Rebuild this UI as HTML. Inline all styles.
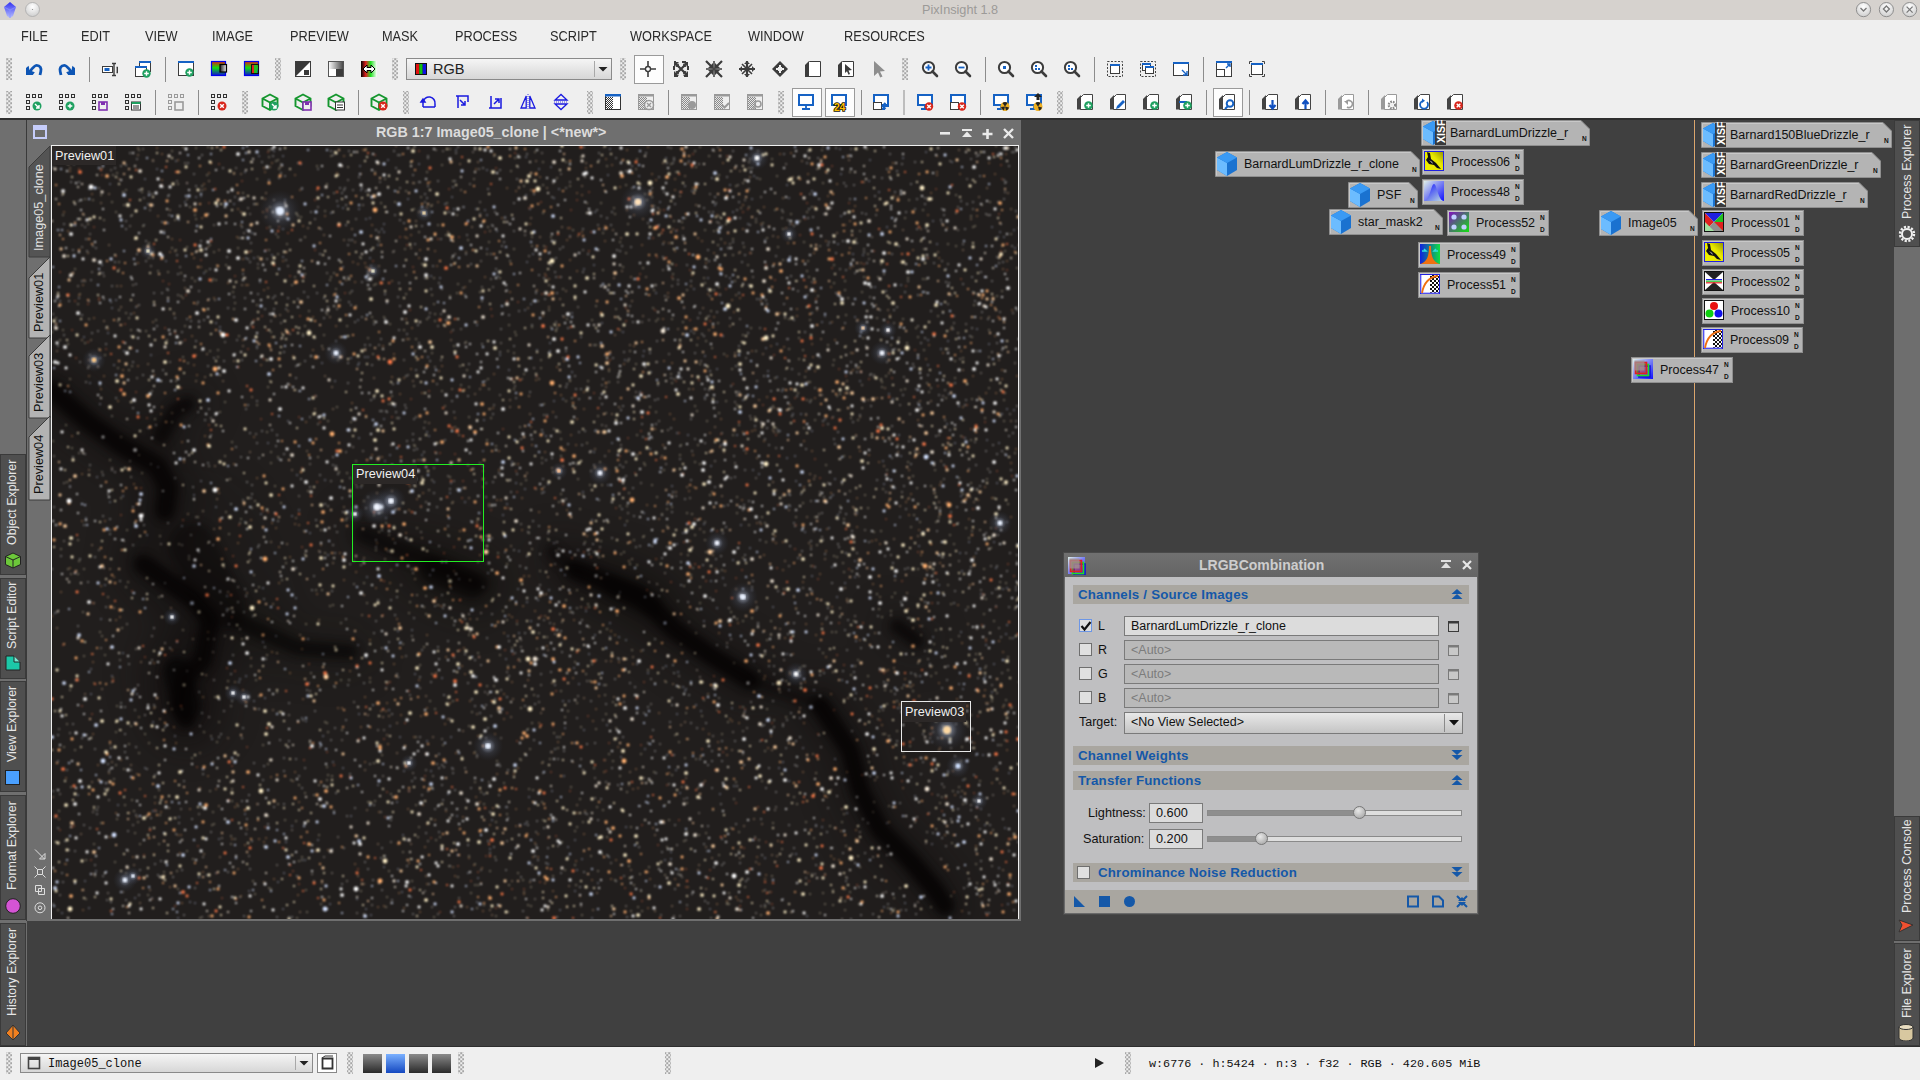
<!DOCTYPE html><html><head><meta charset="utf-8"><title>PixInsight</title><style>
*{box-sizing:border-box}
body{margin:0;width:1920px;height:1080px;overflow:hidden;background:#404040;position:relative;font-family:"Liberation Sans",sans-serif}
.a{position:absolute}
.t{position:absolute;white-space:pre;line-height:1}
.menu{position:absolute;top:29px;font-size:14px;color:#2a2a2a;transform:scaleX(.91);transform-origin:0 0;white-space:pre;line-height:1}
.pi{position:absolute;height:25px;background:#b4b4b4;border-top:1px solid #c6c6c6;border-left:1px solid #c6c6c6;border-right:1px solid #8f8f8f;border-bottom:1px solid #8f8f8f}
.pt{position:absolute;top:5px;font-size:12.5px;color:#111;white-space:pre;line-height:1}
.nd{position:absolute;font:bold 6px "Liberation Sans",sans-serif;color:#111;line-height:1}
.vt{position:absolute;white-space:pre;line-height:1;transform:rotate(-90deg);transform-origin:0 0}
.sh{position:absolute;left:1073px;width:396px;height:19px;background:#a9a6a0}
.sht{position:absolute;left:5px;top:3px;font:bold 13.3px "Liberation Sans",sans-serif;color:#1558a8;white-space:pre;letter-spacing:.2px;line-height:1}
.ed{position:absolute;border:1px solid #7a7a7a;background:#dcdcdc}
.cb{position:absolute;width:13px;height:13px;border:1px solid #6f6f6f;background:#e0e0e0}
</style></head><body><div class="a" style="left:0;top:0;width:1920px;height:20px;background:#d6d2ce"></div><svg class="a" style="left:0;top:0" width="1920" height="20"><defs><linearGradient id="gem" x1="0" y1="0" x2="0" y2="1"><stop offset="0" stop-color="#3030f0"/><stop offset="1" stop-color="#b8c0ff"/></linearGradient><radialGradient id="wb" cx=".5" cy=".3" r=".7"><stop offset="0" stop-color="#ffffff"/><stop offset="1" stop-color="#cfcfcf"/></radialGradient></defs><path d="M4 7 L10 2 L16 7 L13 16 L10 18 L7 16Z" fill="url(#gem)"/><path d="M4 7L10 10L16 7M10 10V18" stroke="#8890ff" stroke-width=".8" fill="none"/><circle cx="32.5" cy="9.5" r="7" fill="url(#wb)" stroke="#a9a9a9" stroke-width=".8"/><circle cx="32.5" cy="9.5" r=".6" fill="#888"/><circle cx="1863.5" cy="9.6" r="7.1" fill="url(#wb)" stroke="#8e8e8e" stroke-width="1"/><circle cx="1886.4" cy="9.6" r="7.1" fill="url(#wb)" stroke="#8e8e8e" stroke-width="1"/><circle cx="1909.6" cy="9.6" r="7.1" fill="url(#wb)" stroke="#8e8e8e" stroke-width="1"/><path d="M1860.5 8l3 3 3-3" stroke="#777" stroke-width="1.3" fill="none"/><path d="M1886.4 6l3 3-3 3-3-3z" stroke="#777" stroke-width="1.3" fill="none"/><path d="M1906.6 6.6l6 6M1912.6 6.6l-6 6" stroke="#777" stroke-width="1.3"/></svg><div class="t" style="left:922px;top:4px;font-size:12.7px;color:#9c9a98">PixInsight 1.8</div><div class="a" style="left:0;top:20px;width:1920px;height:98px;background:#efefef"></div><div class="a" style="left:0;top:118px;width:1920px;height:2px;background:#2e2e2e"></div><div class="menu" style="left:21px">FILE</div><div class="menu" style="left:81px">EDIT</div><div class="menu" style="left:145px">VIEW</div><div class="menu" style="left:212px">IMAGE</div><div class="menu" style="left:290px">PREVIEW</div><div class="menu" style="left:382px">MASK</div><div class="menu" style="left:455px">PROCESS</div><div class="menu" style="left:550px">SCRIPT</div><div class="menu" style="left:630px">WORKSPACE</div><div class="menu" style="left:748px">WINDOW</div><div class="menu" style="left:844px">RESOURCES</div><svg class="a" style="left:0;top:0" width="1920" height="120"><defs>
<pattern id="chk" x="0.5" y="0.5" width="4" height="4" patternUnits="userSpaceOnUse"><rect width="4" height="4" fill="#efefef"/><rect width="1.3" height="1.3" fill="#444"/><rect x="2" y="2" width="1.3" height="1.3" fill="#444"/></pattern>
<pattern id="chk2" width="2" height="2" patternUnits="userSpaceOnUse"><rect width="2" height="2" fill="#fff"/><rect width="1" height="1" fill="#333"/><rect x="1" y="1" width="1" height="1" fill="#333"/></pattern>
<pattern id="chk3" width="2" height="2" patternUnits="userSpaceOnUse"><rect width="2" height="2" fill="#e6e6e6"/><rect width="1" height="1" fill="#8a8a8a"/><rect x="1" y="1" width="1" height="1" fill="#8a8a8a"/></pattern>
<linearGradient id="rgbg" x1="0" y1="0" x2="0" y2="1"><stop offset="0" stop-color="#e02010"/><stop offset=".45" stop-color="#10e010"/><stop offset="1" stop-color="#1010d0"/></linearGradient>
<linearGradient id="grayg" x1="0" y1="0" x2="1" y2="0"><stop offset="0" stop-color="#222"/><stop offset="1" stop-color="#eee"/></linearGradient>
<linearGradient id="grayg2" x1="0" y1="0" x2="1" y2="0"><stop offset="0" stop-color="#fff"/><stop offset="1" stop-color="#444"/></linearGradient>
<linearGradient id="hueg" x1="0" y1="0" x2="1" y2="0"><stop offset="0" stop-color="#000"/><stop offset=".3" stop-color="#e02020"/><stop offset=".6" stop-color="#20e020"/><stop offset="1" stop-color="#fff"/></linearGradient>
<linearGradient id="btng" x1="0" y1="0" x2="0" y2="1"><stop offset="0" stop-color="#f6f6f6"/><stop offset="1" stop-color="#d6d6d6"/></linearGradient>
</defs><rect x="6" y="58" width="6" height="22" fill="url(#chk)"/><g transform="translate(34,69)"><path d="M-4 2.5 C-1.5 -1 0.5 -3.6 2.6 -3.6 C6.2 -3.6 7.6 -0.5 6.8 2.5 L6 6" fill="none" stroke="#0d55b5" stroke-width="2.8"/><path d="M-8 -1 L-5.4 -3.2 L-4.5 1.2 L0.8 3.2 L-1.2 6 L-8 6Z" fill="#0d55b5"/></g><g transform="translate(67,69) scale(-1,1)"><path d="M-4 2.5 C-1.5 -1 0.5 -3.6 2.6 -3.6 C6.2 -3.6 7.6 -0.5 6.8 2.5 L6 6" fill="none" stroke="#0d55b5" stroke-width="2.8"/><path d="M-8 -1 L-5.4 -3.2 L-4.5 1.2 L0.8 3.2 L-1.2 6 L-8 6Z" fill="#0d55b5"/></g><rect x="89.0" y="57" width="1" height="25" fill="#8c8c8c"/><g transform="translate(102,61)"><rect x="0.5" y="5.5" width="10" height="6" fill="#fff" stroke="#3c3c3c"/><rect x="2.5" y="7" width="5" height="3" fill="#1662c4"/><path d="M10 2.5h4M12 2.5v12M10 14.5h4M14.5 6.5h.8v5h-.8" stroke="#3c3c3c" stroke-width="1.4" fill="none"/></g><g transform="translate(135,61)"><rect x="4.5" y="0.5" width="11" height="10" fill="#fff" stroke="#3c3c3c"/><rect x="4" y="0" width="12" height="2" fill="#1662c4"/><rect x="0.5" y="5.5" width="11" height="10" fill="#fff" stroke="#3c3c3c"/><rect x="0" y="5" width="12" height="2" fill="#1662c4"/><circle cx="11.5" cy="12.5" r="4.2" fill="#1fa060"/><path d="M9.2 12.5h4.6M11.5 10.2v4.6" stroke="#fff" stroke-width="1.4"/></g><rect x="165.0" y="57" width="1" height="25" fill="#8c8c8c"/><g transform="translate(178,61)"><rect x="0.5" y="0.5" width="15" height="14" fill="#fff" stroke="#3c3c3c"/><rect x="0" y="0" width="16" height="2" fill="#1662c4"/><circle cx="11.5" cy="11.5" r="4.2" fill="#1fa060"/><path d="M9.2 11.5h4.6M11.5 9.2v4.6" stroke="#fff" stroke-width="1.4"/></g><g transform="translate(211,61)"><rect x="0.5" y="0.5" width="14" height="14" fill="url(#rgbg)" stroke="#0000f0" stroke-width="1.2"/><rect x="9" y="3.5" width="6.5" height="7.5" fill="url(#grayg)" stroke="#000" stroke-width="1.2"/></g><g transform="translate(244,61)"><rect x="0.5" y="0.5" width="14" height="14" fill="url(#rgbg)" stroke="#0000f0" stroke-width="1.2"/><rect x="8" y="4" width="3" height="8" fill="#e02020"/><rect x="10" y="4" width="3" height="8" fill="#20c020"/><rect x="7.5" y="3.5" width="7" height="9" fill="none" stroke="#111"/></g><rect x="275" y="58" width="6" height="22" fill="url(#chk)"/><g transform="translate(295,61)"><rect x="0.5" y="0.5" width="15" height="15" fill="#fff" stroke="#3c3c3c"/><path d="M1 15 L15 1 L1 1Z" fill="#3a3a3a"/><rect x="9" y="9" width="5" height="5" fill="#3a3a3a"/></g><g transform="translate(328,61)"><rect x="0.5" y="0.5" width="15" height="15" fill="url(#grayg2)" stroke="#555"/><rect x="1" y="8" width="7" height="7" fill="#fff"/><rect x="8" y="8" width="7" height="7" fill="#3c3c3c"/></g><g transform="translate(361,61)"><rect x="0" y="0" width="16" height="16" fill="url(#hueg)"/><path d="M2 8 L6 4 V6.5 H10 V4 L14 8 L10 12 V9.5 H6 V12Z" fill="#fff" stroke="#000" stroke-width="1"/></g><rect x="392" y="58" width="6" height="22" fill="url(#chk)"/><rect x="406.5" y="58.5" width="205" height="21" fill="url(#btng)" stroke="#8a8a8a"/><rect x="594" y="61" width="1" height="16" fill="#a8a8a8"/><path d="M598.5 67.0h9l-4.5 4.5z" fill="#222"/><rect x="415" y="63" width="12" height="12" fill="#111"/><rect x="416" y="64" width="3.3" height="10" fill="#e01010"/><rect x="419.3" y="64" width="3.4" height="10" fill="#10c010"/><rect x="422.7" y="64" width="3.3" height="10" fill="#1010e0"/><rect x="620" y="58" width="6" height="22" fill="url(#chk)"/><rect x="634.5" y="55.5" width="29" height="28" fill="#fdfdfd" stroke="#9a9a9a"/><g transform="translate(648,69)" stroke="#3c3c3c" fill="none"><path d="M-8 0h5M3 0h5M0 -8v5M0 3v5" stroke-width="1.6"/><circle r="2.5" stroke-width="1.4"/></g><g transform="translate(681,69)" fill="#3c3c3c"><rect x="-7" y="-7" width="14" height="14" fill="none" stroke="#3c3c3c" stroke-width="2" stroke-dasharray="4 6" stroke-dashoffset="2"/><path transform="rotate(45)" d="M0 -3 L-2.5 -5.5 L2.5 -5.5Z M-1 -5 h2 v-4 h-2z"/><path transform="rotate(135)" d="M0 -3 L-2.5 -5.5 L2.5 -5.5Z M-1 -5 h2 v-4 h-2z"/><path transform="rotate(225)" d="M0 -3 L-2.5 -5.5 L2.5 -5.5Z M-1 -5 h2 v-4 h-2z"/><path transform="rotate(315)" d="M0 -3 L-2.5 -5.5 L2.5 -5.5Z M-1 -5 h2 v-4 h-2z"/><path d="M-7 -7h5l-5 5zM7 -7h-5l5 5zM-7 7h5l-5-5zM7 7h-5l5-5z"/><path d="M-5 -5L5 5M5 -5L-5 5" stroke="#3c3c3c" stroke-width="2.2"/></g><g transform="translate(714,69)" fill="#3c3c3c"><path d="M-8 -8L-1 -1M8 -8L1 -1M-8 8L-1 1M8 8L1 1" stroke="#3c3c3c" stroke-width="2.2"/><path d="M-1 -1h-5l5-5zM1 -1h5l-5-5zM-1 1h-5l5 5zM1 1h5l-5 5z"/><path d="M-8 0h16M0 -8v16" stroke="#3c3c3c" stroke-width="1.5"/></g><g transform="translate(747,69)" fill="#3c3c3c"><path d="M-8 0h16M0 -8v16" stroke="#3c3c3c" stroke-width="2.2"/><path d="M-8 0l3-3v6zM8 0l-3-3v6zM0 -8l-3 3h6zM0 8l-3-3h6z"/><path d="M-5 -5L5 5M5 -5L-5 5" stroke="#3c3c3c" stroke-width="1.6"/></g><g transform="translate(780,69)" fill="#3c3c3c"><path d="M0 -8L8 0L0 8L-8 0Z"/><path d="M-2 -2h4v4h-4z M-4 -1h2v2h-2z M2 -1h2v2h-2z M-1 -4h2v2h-2z M-1 2h2v2h-2z" fill="#efefef"/></g><g transform="translate(805,61)"><path d="M0.5 15.5V4.5L4.5 0.5H15.5V15.5Z" fill="#fff" stroke="#3c3c3c"/><path d="M0 16V4L4 0V16Z" fill="#3c3c3c"/></g><g transform="translate(838,61)"><path d="M0.5 15.5V4.5L4.5 0.5H15.5V15.5Z" fill="#fff" stroke="#3c3c3c"/><path d="M0 16V4L4 0V16Z" fill="#3c3c3c"/><path d="M7 3 L14 9 L10.5 9.5 L12 13 L10.5 13.7 L9 10.2 L7 12Z" fill="#3c3c3c"/></g><g transform="translate(871,61)"><path d="M3 0 L14 10 L9 10.5 L11.5 15.5 L9.2 16.5 L7 11.5 L3 15Z" fill="#8e8e8e"/></g><rect x="902" y="58" width="6" height="22" fill="url(#chk)"/><g transform="translate(930,69)"><circle cx="-1.5" cy="-1.5" r="5.6" fill="#fff" stroke="#3c3c3c" stroke-width="2"/><path d="M2.5 2.5L7 7" stroke="#3c3c3c" stroke-width="2.6" stroke-linecap="round"/><path d="M-4.5 -1.5h6M-1.5 -4.5v6" stroke="#1662c4" stroke-width="1.8"/></g><g transform="translate(963,69)"><circle cx="-1.5" cy="-1.5" r="5.6" fill="#fff" stroke="#3c3c3c" stroke-width="2"/><path d="M2.5 2.5L7 7" stroke="#3c3c3c" stroke-width="2.6" stroke-linecap="round"/><path d="M-4.5 -1.5h6" stroke="#1662c4" stroke-width="1.8"/></g><rect x="985.0" y="57" width="1" height="25" fill="#8c8c8c"/><g transform="translate(1006,69)"><circle cx="-1.5" cy="-1.5" r="5.6" fill="#fff" stroke="#3c3c3c" stroke-width="2"/><path d="M2.5 2.5L7 7" stroke="#3c3c3c" stroke-width="2.6" stroke-linecap="round"/><rect x="-3" y="-3" width="3" height="3" fill="#1662c4"/></g><g transform="translate(1039,69)"><circle cx="-1.5" cy="-1.5" r="5.6" fill="#fff" stroke="#3c3c3c" stroke-width="2"/><path d="M2.5 2.5L7 7" stroke="#3c3c3c" stroke-width="2.6" stroke-linecap="round"/><rect x="-4" y="-4" width="2" height="2" fill="#1662c4"/><rect x="-1" y="-1" width="2" height="2" fill="#1662c4"/><rect x="-4" y="-1" width="2" height="2" fill="#1662c4"/></g><g transform="translate(1072,69)"><circle cx="-1.5" cy="-1.5" r="5.6" fill="#fff" stroke="#3c3c3c" stroke-width="2"/><path d="M2.5 2.5L7 7" stroke="#3c3c3c" stroke-width="2.6" stroke-linecap="round"/><rect x="-4" y="-4" width="2" height="2" fill="#1662c4"/><rect x="-1" y="-1" width="2" height="2" fill="#1662c4"/><rect x="-4" y="-1" width="2" height="2" fill="#1662c4"/></g><rect x="1094.0" y="57" width="1" height="25" fill="#8c8c8c"/><g transform="translate(1107,61)"><rect x="0.5" y="0.5" width="15" height="15" fill="none" stroke="#444" stroke-dasharray="2 1.5"/><rect x="3.5" y="3.5" width="9" height="9" fill="#fff" stroke="#3c3c3c"/><rect x="3" y="3" width="10" height="2" fill="#1662c4"/></g><g transform="translate(1140,61)"><rect x="0.5" y="0.5" width="15" height="15" fill="none" stroke="#444" stroke-dasharray="2 1.5"/><rect x="2.5" y="2.5" width="8" height="7" fill="#fff" stroke="#3c3c3c"/><rect x="2" y="2" width="9" height="2" fill="#1662c4"/><rect x="5.5" y="5.5" width="8" height="7" fill="#fff" stroke="#3c3c3c"/><rect x="5" y="5" width="9" height="2" fill="#1662c4"/></g><g transform="translate(1173,61)"><rect x="0.5" y="1.5" width="15" height="13" fill="#fff" stroke="#3c3c3c"/><rect x="0" y="1" width="16" height="2" fill="#1662c4"/><path d="M9 9L14 14M14 10v4h-4" stroke="#1662c4" stroke-width="1.4" fill="none"/></g><rect x="1203.0" y="57" width="1" height="25" fill="#8c8c8c"/><g transform="translate(1216,61)"><rect x="0.5" y="0.5" width="15" height="15" fill="#fff" stroke="#3c3c3c"/><rect x="0" y="0" width="16" height="2" fill="#1662c4"/><rect x="0.5" y="8.5" width="8" height="7" fill="#fff" stroke="#3c3c3c"/><path d="M10 7L14 3M11 3h3v3" stroke="#1662c4" stroke-width="1.4" fill="none"/></g><g transform="translate(1249,61)"><rect x="2.5" y="2.5" width="11" height="11" fill="#fff" stroke="#3c3c3c"/><rect x="2" y="2" width="12" height="2" fill="#1662c4"/><path d="M0.5 3V0.5H3M13 0.5h2.5V3M15.5 13v2.5H13M3 15.5H0.5V13" stroke="#444" fill="none"/></g><rect x="6" y="91" width="6" height="23" fill="url(#chk)"/><g transform="translate(26,94)" fill="none" stroke="#333" stroke-width="1"><rect x="0.5" y="0.5" width="3" height="3"/><rect x="6.5" y="0.5" width="3" height="3"/><rect x="12.5" y="0.5" width="3" height="3"/><rect x="0.5" y="6.5" width="3" height="3"/><rect x="0.5" y="12.5" width="3" height="3"/></g><circle cx="37" cy="106" r="4.5" fill="#1fa060"/><path d="M35 104l4 4M39 105v3h-3" stroke="#fff" stroke-width="1.4" fill="none"/><g transform="translate(59,94)" fill="none" stroke="#333" stroke-width="1"><rect x="0.5" y="0.5" width="3" height="3"/><rect x="6.5" y="0.5" width="3" height="3"/><rect x="12.5" y="0.5" width="3" height="3"/><rect x="0.5" y="6.5" width="3" height="3"/><rect x="0.5" y="12.5" width="3" height="3"/></g><circle cx="70" cy="106" r="4.5" fill="#1fa060"/><path d="M67.7 106h4.6M70 103.7v4.6" stroke="#fff" stroke-width="1.4"/><g transform="translate(92,94)" fill="none" stroke="#333" stroke-width="1"><rect x="0.5" y="0.5" width="3" height="3"/><rect x="6.5" y="0.5" width="3" height="3"/><rect x="12.5" y="0.5" width="3" height="3"/><rect x="0.5" y="6.5" width="3" height="3"/><rect x="0.5" y="12.5" width="3" height="3"/></g><rect x="99" y="102" width="8" height="8" fill="none" stroke="#8030b0" stroke-width="1.6"/><rect x="101" y="102" width="4" height="3" fill="#8030b0"/><g transform="translate(125,94)" fill="none" stroke="#333" stroke-width="1"><rect x="0.5" y="0.5" width="3" height="3"/><rect x="6.5" y="0.5" width="3" height="3"/><rect x="12.5" y="0.5" width="3" height="3"/><rect x="0.5" y="6.5" width="3" height="3"/><rect x="0.5" y="12.5" width="3" height="3"/></g><rect x="131.5" y="102" width="9" height="8" fill="#fff" stroke="#333"/><rect x="131.5" y="102" width="9" height="2" fill="#1fa060"/><path d="M133 106h6M133 108h6" stroke="#333"/><rect x="155.0" y="90" width="1" height="25" fill="#8c8c8c"/><g transform="translate(168,94)" fill="none" stroke="#9a9a9a" stroke-width="1"><rect x="0.5" y="0.5" width="3" height="3"/><rect x="6.5" y="0.5" width="3" height="3"/><rect x="12.5" y="0.5" width="3" height="3"/><rect x="0.5" y="6.5" width="3" height="3"/><rect x="0.5" y="12.5" width="3" height="3"/></g><rect x="175" y="102" width="8" height="8" fill="none" stroke="#9a9a9a" stroke-width="1.6"/><rect x="198.0" y="90" width="1" height="25" fill="#8c8c8c"/><g transform="translate(211,94)" fill="none" stroke="#333" stroke-width="1"><rect x="0.5" y="0.5" width="3" height="3"/><rect x="6.5" y="0.5" width="3" height="3"/><rect x="12.5" y="0.5" width="3" height="3"/><rect x="0.5" y="6.5" width="3" height="3"/><rect x="0.5" y="12.5" width="3" height="3"/></g><circle cx="222" cy="106" r="4.5" fill="#d8261c"/><path d="M220.2 104.2l3.6 3.6M223.8 104.2l-3.6 3.6" stroke="#fff" stroke-width="1.4"/><rect x="242" y="91" width="6" height="23" fill="url(#chk)"/><g transform="translate(270,102)" fill="none" stroke="#15962e" stroke-width="1.9"><path d="M0 -7.5L7.5 -3.5V4L0 8L-7.5 4V-3.5Z M-7.5 -3.5L0 0.5L7.5 -3.5 M0 0.5V8"/></g><circle cx="274" cy="106" r="4.5" fill="#1fa060"/><path d="M272 104l4 4M276 105v3h-3" stroke="#fff" stroke-width="1.4" fill="none"/><g transform="translate(303,102)" fill="none" stroke="#15962e" stroke-width="1.9"><path d="M0 -7.5L7.5 -3.5V4L0 8L-7.5 4V-3.5Z M-7.5 -3.5L0 0.5L7.5 -3.5 M0 0.5V8"/></g><rect x="303" y="102" width="8" height="8" fill="#efefef" stroke="#8030b0" stroke-width="1.6"/><rect x="305" y="102" width="4" height="3" fill="#8030b0"/><g transform="translate(336,102)" fill="none" stroke="#15962e" stroke-width="1.9"><path d="M0 -7.5L7.5 -3.5V4L0 8L-7.5 4V-3.5Z M-7.5 -3.5L0 0.5L7.5 -3.5 M0 0.5V8"/></g><rect x="335.5" y="102" width="9" height="8" fill="#fff" stroke="#333"/><path d="M337 105h6M337 107.5h6" stroke="#333"/><rect x="358.0" y="90" width="1" height="25" fill="#8c8c8c"/><g transform="translate(379,102)" fill="none" stroke="#15962e" stroke-width="1.9"><path d="M0 -7.5L7.5 -3.5V4L0 8L-7.5 4V-3.5Z M-7.5 -3.5L0 0.5L7.5 -3.5 M0 0.5V8"/></g><circle cx="383" cy="106" r="4.5" fill="#d8261c"/><path d="M381.2 104.2l3.6 3.6M384.8 104.2l-3.6 3.6" stroke="#fff" stroke-width="1.4"/><rect x="403" y="91" width="6" height="23" fill="url(#chk)"/><g transform="translate(429,102)" fill="none" stroke="#1a1ae0" stroke-width="1.5"><path d="M-6 5h12 M-6 5V0 A6 6 0 0 1 6 2V5"/><path d="M-8 0l2-3 2 3z" fill="#1a1ae0"/></g><g transform="translate(462,102)" fill="none" stroke="#1a1ae0" stroke-width="1.5"><path d="M-6 -6h12v6M-4 -6v12"/><path d="M-2 -2l5 5M3 -1v4h-4" /></g><g transform="translate(495,102)" fill="none" stroke="#1a1ae0" stroke-width="1.5"><path d="M-6 6h12v-10M-4 6v-12"/><path d="M-1 2l5-5M0 -3h4v4"/></g><g transform="translate(528,102)" fill="none" stroke="#1a1ae0" stroke-width="1.5"><path d="M-1.8 -6V6H-7ZM1.8 -6V6H7Z" stroke-width="1.3"/><path d="M0 -8v16" stroke-width=".8" stroke-dasharray="1 1"/></g><g transform="translate(561,102)" fill="none" stroke="#1a1ae0" stroke-width="1.5"><path d="M-6 -2H6L0 -7.5ZM-6 2H6L0 7.5Z" stroke-width="1.3"/><path d="M-7 0h14" stroke-width=".8" stroke-dasharray="1 1"/></g><rect x="587" y="91" width="6" height="23" fill="url(#chk)"/><g transform="translate(605,94)"><rect x="0.5" y="0.5" width="15" height="15" fill="#fff" stroke="#333"/><rect x="1" y="3" width="7" height="12" fill="url(#chk2)"/><rect x="0" y="0" width="16" height="2.5" fill="#1662c4"/></g><g transform="translate(638,94)"><rect x="0.5" y="0.5" width="15" height="15" fill="#efefef" stroke="#9a9a9a"/><rect x="1" y="3" width="8" height="12" fill="url(#chk3)"/><rect x="0" y="0" width="16" height="2.5" fill="#9a9a9a"/><circle cx="11" cy="11" r="4.5" fill="#efefef" stroke="#9a9a9a" stroke-width="1.5"/><path d="M9 9l4 4M13 9l-4 4" stroke="#9a9a9a" stroke-width="1.4"/></g><rect x="668.0" y="90" width="1" height="25" fill="#8c8c8c"/><g transform="translate(681,94)"><rect x="0.5" y="0.5" width="15" height="15" fill="#efefef" stroke="#9a9a9a"/><rect x="1" y="3" width="8" height="12" fill="url(#chk3)"/><rect x="0" y="0" width="16" height="2.5" fill="#9a9a9a"/><circle cx="11" cy="11" r="4" fill="#9a9a9a"/></g><g transform="translate(714,94)"><rect x="0.5" y="0.5" width="15" height="15" fill="#efefef" stroke="#9a9a9a"/><rect x="1" y="3" width="8" height="12" fill="url(#chk3)"/><rect x="0" y="0" width="16" height="2.5" fill="#9a9a9a"/><path d="M8 11l2.5 2.5L15 9" stroke="#9a9a9a" stroke-width="2" fill="none"/></g><g transform="translate(747,94)"><rect x="0.5" y="0.5" width="15" height="15" fill="#efefef" stroke="#9a9a9a"/><rect x="1" y="3" width="8" height="12" fill="url(#chk3)"/><rect x="0" y="0" width="16" height="2.5" fill="#9a9a9a"/><circle cx="11" cy="10" r="3" fill="none" stroke="#9a9a9a" stroke-width="1.6"/><path d="M9 12l-3 3" stroke="#9a9a9a" stroke-width="1.6"/></g><rect x="778" y="91" width="6" height="23" fill="url(#chk)"/><rect x="792.5" y="88.5" width="29" height="28" fill="#fdfdfd" stroke="#9a9a9a"/><g transform="translate(798,94)"><rect x="1" y="1" width="14" height="10" fill="#fff" stroke="#1662c4" stroke-width="2"/><path d="M8 11v3M4 15h8" stroke="#1662c4" stroke-width="1.8"/></g><rect x="825.5" y="88.5" width="29" height="28" fill="#fdfdfd" stroke="#9a9a9a"/><g transform="translate(831,94)"><rect x="1" y="1" width="14" height="10" fill="#fff" stroke="#1662c4" stroke-width="2"/><path d="M8 11v3M4 15h8" stroke="#1662c4" stroke-width="1.8"/><text x="3" y="16.5" font-family="Liberation Sans" font-weight="bold" font-size="10.5" fill="#ffc000" stroke="#111" stroke-width="1.6" paint-order="stroke" letter-spacing="-.3">24</text></g><rect x="861.0" y="90" width="1" height="25" fill="#8c8c8c"/><g transform="translate(873,94)"><rect x="1" y="1" width="14" height="10" fill="#fff" stroke="#1662c4" stroke-width="2"/><path d="M8 11v3M4 15h8" stroke="#1662c4" stroke-width="1.8"/><rect x="0.5" y="8.5" width="8" height="7" fill="#fff" stroke="#3c3c3c"/><path d="M16 12H9.5M12.5 9L9.5 12L12.5 15" stroke="#1662c4" stroke-width="2" fill="none"/></g><rect x="903.5" y="90" width="1" height="25" fill="#8c8c8c"/><g transform="translate(917,94)"><rect x="1" y="1" width="14" height="10" fill="#fff" stroke="#1662c4" stroke-width="2"/><path d="M8 11v3M4 15h8" stroke="#1662c4" stroke-width="1.8"/><circle cx="12" cy="12.5" r="4.2" fill="#d8261c"/><path d="M10.2 10.7l3.6 3.6M13.8 10.7l-3.6 3.6" stroke="#fff" stroke-width="1.4"/></g><g transform="translate(950,94)"><rect x="1" y="1" width="14" height="10" fill="#fff" stroke="#1662c4" stroke-width="2"/><path d="M8 11v3M4 15h8" stroke="#1662c4" stroke-width="1.8"/><rect x="0.5" y="8.5" width="8" height="7" fill="#fff" stroke="#3c3c3c"/><circle cx="12" cy="12.5" r="4.2" fill="#d8261c"/><path d="M10.2 10.7l3.6 3.6M13.8 10.7l-3.6 3.6" stroke="#fff" stroke-width="1.4"/></g><rect x="980.0" y="90" width="1" height="25" fill="#8c8c8c"/><g transform="translate(993,94)"><rect x="1" y="1" width="14" height="10" fill="#fff" stroke="#1662c4" stroke-width="2"/><path d="M8 11v3M4 15h8" stroke="#1662c4" stroke-width="1.8"/><circle cx="12" cy="12.5" r="4.5" fill="#f0b020"/><path d="M12 12.5l-2.5-3.5A4 4 0 0 1 14.5 9z M12 12.5l4 1A4 4 0 0 1 13 16.5z M12 12.5l-1 4A4 4 0 0 1 8 13z" fill="#222"/></g><g transform="translate(1026,94)"><rect x="1" y="1" width="14" height="10" fill="#fff" stroke="#1662c4" stroke-width="2"/><path d="M8 11v3M4 15h8" stroke="#1662c4" stroke-width="1.8"/><circle cx="12" cy="12.5" r="4.5" fill="#f0b020"/><path d="M12 12.5l-2.5-3.5A4 4 0 0 1 14.5 9z M12 12.5l4 1A4 4 0 0 1 13 16.5z" fill="#222"/><path d="M12 -1l-4 4h2.5v3h3v-3H16z" fill="#222"/></g><rect x="1057" y="91" width="6" height="23" fill="url(#chk)"/><g transform="translate(1077,94)"><path d="M3.5 15.5V3.5L6.5 0.5H15.5V15.5Z" fill="#fff" stroke="#444"/><path d="M0 15.5V5L4 1V15.5Z" fill="#444"/><circle cx="11.5" cy="11.5" r="4.3" fill="#1fa060"/><path d="M9.2 11.5h4.6M11.5 9.2v4.6" stroke="#fff" stroke-width="1.4"/></g><g transform="translate(1110,94)"><path d="M3.5 15.5V3.5L6.5 0.5H15.5V15.5Z" fill="#fff" stroke="#444"/><path d="M0 15.5V5L4 1V15.5Z" fill="#444"/><path d="M6 15l1-3 6-6 2 2-6 6z" fill="#1662c4"/></g><g transform="translate(1143,94)"><path d="M3.5 15.5V3.5L6.5 0.5H15.5V15.5Z" fill="#fff" stroke="#444"/><path d="M0 15.5V5L4 1V15.5Z" fill="#444"/><circle cx="11.5" cy="11.5" r="4.3" fill="#1fa060"/><path d="M9.2 11.5h4.6M11.5 9.2v4.6" stroke="#fff" stroke-width="1.4"/></g><g transform="translate(1176,94)"><path d="M3.5 15.5V3.5L6.5 0.5H15.5V15.5Z" fill="#fff" stroke="#444"/><path d="M0 15.5V5L4 1V15.5Z" fill="#444"/><rect x="3" y="7" width="8" height="2" fill="#1662c4"/><circle cx="11.5" cy="11.5" r="4.3" fill="#1fa060"/><path d="M9.2 11.5h4.6M11.5 9.2v4.6" stroke="#fff" stroke-width="1.4"/></g><rect x="1206.0" y="90" width="1" height="25" fill="#8c8c8c"/><rect x="1213.5" y="88.5" width="29" height="28" fill="#fdfdfd" stroke="#9a9a9a"/><g transform="translate(1219,94)"><path d="M3.5 15.5V3.5L6.5 0.5H15.5V15.5Z" fill="#fff" stroke="#444"/><path d="M0 15.5V5L4 1V15.5Z" fill="#444"/><circle cx="11" cy="9.5" r="3.3" fill="none" stroke="#1662c4" stroke-width="2"/><path d="M9 12l-3 3" stroke="#1662c4" stroke-width="2"/></g><rect x="1249.0" y="90" width="1" height="25" fill="#8c8c8c"/><g transform="translate(1262,94)"><path d="M3.5 15.5V3.5L6.5 0.5H15.5V15.5Z" fill="#fff" stroke="#444"/><path d="M0 15.5V5L4 1V15.5Z" fill="#444"/><path d="M10.5 6v8M7.5 11l3 3.5 3-3.5" stroke="#1050c0" stroke-width="2.2" fill="none"/></g><g transform="translate(1295,94)"><path d="M3.5 15.5V3.5L6.5 0.5H15.5V15.5Z" fill="#fff" stroke="#444"/><path d="M0 15.5V5L4 1V15.5Z" fill="#444"/><path d="M10.5 15v-8M7.5 10l3-3.5 3 3.5" stroke="#1050c0" stroke-width="2.2" fill="none"/></g><rect x="1325.0" y="90" width="1" height="25" fill="#8c8c8c"/><g transform="translate(1338,94)"><path d="M3.5 15.5V3.5L6.5 0.5H15.5V15.5Z" fill="#fff" stroke="#9a9a9a"/><path d="M0 15.5V5L4 1V15.5Z" fill="#9a9a9a"/><path d="M8 8a3.5 3.5 0 1 1 1 5" stroke="#9a9a9a" stroke-width="1.6" fill="none"/><path d="M6 7h4v4z" fill="#9a9a9a"/></g><rect x="1368.0" y="90" width="1" height="25" fill="#8c8c8c"/><g transform="translate(1381,94)"><path d="M3.5 15.5V3.5L6.5 0.5H15.5V15.5Z" fill="#fff" stroke="#9a9a9a"/><path d="M0 15.5V5L4 1V15.5Z" fill="#9a9a9a"/><circle cx="11" cy="11" r="3.2" fill="none" stroke="#8a8a8a" stroke-width="2.4" stroke-dasharray="1.6 1"/><circle cx="11" cy="11" r="1.2" fill="#eee"/></g><g transform="translate(1414,94)"><path d="M3.5 15.5V3.5L6.5 0.5H15.5V15.5Z" fill="#fff" stroke="#444"/><path d="M0 15.5V5L4 1V15.5Z" fill="#444"/><path d="M13 8a4 4 0 1 1 -4.5 -1" stroke="#1662c4" stroke-width="1.8" fill="none"/><path d="M8 4.5l3 2.3-3 2.2z" fill="#1662c4"/></g><g transform="translate(1447,94)"><path d="M3.5 15.5V3.5L6.5 0.5H15.5V15.5Z" fill="#fff" stroke="#444"/><path d="M0 15.5V5L4 1V15.5Z" fill="#444"/><circle cx="11.5" cy="11.5" r="4.3" fill="#d8261c"/><path d="M9.7 9.7l3.6 3.6M13.3 9.7l-3.6 3.6" stroke="#fff" stroke-width="1.4"/></g></svg><div class="t" style="left:433px;top:62px;font-size:14.5px;color:#222">RGB</div><div class="a" style="left:0;top:120px;width:27px;height:926px;background:#6f6f6f"></div><div class="a" style="left:0;top:454px;width:26px;height:121px;background:#4f4f4f;border:1px solid #3a3a3a"></div><div class="vt" style="left:6px;top:545px;font-size:12.4px;color:#e6e6e6">Object Explorer</div><svg class="a" style="left:4px;top:552px" width="18" height="17"><path d="M9 1L16.5 4.5V12.5L9 16L1.5 12.5V4.5Z" fill="#6cc83a" stroke="#222" stroke-width="1"/><path d="M1.5 4.5L9 8L16.5 4.5M9 8V16" stroke="#222" stroke-width="1" fill="none"/></svg><div class="a" style="left:0;top:578px;width:26px;height:101px;background:#4f4f4f;border:1px solid #3a3a3a"></div><div class="vt" style="left:6px;top:649px;font-size:12.4px;color:#e6e6e6">Script Editor</div><svg class="a" style="left:5px;top:655px" width="16" height="16"><path d="M1 1H9L15 7V15H1Z" fill="#1cc8a8" stroke="#222"/><path d="M9 1V7H15" fill="#7ee8d4" stroke="#222"/></svg><div class="a" style="left:0;top:681px;width:26px;height:111px;background:#4f4f4f;border:1px solid #3a3a3a"></div><div class="vt" style="left:6px;top:762px;font-size:12.4px;color:#e6e6e6">View Explorer</div><svg class="a" style="left:5px;top:770px" width="16" height="16"><rect x="0.5" y="0.5" width="14" height="14" fill="#4aa0ff" stroke="#222"/></svg><div class="a" style="left:0;top:795px;width:26px;height:125px;background:#4f4f4f;border:1px solid #3a3a3a"></div><div class="vt" style="left:6px;top:890px;font-size:12.4px;color:#e6e6e6">Format Explorer</div><svg class="a" style="left:4px;top:897px" width="18" height="18"><circle cx="9" cy="9" r="7.3" fill="#d454d4" stroke="#222"/></svg><div class="a" style="left:0;top:923px;width:26px;height:123px;background:#4f4f4f;border:1px solid #3a3a3a"></div><div class="vt" style="left:6px;top:1016px;font-size:12.4px;color:#e6e6e6">History Explorer</div><svg class="a" style="left:4px;top:1024px" width="18" height="18"><path d="M9 1L16 9L9 16L2 9Z" fill="#f08020" stroke="#333"/><path d="M9 1V16" stroke="#333"/></svg><div class="a" style="left:26px;top:120px;width:995px;height:801px;background:#6f6f6f;border-left:1px solid #3a3a3a"></div><svg class="a" style="left:33px;top:125px" width="15" height="15"><rect x="0" y="0" width="14" height="14" fill="#c6cdfb"/><rect x="2" y="5" width="10" height="7" fill="#6e6e6e"/></svg><div class="t" style="left:376px;top:124px;font:bold 14.3px 'Liberation Sans',sans-serif;color:#dcdcdc">RGB 1:7 Image05_clone | &lt;*new*&gt;</div><svg class="a" style="left:935px;top:124px" width="85" height="18" fill="#eaeaea"><rect x="5" y="8" width="10" height="2.6"/><rect x="27" y="5" width="10" height="2"/><path d="M32 7.5L37 13H27Z"/><path d="M51.2 5h2.6v10h-2.6z M47.5 8.7h10v2.6h-10z"/><path d="M69 5l9 9M78 5l-9 9" stroke="#eaeaea" stroke-width="2.4"/></svg><div class="a" style="left:27px;top:146px;width:24px;height:774px;background:#6f6f6f"></div><svg class="a" style="left:0;top:0" width="52" height="259"><polygon points="29,167 50,146 50,257 29,257" fill="#545454" stroke="#3c3c3c" stroke-width="1"/></svg><div class="vt" style="left:33px;top:251px;font-size:12.7px;color:#e0e0e0">Image05_clone</div><svg class="a" style="left:0;top:0" width="52" height="340"><polygon points="29,278 50,257 50,338 29,338" fill="#b3b3b3" stroke="#3c3c3c" stroke-width="1"/></svg><div class="vt" style="left:33px;top:332px;font-size:12.7px;color:#111">Preview01</div><svg class="a" style="left:0;top:0" width="52" height="420"><polygon points="29,356 50,335 50,418 29,418" fill="#b3b3b3" stroke="#3c3c3c" stroke-width="1"/></svg><div class="vt" style="left:33px;top:412px;font-size:12.7px;color:#111">Preview03</div><svg class="a" style="left:0;top:0" width="52" height="502"><polygon points="29,437 50,416 50,500 29,500" fill="#b3b3b3" stroke="#3c3c3c" stroke-width="1"/></svg><div class="vt" style="left:33px;top:494px;font-size:12.7px;color:#111">Preview04</div><svg class="a" style="left:31px;top:845px" width="20" height="72" stroke="#dedede" fill="none" stroke-width="1"><path d="M4 4.5l9.5 9.5M14 8.5v5.5h-5.5z"/><path d="M6.5 24.5h5v5h-5z M6.5 24.5l-3-3M11.5 24.5l3-3M6.5 29.5l-3 3M11.5 29.5l3 3"/><path d="M4.5 40.5h6v6h-6z M7.5 43.5h6v6h-6z"/><circle cx="9" cy="62.8" r="5"/><circle cx="9" cy="62.8" r="1.8"/></svg><div class="a" style="left:51px;top:145px;width:968px;height:774px;background:#f0f0f0"></div><div class="a" style="left:52px;top:146px;width:966px;height:773px;overflow:hidden"><svg width="967" height="773" viewBox="0 0 967 773" style="position:absolute;left:0;top:0;display:block">
<defs><radialGradient id="glow"><stop offset="0" stop-color="#f4f8ff" stop-opacity="1"/><stop offset=".18" stop-color="#c8d4ec" stop-opacity=".6"/><stop offset=".5" stop-color="#7888a8" stop-opacity=".2"/><stop offset="1" stop-color="#405070" stop-opacity="0"/></radialGradient>
<filter id="blur" color-interpolation-filters="sRGB" x="-20%" y="-20%" width="140%" height="140%"><feGaussianBlur stdDeviation="4.5"/></filter><filter id="blur2" color-interpolation-filters="sRGB" x="-20%" y="-20%" width="140%" height="140%"><feGaussianBlur stdDeviation="16"/></filter><filter id="grain" x="0" y="0" width="100%" height="100%"><feTurbulence type="fractalNoise" baseFrequency=".9" numOctaves="1" seed="5"/><feColorMatrix type="matrix" values="0 0 0 0 .75 0 0 0 0 .68 0 0 0 0 .62 0 0 0 3 -1.3"/></filter><filter id="sb" color-interpolation-filters="sRGB" x="-2%" y="-2%" width="104%" height="104%"><feGaussianBlur stdDeviation=".85"/></filter></defs>
<rect width="967" height="773" fill="#211e1d"/>
<g filter="url(#blur2)"><path d="M0 244L35 275L70 300L105 320L116 341L113 365" stroke="#0a0807" stroke-width="59" stroke-opacity="0.29" fill="none" stroke-linecap="round" stroke-linejoin="round"/><path d="M109 290L123 265L136 258" stroke="#0a0807" stroke-width="46" stroke-opacity="0.22" fill="none" stroke-linecap="round" stroke-linejoin="round"/><path d="M91 418L141 453L158 474L151 513L134 531L127 559L134 573" stroke="#0a0807" stroke-width="55" stroke-opacity="0.29" fill="none" stroke-linecap="round" stroke-linejoin="round"/><path d="M125 525L135 560" stroke="#0a0807" stroke-width="84" stroke-opacity="0.26" fill="none" stroke-linecap="round" stroke-linejoin="round"/><path d="M140 400L170 460" stroke="#0a0807" stroke-width="151" stroke-opacity="0.11" fill="none" stroke-linecap="round" stroke-linejoin="round"/><path d="M183 474L246 502L299 506" stroke="#0a0807" stroke-width="46" stroke-opacity="0.19" fill="none" stroke-linecap="round" stroke-linejoin="round"/><path d="M311 388L350 405L390 420L428 437" stroke="#0a0807" stroke-width="55" stroke-opacity="0.18" fill="none" stroke-linecap="round" stroke-linejoin="round"/><path d="M380 425L420 440" stroke="#0a0807" stroke-width="76" stroke-opacity="0.19" fill="none" stroke-linecap="round" stroke-linejoin="round"/><path d="M500 405L523 424" stroke="#0a0807" stroke-width="38" stroke-opacity="0.16" fill="none" stroke-linecap="round" stroke-linejoin="round"/><path d="M523 424L588 449L623 484L658 509L698 534" stroke="#0a0807" stroke-width="55" stroke-opacity="0.30" fill="none" stroke-linecap="round" stroke-linejoin="round"/><path d="M698 534L768 559" stroke="#0a0807" stroke-width="38" stroke-opacity="0.11" fill="none" stroke-linecap="round" stroke-linejoin="round"/><path d="M768 559L798 604L808 644L828 684L858 714L883 744L893 760" stroke="#0a0807" stroke-width="55" stroke-opacity="0.30" fill="none" stroke-linecap="round" stroke-linejoin="round"/><path d="M560 440L600 460" stroke="#0a0807" stroke-width="67" stroke-opacity="0.19" fill="none" stroke-linecap="round" stroke-linejoin="round"/><path d="M845 480L865 495" stroke="#0a0807" stroke-width="42" stroke-opacity="0.22" fill="none" stroke-linecap="round" stroke-linejoin="round"/></g><g filter="url(#blur)"><path d="M0 244L35 275L70 300L105 320L116 341L113 365" stroke="#060404" stroke-width="18" stroke-opacity="0.77" fill="none" stroke-linecap="round" stroke-linejoin="round"/><path d="M109 290L123 265L136 258" stroke="#060404" stroke-width="14" stroke-opacity="0.59" fill="none" stroke-linecap="round" stroke-linejoin="round"/><path d="M91 418L141 453L158 474L151 513L134 531L127 559L134 573" stroke="#060404" stroke-width="17" stroke-opacity="0.77" fill="none" stroke-linecap="round" stroke-linejoin="round"/><path d="M125 525L135 560" stroke="#060404" stroke-width="26" stroke-opacity="0.68" fill="none" stroke-linecap="round" stroke-linejoin="round"/><path d="M140 400L170 460" stroke="#060404" stroke-width="47" stroke-opacity="0.30" fill="none" stroke-linecap="round" stroke-linejoin="round"/><path d="M183 474L246 502L299 506" stroke="#060404" stroke-width="14" stroke-opacity="0.51" fill="none" stroke-linecap="round" stroke-linejoin="round"/><path d="M311 388L350 405L390 420L428 437" stroke="#060404" stroke-width="17" stroke-opacity="0.47" fill="none" stroke-linecap="round" stroke-linejoin="round"/><path d="M380 425L420 440" stroke="#060404" stroke-width="23" stroke-opacity="0.51" fill="none" stroke-linecap="round" stroke-linejoin="round"/><path d="M500 405L523 424" stroke="#060404" stroke-width="12" stroke-opacity="0.42" fill="none" stroke-linecap="round" stroke-linejoin="round"/><path d="M523 424L588 449L623 484L658 509L698 534" stroke="#060404" stroke-width="17" stroke-opacity="0.81" fill="none" stroke-linecap="round" stroke-linejoin="round"/><path d="M698 534L768 559" stroke="#060404" stroke-width="12" stroke-opacity="0.30" fill="none" stroke-linecap="round" stroke-linejoin="round"/><path d="M768 559L798 604L808 644L828 684L858 714L883 744L893 760" stroke="#060404" stroke-width="17" stroke-opacity="0.81" fill="none" stroke-linecap="round" stroke-linejoin="round"/><path d="M560 440L600 460" stroke="#060404" stroke-width="21" stroke-opacity="0.51" fill="none" stroke-linecap="round" stroke-linejoin="round"/><path d="M845 480L865 495" stroke="#060404" stroke-width="13" stroke-opacity="0.59" fill="none" stroke-linecap="round" stroke-linejoin="round"/></g>
<g filter="url(#sb)"><path d="M313 117h.1M22 735h.1M779 633h.1M204 195h.1M64 667h.1M607 567h.1M530 49h.1M854 356h.1M637 345h.1M486 711h.1M149 121h.1M756 727h.1M751 626h.1M327 666h.1M745 163h.1M799 226h.1M437 263h.1M688 152h.1M575 4h.1M524 715h.1M567 516h.1M734 82h.1M870 454h.1M340 231h.1M109 666h.1M243 378h.1M56 183h.1M713 733h.1M264 211h.1M7 673h.1M67 33h.1M467 42h.1M519 289h.1M49 243h.1M284 180h.1M173 609h.1M518 91h.1M16 85h.1M783 194h.1M350 511h.1M620 217h.1M909 205h.1M191 544h.1M0 470h.1M132 314h.1M673 97h.1M418 555h.1M582 200h.1M211 66h.1M479 281h.1M609 87h.1M525 667h.1M623 733h.1M623 105h.1M304 426h.1M755 237h.1M394 511h.1M636 17h.1M700 285h.1M426 590h.1M215 63h.1M775 383h.1M77 667h.1M673 425h.1M821 438h.1M946 171h.1M780 461h.1M954 8h.1M355 92h.1M110 34h.1M422 719h.1M168 187h.1M445 628h.1M403 730h.1M313 616h.1M820 570h.1M928 750h.1M859 348h.1M452 487h.1M941 151h.1M243 626h.1M537 252h.1M525 273h.1M464 663h.1M541 575h.1M656 148h.1M269 399h.1M856 353h.1M589 505h.1M128 625h.1M712 295h.1M867 550h.1M368 104h.1M922 411h.1M88 643h.1M752 295h.1M848 558h.1M243 29h.1M342 518h.1M763 145h.1M212 22h.1M723 390h.1M846 51h.1M924 700h.1M713 530h.1M724 397h.1M703 284h.1M185 658h.1M353 91h.1M925 70h.1M86 220h.1M82 167h.1M386 56h.1M487 577h.1M596 762h.1M413 528h.1M167 78h.1M428 656h.1M320 79h.1M162 152h.1M827 210h.1M396 573h.1M501 266h.1M694 307h.1M214 692h.1M763 252h.1M951 506h.1M52 230h.1M64 474h.1M431 341h.1M641 309h.1M14 632h.1M495 500h.1M684 751h.1M842 50h.1M313 551h.1M782 713h.1M742 451h.1M40 728h.1M888 602h.1M9 446h.1M556 639h.1M733 492h.1M959 371h.1M428 643h.1M861 539h.1M751 436h.1M400 316h.1M739 7h.1M933 341h.1M82 338h.1M182 27h.1M470 384h.1M452 548h.1M238 229h.1M544 563h.1M285 29h.1M358 340h.1M58 502h.1M754 478h.1M566 601h.1M300 257h.1M314 121h.1M264 705h.1M805 352h.1M612 96h.1M726 695h.1M638 395h.1M205 332h.1M900 562h.1M327 91h.1M595 359h.1M151 726h.1M408 385h.1M687 48h.1M428 409h.1M371 659h.1M338 437h.1M205 58h.1M836 207h.1M135 37h.1M805 381h.1M369 570h.1M774 511h.1M600 46h.1M709 378h.1M943 28h.1M303 136h.1M318 494h.1M102 229h.1M913 647h.1M640 129h.1M441 662h.1M477 663h.1M224 382h.1M564 714h.1M732 201h.1M671 17h.1M952 647h.1M62 431h.1M491 449h.1M142 112h.1M686 477h.1M253 386h.1M132 316h.1M568 41h.1M801 207h.1M512 215h.1M145 229h.1M186 63h.1M590 99h.1M368 766h.1M965 230h.1M700 205h.1M738 528h.1M383 674h.1M559 485h.1M30 744h.1M686 754h.1M760 198h.1M763 225h.1M326 761h.1M410 520h.1M118 106h.1M370 247h.1M196 139h.1M394 665h.1M30 375h.1M867 307h.1M199 374h.1M888 417h.1M371 347h.1M288 407h.1M422 607h.1M830 579h.1M247 656h.1M838 169h.1M623 33h.1M231 115h.1M417 712h.1M212 144h.1M366 314h.1M931 694h.1M836 524h.1M764 489h.1M879 47h.1M809 117h.1M857 324h.1M460 471h.1M192 359h.1M213 53h.1M375 61h.1M329 565h.1M516 82h.1M192 554h.1M102 708h.1M596 1h.1M906 459h.1M877 199h.1M731 396h.1M128 707h.1M712 533h.1M680 154h.1M156 486h.1M901 625h.1M903 649h.1M675 755h.1M887 112h.1M653 635h.1M68 471h.1M926 354h.1M749 537h.1M431 765h.1M194 139h.1M559 515h.1M164 643h.1M401 721h.1M885 26h.1M362 591h.1M560 19h.1M761 211h.1M806 174h.1M42 537h.1M460 536h.1M40 48h.1M834 525h.1M716 602h.1M122 581h.1M563 489h.1M120 504h.1M623 44h.1M760 305h.1M290 562h.1M530 86h.1M705 377h.1M157 27h.1M825 252h.1M336 598h.1M437 750h.1M18 422h.1M921 230h.1M607 373h.1M309 581h.1M728 167h.1M447 305h.1M926 674h.1M466 318h.1M183 661h.1M598 733h.1M964 303h.1M817 309h.1M167 347h.1M53 375h.1M893 689h.1M575 64h.1M899 183h.1M348 248h.1M808 305h.1M571 335h.1M745 170h.1M510 194h.1M801 224h.1M31 139h.1M887 537h.1M650 95h.1M156 68h.1M534 22h.1M176 137h.1M365 353h.1M752 341h.1M488 31h.1M937 17h.1M936 557h.1M330 311h.1M719 590h.1M320 309h.1M213 26h.1M334 565h.1M106 70h.1M375 562h.1M450 72h.1M728 8h.1M466 622h.1M335 557h.1M668 148h.1M837 676h.1M726 91h.1M666 596h.1M582 69h.1M557 223h.1M885 10h.1M81 711h.1M891 207h.1M41 588h.1M367 112h.1M110 261h.1M346 698h.1M505 221h.1M803 60h.1M276 704h.1M908 28h.1M857 369h.1M130 296h.1M658 287h.1M861 104h.1M352 232h.1M411 671h.1M393 578h.1M418 473h.1M452 573h.1M668 301h.1M664 423h.1M880 623h.1M331 200h.1M642 341h.1M601 682h.1M248 44h.1M493 306h.1M779 548h.1M512 171h.1M403 272h.1M934 247h.1M745 530h.1M49 440h.1M254 276h.1M464 45h.1M867 384h.1M238 411h.1M950 233h.1M360 182h.1M355 193h.1M879 521h.1M547 550h.1M142 219h.1M632 161h.1M798 311h.1M493 737h.1M471 460h.1M341 393h.1M227 401h.1M222 733h.1M13 718h.1M524 299h.1M754 269h.1M41 516h.1M425 176h.1M874 213h.1M851 642h.1M497 133h.1M398 557h.1M795 626h.1M102 517h.1M572 218h.1M462 628h.1M774 405h.1M744 462h.1M186 397h.1M493 470h.1M357 364h.1M959 317h.1M618 268h.1M476 534h.1M340 135h.1M612 229h.1M120 93h.1M373 701h.1M389 460h.1M691 59h.1M491 170h.1M620 50h.1M752 577h.1M646 192h.1M532 263h.1M532 246h.1M228 70h.1M714 729h.1M640 401h.1M207 693h.1M375 489h.1M775 651h.1M484 234h.1M441 262h.1M209 219h.1M247 379h.1M165 119h.1M202 291h.1M525 125h.1M636 741h.1M910 765h.1M641 243h.1M611 173h.1M30 328h.1M129 689h.1M787 714h.1M126 689h.1M876 69h.1M316 122h.1M568 372h.1M888 339h.1M153 43h.1M740 78h.1M839 767h.1M481 711h.1M189 750h.1M457 469h.1M445 354h.1M429 737h.1M824 394h.1M182 318h.1M935 735h.1M869 409h.1M774 95h.1M662 107h.1M804 693h.1M458 146h.1M960 164h.1M102 562h.1M808 494h.1M433 131h.1M69 140h.1M238 527h.1M711 745h.1M191 194h.1M611 299h.1M431 325h.1M518 114h.1M820 395h.1M707 718h.1M586 642h.1M798 75h.1M455 42h.1M581 643h.1M130 757h.1M621 83h.1M543 321h.1M759 99h.1M943 190h.1M950 224h.1M526 90h.1M622 273h.1M725 537h.1M464 680h.1M430 239h.1M485 144h.1M37 230h.1M669 273h.1M430 722h.1M415 761h.1M918 439h.1M896 570h.1M942 587h.1M324 442h.1M383 105h.1M118 741h.1M717 80h.1M402 425h.1M559 733h.1M678 573h.1M532 688h.1M552 626h.1M853 533h.1M487 366h.1M662 171h.1M795 455h.1M110 8h.1M478 78h.1M325 397h.1M126 14h.1M719 200h.1M798 122h.1M105 2h.1M246 749h.1M646 92h.1M347 747h.1M933 544h.1M705 711h.1M75 722h.1M140 190h.1M288 191h.1M341 651h.1M311 4h.1M848 559h.1M754 225h.1M654 117h.1M356 663h.1M292 434h.1M447 324h.1M917 373h.1M191 113h.1M470 352h.1M828 398h.1M86 117h.1M212 696h.1M515 94h.1M584 623h.1M250 503h.1M761 712h.1M680 575h.1M150 72h.1M535 390h.1M261 204h.1M856 463h.1M612 215h.1M741 508h.1M67 123h.1M581 518h.1M661 243h.1M785 38h.1M600 28h.1M152 38h.1M955 604h.1M230 20h.1M445 112h.1M506 596h.1M216 142h.1M58 691h.1M736 97h.1M947 495h.1M281 211h.1M42 172h.1M793 247h.1M334 543h.1M885 29h.1M675 210h.1M227 437h.1M424 651h.1M69 614h.1M776 50h.1M14 718h.1M378 36h.1M866 274h.1M138 663h.1M185 91h.1M375 678h.1M220 377h.1M951 123h.1M37 214h.1M513 304h.1M793 79h.1M616 147h.1M762 107h.1M911 261h.1M193 699h.1M261 171h.1M205 658h.1M651 583h.1M940 637h.1M515 364h.1M342 208h.1M27 149h.1M220 191h.1M61 532h.1M425 376h.1M349 569h.1M501 745h.1M691 286h.1M926 587h.1M472 748h.1M180 693h.1M522 474h.1M332 760h.1M895 82h.1M100 753h.1M442 8h.1M712 409h.1M753 536h.1M940 352h.1M521 532h.1M303 718h.1M437 358h.1M528 750h.1M12 66h.1M583 61h.1M66 255h.1M103 657h.1M85 628h.1M144 209h.1M905 553h.1M682 166h.1M483 697h.1M806 222h.1M553 95h.1M789 685h.1M657 588h.1M404 607h.1M265 448h.1M840 290h.1M934 557h.1M241 210h.1M922 597h.1M359 89h.1M712 61h.1M385 120h.1M604 34h.1M608 64h.1M779 141h.1M443 588h.1M664 766h.1M617 627h.1M910 497h.1M944 247h.1M345 473h.1M768 428h.1M557 305h.1M442 228h.1M809 225h.1M306 118h.1M554 13h.1M298 525h.1M273 70h.1M292 10h.1M763 61h.1M875 424h.1M352 762h.1M71 224h.1M827 316h.1M617 97h.1M603 283h.1M413 141h.1M780 176h.1M387 225h.1M238 239h.1M525 47h.1M779 347h.1M251 553h.1M955 115h.1M486 688h.1M665 69h.1M31 764h.1M153 290h.1M709 155h.1M354 173h.1M367 534h.1M691 83h.1M41 508h.1M124 597h.1M493 128h.1M731 424h.1M715 251h.1M109 268h.1M286 562h.1M779 710h.1M709 78h.1M285 27h.1M354 387h.1M665 758h.1M449 354h.1M921 382h.1M841 17h.1M438 679h.1M690 354h.1M32 134h.1M480 299h.1M46 619h.1M920 171h.1M220 17h.1M585 432h.1M472 430h.1M770 478h.1M477 430h.1M359 223h.1M804 684h.1M687 577h.1M941 594h.1M738 259h.1M707 254h.1M596 726h.1M798 102h.1M649 610h.1M357 717h.1M721 395h.1M801 120h.1M301 116h.1M509 249h.1M148 642h.1M829 283h.1M20 290h.1M46 8h.1M951 561h.1M641 42h.1M186 723h.1M151 551h.1M156 630h.1M695 242h.1M675 609h.1M804 289h.1M756 28h.1M424 23h.1M219 631h.1M934 493h.1M375 738h.1M804 369h.1M251 80h.1M390 220h.1M18 25h.1M913 577h.1M667 487h.1M657 184h.1M220 506h.1M540 734h.1M553 80h.1M412 502h.1M483 465h.1M85 160h.1" stroke="#ffb070" stroke-width="1.7" stroke-opacity="0.55" stroke-linecap="round"/><path d="M354 45h.1M792 668h.1M754 676h.1M19 428h.1M106 125h.1M648 218h.1M299 276h.1M486 155h.1M87 309h.1M868 376h.1M436 233h.1M807 221h.1M896 98h.1M435 108h.1M487 487h.1M375 173h.1M597 203h.1M613 729h.1M925 737h.1M482 549h.1M580 504h.1M174 366h.1M22 2h.1M617 674h.1M620 629h.1M218 81h.1M248 218h.1M83 687h.1M190 493h.1M952 275h.1M806 274h.1M272 189h.1M226 108h.1M544 514h.1M633 612h.1M544 199h.1M556 710h.1M161 666h.1M351 498h.1M781 219h.1M262 649h.1M866 517h.1M180 643h.1M477 387h.1M910 601h.1M120 102h.1M65 673h.1M822 386h.1M654 406h.1M468 613h.1M799 272h.1M429 646h.1M201 735h.1M948 436h.1M316 143h.1M914 382h.1M562 62h.1M738 526h.1M292 131h.1M401 35h.1M606 173h.1M667 29h.1M854 565h.1M845 555h.1M382 771h.1M504 184h.1M597 287h.1M6 764h.1M773 758h.1M620 173h.1M578 418h.1M625 102h.1M144 73h.1M666 177h.1M575 646h.1M310 339h.1M540 518h.1M872 103h.1M314 3h.1M685 351h.1M835 558h.1M65 560h.1M822 656h.1M14 279h.1M699 107h.1M227 23h.1M223 340h.1M446 565h.1M657 10h.1M219 743h.1M176 535h.1M456 520h.1M324 404h.1M693 741h.1M164 134h.1M457 739h.1M167 576h.1M316 656h.1M899 494h.1M589 608h.1M351 706h.1M683 135h.1M885 434h.1M924 718h.1M591 122h.1M364 193h.1M162 106h.1M656 551h.1M937 242h.1M234 72h.1M88 698h.1M368 519h.1M792 373h.1M614 536h.1M713 377h.1M20 302h.1M582 394h.1M929 527h.1M70 482h.1M721 677h.1M699 273h.1M244 67h.1M230 434h.1M269 384h.1M165 120h.1M318 656h.1M567 449h.1M600 51h.1M866 191h.1M920 191h.1M432 759h.1M544 160h.1M950 145h.1M868 514h.1M708 33h.1M496 764h.1M732 443h.1M418 434h.1M898 564h.1M920 253h.1M186 102h.1M446 407h.1M316 192h.1M129 127h.1M833 588h.1M510 696h.1M74 441h.1M825 631h.1M713 761h.1M141 713h.1M425 762h.1M334 761h.1M648 1h.1M803 520h.1M890 411h.1M499 181h.1M79 580h.1M166 204h.1M215 509h.1M251 188h.1M909 346h.1M770 4h.1M112 163h.1M862 369h.1M146 371h.1M669 93h.1M10 8h.1M515 173h.1M888 362h.1M258 597h.1M549 395h.1M474 422h.1M72 59h.1M780 486h.1M648 318h.1M917 392h.1M148 658h.1M120 276h.1M554 568h.1M839 199h.1M751 520h.1M309 112h.1M32 423h.1M945 547h.1M509 293h.1M793 743h.1M603 537h.1M162 678h.1M437 96h.1M790 338h.1M816 108h.1M798 345h.1M53 209h.1M950 100h.1M333 335h.1M655 171h.1M863 676h.1M620 237h.1M354 129h.1M103 651h.1M537 461h.1M713 605h.1M941 684h.1M787 313h.1M276 275h.1M318 536h.1M555 483h.1M858 600h.1M575 360h.1M953 337h.1M660 202h.1M405 343h.1M554 539h.1M585 419h.1M800 425h.1M501 730h.1M549 220h.1M656 221h.1M115 194h.1M536 235h.1M861 545h.1M417 710h.1M628 729h.1M204 534h.1M469 338h.1M758 174h.1M180 42h.1M202 429h.1M942 352h.1M578 205h.1M577 305h.1M325 358h.1M771 747h.1M681 109h.1M634 567h.1M320 132h.1M652 554h.1M228 66h.1M37 173h.1M127 398h.1M161 133h.1M458 115h.1M87 4h.1M860 475h.1M205 33h.1M270 444h.1M432 658h.1M343 56h.1M907 332h.1M304 160h.1M874 133h.1M180 296h.1M508 468h.1M312 768h.1M768 100h.1M830 236h.1M753 231h.1M920 385h.1M597 721h.1M472 40h.1M417 580h.1M182 163h.1M884 361h.1M903 232h.1M884 376h.1M643 389h.1M729 324h.1M632 440h.1M586 761h.1M7 665h.1M460 502h.1M917 528h.1M282 160h.1M32 510h.1M692 101h.1M645 199h.1M203 748h.1M135 101h.1M563 734h.1M225 546h.1M644 21h.1M491 67h.1M360 666h.1M592 390h.1M891 580h.1M442 556h.1M545 661h.1M793 144h.1M550 339h.1M677 758h.1M322 617h.1M428 146h.1M472 228h.1M758 748h.1M589 745h.1M462 207h.1M79 184h.1M900 697h.1M925 362h.1M442 10h.1M490 312h.1M273 65h.1M42 457h.1M723 64h.1M505 182h.1M418 135h.1M745 658h.1M168 229h.1M808 85h.1M667 141h.1M502 587h.1M15 336h.1M840 451h.1M967 82h.1M715 563h.1M400 357h.1M510 476h.1M72 623h.1M445 615h.1M61 29h.1M509 303h.1M456 766h.1M392 459h.1M804 93h.1M80 69h.1M793 764h.1M952 254h.1M129 150h.1M443 9h.1M728 546h.1M747 213h.1M455 418h.1M646 464h.1M408 220h.1M457 179h.1M91 80h.1M644 613h.1M776 199h.1M796 152h.1M228 21h.1M555 691h.1M753 545h.1M557 608h.1M18 233h.1M834 230h.1M285 261h.1M205 259h.1M451 465h.1M837 355h.1M327 386h.1M364 591h.1M75 384h.1M402 200h.1M543 322h.1M792 426h.1M321 208h.1M276 629h.1M526 333h.1M658 349h.1M74 167h.1M335 751h.1M417 271h.1M756 236h.1M247 639h.1M884 484h.1M773 270h.1M520 252h.1M691 412h.1M518 234h.1M602 626h.1M455 474h.1M295 180h.1M806 514h.1M710 371h.1M80 220h.1M467 513h.1M369 361h.1M165 596h.1M218 235h.1M281 459h.1M679 466h.1M697 379h.1M295 327h.1M537 481h.1M846 299h.1M130 563h.1M487 729h.1M699 182h.1M731 114h.1M843 447h.1M155 29h.1M23 123h.1M329 57h.1M825 172h.1M143 135h.1M535 57h.1M523 516h.1M830 471h.1M899 458h.1M362 1h.1M781 759h.1M36 78h.1M501 326h.1M682 517h.1M416 94h.1M629 299h.1M548 316h.1M575 375h.1M879 761h.1M652 386h.1M476 583h.1M187 92h.1M717 746h.1M107 451h.1M605 351h.1M877 246h.1M218 61h.1M788 462h.1M384 694h.1M156 1h.1M859 381h.1M748 75h.1M895 719h.1M930 749h.1M280 630h.1M792 310h.1M93 588h.1M275 634h.1M547 411h.1M714 396h.1M646 642h.1M816 362h.1M956 511h.1M219 317h.1M183 693h.1M535 241h.1M886 170h.1M64 66h.1M416 480h.1M765 399h.1M595 54h.1M768 767h.1M469 614h.1M244 675h.1M443 711h.1M267 639h.1M94 185h.1M674 255h.1M345 272h.1M790 676h.1M90 327h.1M460 642h.1M380 149h.1M1 295h.1M839 465h.1M42 698h.1M853 243h.1M890 651h.1M255 766h.1M304 338h.1M956 645h.1M866 423h.1M577 347h.1M654 195h.1M480 91h.1M60 56h.1M362 240h.1M26 534h.1M799 529h.1M506 602h.1M610 368h.1M667 70h.1M203 58h.1M737 359h.1M696 119h.1M574 107h.1M782 214h.1M140 612h.1M34 714h.1M812 131h.1M369 51h.1M632 695h.1M364 659h.1M817 616h.1M628 309h.1M390 19h.1M282 127h.1M585 309h.1M103 273h.1M509 348h.1M883 324h.1M802 475h.1M603 139h.1M737 203h.1M308 111h.1M156 397h.1M965 122h.1M911 212h.1M640 21h.1M416 319h.1M726 101h.1M621 133h.1M87 607h.1M373 276h.1M531 349h.1M911 658h.1M11 184h.1M967 3h.1M704 205h.1M667 267h.1M916 461h.1M19 641h.1M322 139h.1M875 237h.1M580 413h.1M851 606h.1M395 57h.1M26 394h.1M899 750h.1M438 725h.1M119 672h.1M763 274h.1M444 479h.1M569 408h.1M568 96h.1M188 377h.1M759 254h.1M643 316h.1M774 319h.1M235 98h.1M323 26h.1M825 541h.1M315 457h.1M182 27h.1M16 198h.1M793 135h.1M128 26h.1M720 13h.1M273 407h.1M456 205h.1M719 488h.1M715 494h.1M108 669h.1M278 134h.1M456 335h.1M336 536h.1M76 705h.1M489 222h.1M826 573h.1M816 530h.1M591 391h.1M956 358h.1M760 61h.1M720 730h.1M629 498h.1M216 618h.1M279 131h.1M597 635h.1M829 233h.1M513 571h.1M680 223h.1M469 562h.1M934 453h.1M229 357h.1M397 720h.1M158 645h.1M96 749h.1M337 725h.1M848 742h.1M525 518h.1M944 0h.1M879 242h.1M762 692h.1M913 633h.1M757 222h.1M358 456h.1M724 282h.1M740 262h.1M662 85h.1M362 63h.1M180 655h.1M759 420h.1M296 21h.1M670 588h.1M423 636h.1M423 606h.1M640 368h.1M442 540h.1M400 94h.1M772 646h.1M131 484h.1M788 360h.1M747 192h.1M896 687h.1M279 10h.1M277 751h.1M959 693h.1M530 769h.1M97 112h.1M365 382h.1M829 234h.1M327 95h.1M365 214h.1M378 555h.1M831 588h.1M764 627h.1M766 150h.1M898 373h.1M584 23h.1M419 747h.1M937 211h.1M249 71h.1M333 33h.1M144 2h.1M27 415h.1M639 429h.1M50 490h.1M414 304h.1M675 757h.1M396 552h.1M525 444h.1M662 144h.1M435 540h.1M64 586h.1M224 15h.1M857 54h.1M778 680h.1M217 4h.1M250 711h.1M619 228h.1M283 541h.1M602 144h.1M124 235h.1M879 340h.1M18 544h.1M333 413h.1M275 658h.1M651 536h.1M426 507h.1M855 197h.1M513 724h.1M166 211h.1M901 645h.1M67 164h.1M773 728h.1M383 563h.1M539 710h.1M107 698h.1M731 83h.1M742 651h.1M630 641h.1M148 772h.1M379 60h.1M785 411h.1M448 132h.1M817 90h.1M681 289h.1M582 739h.1M721 260h.1M508 591h.1M86 676h.1M574 316h.1M538 339h.1M672 208h.1M771 0h.1M489 214h.1M216 241h.1M499 91h.1M729 468h.1M829 118h.1M137 413h.1M423 739h.1M687 686h.1M207 441h.1M464 189h.1M534 528h.1M135 705h.1M69 291h.1M916 580h.1M491 16h.1M42 663h.1M340 250h.1M497 394h.1M655 275h.1M108 390h.1M269 758h.1M554 267h.1M509 310h.1M353 103h.1M309 745h.1M286 214h.1M140 132h.1M386 459h.1M322 175h.1M229 18h.1M463 186h.1M858 472h.1M582 133h.1M253 91h.1M273 576h.1M362 37h.1M226 311h.1M709 769h.1M538 535h.1M76 722h.1M444 770h.1M474 334h.1M275 577h.1M418 486h.1M266 311h.1M437 243h.1M691 561h.1M187 190h.1M478 603h.1M564 582h.1M630 76h.1M650 570h.1M406 731h.1M557 225h.1M483 6h.1M621 128h.1M845 585h.1M568 630h.1M245 772h.1M751 357h.1M741 555h.1M953 105h.1M707 525h.1M635 367h.1M76 436h.1M954 554h.1M484 343h.1M585 289h.1M239 634h.1M958 492h.1M198 414h.1M722 574h.1M713 508h.1M933 522h.1M839 545h.1M604 216h.1M191 47h.1M593 319h.1M417 489h.1M47 203h.1M518 466h.1M615 363h.1M833 396h.1M557 236h.1M148 513h.1M206 111h.1M367 86h.1M691 37h.1M382 132h.1M80 654h.1M536 458h.1M869 489h.1M576 215h.1M337 258h.1M339 648h.1M951 338h.1M572 406h.1M97 597h.1M635 657h.1M861 330h.1M938 56h.1M758 236h.1M871 64h.1M418 283h.1M523 685h.1M375 26h.1M715 92h.1M394 89h.1M711 77h.1M370 331h.1M363 300h.1M211 599h.1M528 653h.1M945 150h.1M676 576h.1M549 57h.1M294 374h.1M670 424h.1M287 326h.1M685 259h.1M66 175h.1M904 49h.1M265 20h.1M942 475h.1M624 26h.1M270 200h.1M120 5h.1M726 286h.1M719 475h.1M26 158h.1M219 306h.1M685 367h.1M514 255h.1M932 423h.1M462 103h.1M357 467h.1M648 457h.1M302 415h.1M906 187h.1M124 104h.1M590 765h.1M471 505h.1M163 551h.1M727 492h.1M330 609h.1M785 250h.1M666 99h.1M178 333h.1M586 132h.1M491 39h.1M647 689h.1M69 352h.1M15 578h.1M33 53h.1M782 137h.1M346 622h.1M705 461h.1M320 171h.1M259 210h.1M126 743h.1M697 22h.1M63 716h.1M448 509h.1M276 586h.1M924 508h.1M477 643h.1M436 81h.1M416 693h.1M574 39h.1M810 146h.1M289 534h.1M52 74h.1M755 66h.1M737 173h.1M967 536h.1M468 515h.1M186 660h.1M794 200h.1M126 38h.1M444 300h.1M49 677h.1M588 660h.1M31 466h.1M370 118h.1M400 112h.1M748 522h.1M752 282h.1M405 147h.1M275 38h.1M928 635h.1M723 232h.1M136 217h.1M953 247h.1M116 126h.1M681 93h.1M215 286h.1M925 344h.1M383 175h.1M75 58h.1M406 138h.1M71 46h.1M338 178h.1M174 119h.1M573 342h.1M544 583h.1M481 155h.1M354 148h.1M922 159h.1M254 478h.1M410 611h.1M529 581h.1M622 233h.1M883 347h.1M183 157h.1M585 13h.1M871 133h.1M451 386h.1M511 143h.1M423 718h.1M0 186h.1M177 388h.1M409 239h.1M833 544h.1M902 398h.1M745 135h.1M551 124h.1M400 94h.1M138 61h.1M870 480h.1M935 333h.1M245 68h.1M771 507h.1M199 105h.1M189 373h.1M181 146h.1M304 315h.1M588 728h.1M67 116h.1M667 709h.1M507 356h.1M798 26h.1M551 87h.1M959 88h.1M463 752h.1M798 746h.1M661 664h.1M462 243h.1M850 542h.1M382 158h.1M878 417h.1M808 721h.1M69 584h.1M677 102h.1M831 343h.1M601 162h.1M422 33h.1M572 333h.1M540 174h.1M806 710h.1M312 437h.1M62 633h.1M217 104h.1M742 450h.1M168 266h.1M398 331h.1M794 700h.1M179 698h.1M576 78h.1M151 365h.1M324 138h.1M234 417h.1M897 299h.1M253 128h.1M710 635h.1M414 196h.1M205 58h.1M405 69h.1M471 734h.1M65 27h.1M524 739h.1M227 566h.1M323 249h.1M463 12h.1M4 172h.1M853 72h.1M746 247h.1M604 266h.1M888 657h.1M264 444h.1M568 230h.1M74 727h.1M568 360h.1M275 621h.1M82 665h.1M519 641h.1M104 174h.1M615 380h.1M490 656h.1M653 137h.1M900 181h.1M919 337h.1M734 223h.1M546 725h.1M154 125h.1M939 382h.1M417 241h.1M9 403h.1M32 69h.1M396 389h.1M83 93h.1M179 690h.1M480 181h.1M173 310h.1M322 369h.1M459 25h.1M849 244h.1M123 74h.1M623 589h.1M158 99h.1M131 1h.1M864 182h.1M142 354h.1M836 762h.1M604 175h.1M58 314h.1M882 498h.1M492 100h.1M243 131h.1M73 659h.1M781 744h.1M523 250h.1M60 536h.1M525 681h.1M122 167h.1M529 11h.1M203 355h.1M253 180h.1M653 394h.1M377 344h.1M518 40h.1M254 744h.1M863 676h.1M372 461h.1M856 132h.1M439 272h.1M744 463h.1M763 371h.1M516 565h.1M8 194h.1M851 173h.1M372 501h.1M97 97h.1M697 61h.1M884 527h.1M739 68h.1M495 491h.1M677 747h.1M593 48h.1M815 3h.1M150 40h.1M212 700h.1M933 272h.1M685 473h.1M596 524h.1M635 144h.1M33 197h.1M107 644h.1M465 478h.1M367 681h.1M684 636h.1M954 437h.1M821 666h.1M253 408h.1M152 586h.1M810 262h.1M246 70h.1M117 662h.1M334 377h.1M217 742h.1M508 286h.1M940 555h.1M480 403h.1M360 735h.1M386 79h.1M415 224h.1M635 686h.1M16 423h.1M700 472h.1M736 594h.1M880 520h.1M199 520h.1M156 493h.1M66 222h.1M963 307h.1M54 644h.1M74 44h.1M564 163h.1M551 664h.1M53 509h.1M143 69h.1M565 469h.1M687 705h.1M252 385h.1M615 701h.1M479 760h.1M907 641h.1M247 715h.1M298 147h.1M34 753h.1M116 557h.1M455 668h.1M226 14h.1M511 212h.1M158 205h.1M956 524h.1M827 565h.1M932 468h.1M909 615h.1M646 299h.1M383 168h.1M518 235h.1M653 84h.1M552 1h.1M730 703h.1M337 389h.1M555 20h.1M469 36h.1M620 361h.1M600 339h.1M703 271h.1M643 260h.1M826 131h.1M314 330h.1M952 559h.1M568 226h.1M535 297h.1M479 741h.1M959 562h.1M811 192h.1M205 159h.1M514 16h.1M11 69h.1M388 691h.1M468 281h.1M896 439h.1M426 739h.1M528 363h.1M598 261h.1M837 590h.1M627 596h.1M782 119h.1M949 599h.1M533 396h.1M645 265h.1M636 593h.1M687 279h.1M755 125h.1M267 689h.1M875 147h.1M837 660h.1M523 719h.1M583 251h.1M352 184h.1M571 121h.1M835 324h.1M725 30h.1M278 460h.1M172 421h.1M420 566h.1M522 181h.1M497 139h.1M898 389h.1M628 202h.1M41 54h.1M90 46h.1M438 263h.1M641 422h.1M284 143h.1M704 76h.1M290 584h.1M674 78h.1M921 81h.1M398 3h.1M707 694h.1M919 569h.1M919 294h.1M662 5h.1M23 604h.1M752 96h.1M675 758h.1M558 585h.1M47 13h.1M206 122h.1M734 535h.1M882 427h.1M374 468h.1M542 622h.1M112 726h.1M619 18h.1M318 657h.1M332 171h.1M691 475h.1M444 676h.1M521 84h.1M380 207h.1M577 720h.1M497 164h.1M813 349h.1M48 486h.1M435 294h.1M502 178h.1M173 490h.1M400 472h.1M751 204h.1M884 683h.1M366 691h.1M630 155h.1M928 384h.1M579 681h.1M37 220h.1M782 410h.1M216 670h.1M829 385h.1M200 362h.1M937 184h.1M504 185h.1M684 40h.1M644 487h.1M26 428h.1M342 380h.1M687 416h.1M722 510h.1M382 322h.1M903 215h.1M103 561h.1M612 324h.1M253 647h.1M492 258h.1M480 100h.1M953 594h.1M904 100h.1M288 154h.1M545 461h.1M177 463h.1M592 317h.1M362 299h.1M480 577h.1M390 245h.1M485 503h.1M599 48h.1M514 454h.1M911 348h.1M77 172h.1M49 49h.1M697 16h.1M744 371h.1M919 70h.1M648 441h.1M3 671h.1M510 354h.1M784 486h.1M481 644h.1M636 409h.1M879 530h.1M793 755h.1M788 275h.1M160 135h.1M491 616h.1M498 613h.1M842 763h.1M967 99h.1M563 68h.1M275 168h.1M756 115h.1M613 659h.1M181 614h.1M561 615h.1M857 540h.1M240 139h.1M842 752h.1M509 545h.1M553 549h.1M733 172h.1M217 11h.1M885 570h.1M256 345h.1M781 526h.1M496 393h.1M939 402h.1M652 132h.1M365 449h.1M794 169h.1M173 256h.1M633 72h.1M391 599h.1M226 91h.1M904 67h.1M546 270h.1M827 463h.1M131 211h.1M584 218h.1M887 371h.1M525 557h.1M550 708h.1M561 556h.1M401 555h.1M659 165h.1M491 674h.1M865 342h.1M643 5h.1M923 80h.1M794 731h.1M771 37h.1M637 243h.1M452 637h.1M682 653h.1M788 470h.1M77 598h.1M257 165h.1M663 478h.1M505 32h.1M528 620h.1M275 528h.1M466 727h.1M864 571h.1M323 655h.1M788 248h.1M64 619h.1M43 730h.1M398 150h.1M579 765h.1M476 759h.1M860 619h.1M12 601h.1M894 252h.1M926 544h.1M691 189h.1M825 448h.1M74 167h.1M872 204h.1M631 176h.1M384 307h.1M946 451h.1M757 131h.1M96 99h.1M312 355h.1M930 59h.1M917 491h.1M774 457h.1M856 316h.1M77 224h.1M101 106h.1M734 571h.1M226 658h.1M909 290h.1M622 75h.1M219 186h.1M791 417h.1M836 534h.1M233 674h.1M160 679h.1M488 425h.1M654 687h.1M133 180h.1M531 676h.1M807 758h.1M125 725h.1M830 241h.1" stroke="#fff0c8" stroke-width="1.7" stroke-opacity="0.55" stroke-linecap="round"/><path d="M68 70h.1M125 191h.1M99 265h.1M533 146h.1M435 208h.1M813 1h.1M406 199h.1M198 750h.1M154 693h.1M753 10h.1M871 387h.1M895 75h.1M927 158h.1M683 72h.1M675 331h.1M626 231h.1M774 356h.1M965 4h.1M511 405h.1M341 298h.1M149 705h.1M864 653h.1M289 743h.1M937 609h.1M490 764h.1M314 106h.1M930 145h.1M729 524h.1M718 635h.1M57 345h.1M882 614h.1M716 663h.1M328 605h.1M419 294h.1M284 155h.1M940 563h.1M803 532h.1M895 427h.1M925 217h.1M487 647h.1M112 565h.1M106 33h.1M752 767h.1M18 209h.1M813 307h.1M222 1h.1M97 259h.1M554 251h.1M151 203h.1M635 395h.1M943 739h.1M916 678h.1M908 337h.1M888 285h.1M922 460h.1M807 419h.1M710 287h.1M154 109h.1M221 168h.1M777 261h.1M620 727h.1M895 470h.1M96 562h.1M568 622h.1M847 67h.1M272 282h.1M108 753h.1M809 758h.1M433 4h.1M384 518h.1M780 57h.1M918 738h.1M859 337h.1M816 192h.1M949 586h.1M89 374h.1M146 404h.1M100 231h.1M311 98h.1M394 249h.1M450 322h.1M309 39h.1M191 498h.1M684 321h.1M382 506h.1M617 297h.1M836 403h.1M731 334h.1M87 358h.1M143 414h.1M778 35h.1M337 633h.1M696 537h.1M77 760h.1M695 572h.1M24 587h.1M76 624h.1M704 632h.1M384 717h.1M932 731h.1M673 333h.1M98 248h.1M99 199h.1M370 600h.1M587 42h.1M164 268h.1M786 632h.1M947 361h.1M10 286h.1M711 84h.1M839 708h.1M484 104h.1M597 416h.1M176 433h.1M305 521h.1M658 357h.1M605 81h.1M649 295h.1M126 72h.1M704 371h.1M589 249h.1M596 117h.1M964 755h.1M621 51h.1M10 570h.1M483 657h.1M341 258h.1M51 291h.1M752 570h.1M367 761h.1M45 747h.1M108 507h.1M540 32h.1M442 196h.1M943 63h.1M211 513h.1M118 41h.1M401 68h.1M569 2h.1M905 518h.1M303 273h.1M919 492h.1M637 435h.1M577 17h.1M213 738h.1M56 518h.1M107 627h.1M614 693h.1M956 739h.1M678 45h.1M317 44h.1M672 747h.1M502 35h.1M383 298h.1M586 176h.1M518 368h.1M881 436h.1M602 762h.1M845 309h.1M817 568h.1M710 317h.1M544 430h.1M297 299h.1M629 223h.1M744 113h.1M216 437h.1M472 445h.1M737 137h.1M731 508h.1M826 501h.1M917 428h.1M714 163h.1M898 596h.1M872 437h.1M952 173h.1M215 21h.1M35 706h.1M757 282h.1M234 241h.1M263 635h.1M302 697h.1M370 711h.1M469 527h.1M695 242h.1M802 71h.1M342 192h.1M947 210h.1M298 169h.1M907 224h.1M545 408h.1M325 16h.1M856 635h.1M326 423h.1M111 163h.1M400 740h.1M197 85h.1M600 449h.1M600 140h.1M632 93h.1M615 48h.1M390 632h.1M610 694h.1M804 663h.1M841 341h.1M621 773h.1M362 608h.1M485 632h.1M598 88h.1M451 432h.1M397 646h.1M818 446h.1M577 140h.1M962 709h.1M48 421h.1M414 304h.1M738 237h.1M63 190h.1M661 256h.1M851 301h.1M30 304h.1M377 729h.1M800 260h.1M696 35h.1M577 26h.1M14 222h.1M471 288h.1M921 205h.1M438 640h.1M860 174h.1M874 528h.1M508 697h.1M566 553h.1M89 763h.1M275 316h.1M809 481h.1M500 308h.1M862 673h.1M739 486h.1M24 692h.1M330 524h.1M451 90h.1M267 271h.1M253 677h.1M424 258h.1M558 661h.1M167 78h.1M913 517h.1M312 592h.1M54 691h.1M933 686h.1M870 246h.1M759 526h.1M672 640h.1M875 596h.1M5 197h.1M251 242h.1M109 86h.1M700 488h.1M828 406h.1M711 151h.1M634 386h.1M933 393h.1M332 29h.1M506 695h.1M386 720h.1M845 213h.1M76 59h.1M934 161h.1M240 340h.1M406 63h.1M486 443h.1M819 171h.1M105 581h.1M840 632h.1M890 177h.1M206 629h.1M134 3h.1M46 651h.1M467 53h.1M9 323h.1M906 257h.1M35 74h.1M426 226h.1M934 592h.1M814 628h.1M234 692h.1M31 113h.1M354 740h.1M842 289h.1M933 536h.1M622 399h.1M839 627h.1M352 602h.1M656 234h.1M196 551h.1M946 188h.1M899 213h.1M535 384h.1M665 426h.1M152 758h.1M398 13h.1M613 408h.1M644 38h.1M176 655h.1M624 244h.1M6 217h.1M844 357h.1M195 182h.1M639 252h.1M820 183h.1M114 661h.1M811 322h.1M707 620h.1M719 585h.1M462 213h.1M433 585h.1M479 318h.1M633 322h.1M559 463h.1M550 222h.1M493 760h.1M695 85h.1M867 240h.1M862 294h.1M357 160h.1M885 156h.1M757 222h.1M688 224h.1M180 44h.1M835 333h.1M878 496h.1M722 348h.1M581 770h.1M766 209h.1M567 586h.1M67 612h.1M622 639h.1M416 655h.1M612 612h.1M745 238h.1M897 309h.1M273 384h.1M575 61h.1M182 209h.1M437 394h.1M642 17h.1M156 96h.1M536 500h.1M945 233h.1M396 675h.1M54 737h.1M114 716h.1M813 741h.1M504 459h.1M366 325h.1M907 119h.1M920 343h.1M297 284h.1M600 65h.1M579 61h.1M104 47h.1M949 8h.1M501 672h.1M719 422h.1M557 285h.1M221 764h.1M148 100h.1M293 408h.1M538 383h.1M739 495h.1M488 108h.1M355 574h.1M923 284h.1M429 80h.1M429 222h.1M744 687h.1M934 284h.1M611 42h.1M113 600h.1M452 137h.1M177 245h.1M231 568h.1M783 419h.1M235 303h.1M415 673h.1M929 698h.1M937 12h.1M266 117h.1M800 390h.1M474 224h.1M814 171h.1M843 139h.1M450 329h.1M601 64h.1M536 179h.1M103 549h.1M636 68h.1M689 450h.1M545 387h.1M925 481h.1M501 141h.1M164 124h.1M518 734h.1M491 502h.1M953 577h.1M617 123h.1M780 392h.1M602 372h.1M439 5h.1M124 317h.1" stroke="#ffffff" stroke-width="2.9" stroke-opacity="1.0" stroke-linecap="round"/><path d="M45 664h.1M360 423h.1M855 740h.1M226 375h.1M100 490h.1M157 263h.1M144 195h.1M821 768h.1M835 538h.1M746 412h.1M344 22h.1M923 282h.1M812 106h.1M87 44h.1M863 528h.1M742 477h.1M281 399h.1M349 331h.1M436 582h.1M539 305h.1M643 293h.1M191 582h.1M854 764h.1M714 154h.1M813 707h.1M210 285h.1M391 654h.1M387 400h.1M567 513h.1M130 724h.1M43 411h.1M423 560h.1M602 60h.1M103 718h.1M913 83h.1M798 488h.1M732 158h.1M274 166h.1M671 387h.1M212 620h.1M11 736h.1M138 181h.1M856 422h.1M934 68h.1M696 187h.1M505 368h.1M37 155h.1M925 518h.1M934 767h.1M313 199h.1M140 673h.1M15 624h.1M936 173h.1M99 672h.1M530 474h.1M964 444h.1M796 474h.1M745 250h.1M928 340h.1M516 298h.1M229 27h.1M484 230h.1M819 272h.1M883 567h.1M157 153h.1M1 645h.1M826 470h.1M714 642h.1M111 224h.1M272 152h.1M314 362h.1M607 723h.1M533 285h.1M938 69h.1M698 79h.1M109 715h.1M432 648h.1M485 675h.1M791 525h.1M342 5h.1M355 188h.1M329 712h.1M628 313h.1M176 726h.1M882 117h.1M116 377h.1M941 299h.1M591 291h.1M791 95h.1M345 621h.1M17 155h.1M744 595h.1M776 662h.1M490 284h.1M10 727h.1M146 266h.1M761 71h.1M157 571h.1M699 556h.1M778 352h.1M785 650h.1M370 80h.1M797 490h.1M944 621h.1M52 422h.1M118 502h.1M244 232h.1M809 769h.1M578 537h.1M370 504h.1M368 591h.1M688 72h.1M454 724h.1M106 729h.1M79 168h.1M123 172h.1M250 42h.1M697 43h.1M693 409h.1M279 594h.1M103 629h.1M362 273h.1M329 193h.1M840 280h.1M51 730h.1M965 260h.1M156 317h.1M794 124h.1M58 623h.1M892 69h.1M84 601h.1M116 144h.1M610 412h.1M529 243h.1M873 456h.1M347 696h.1M542 319h.1M486 714h.1M683 331h.1M890 77h.1M788 366h.1M692 619h.1M413 149h.1M530 299h.1M88 357h.1M324 475h.1M804 290h.1M869 262h.1M896 627h.1M676 359h.1M214 670h.1M811 673h.1M398 720h.1M363 98h.1M132 635h.1M363 0h.1M548 252h.1M940 135h.1M196 259h.1M605 216h.1M705 153h.1M113 581h.1M925 10h.1M13 695h.1M291 421h.1M266 23h.1M132 769h.1M127 677h.1M382 347h.1M596 77h.1M603 493h.1M622 527h.1M952 34h.1M856 619h.1M670 719h.1M361 768h.1M807 741h.1M691 364h.1M202 58h.1M457 530h.1M888 569h.1M74 75h.1M1 758h.1M6 200h.1M3 180h.1M515 238h.1M952 53h.1M216 678h.1M963 463h.1M658 452h.1M906 377h.1M664 413h.1M268 406h.1M539 555h.1M330 702h.1M361 288h.1M830 32h.1M845 25h.1M814 68h.1M528 741h.1M509 131h.1M919 421h.1M130 186h.1M861 218h.1M149 95h.1M629 232h.1M499 606h.1M886 592h.1M194 263h.1M233 30h.1M763 421h.1M413 508h.1M452 96h.1M691 450h.1M476 386h.1M942 623h.1M930 756h.1M383 663h.1M946 389h.1M69 20h.1M621 346h.1M895 534h.1M564 12h.1M88 44h.1M367 197h.1M402 770h.1M121 731h.1M51 370h.1M504 112h.1M661 66h.1M224 300h.1M606 62h.1M91 229h.1M489 528h.1M866 257h.1M634 640h.1M333 148h.1M687 200h.1M791 707h.1M419 118h.1M555 709h.1M653 297h.1M505 396h.1M637 549h.1M387 686h.1M668 127h.1M221 373h.1M43 603h.1M448 620h.1M776 462h.1M697 355h.1M457 495h.1M835 216h.1M303 176h.1M772 68h.1M783 298h.1M546 674h.1M960 6h.1M963 1h.1M570 100h.1M9 410h.1M859 318h.1M850 18h.1M194 688h.1M628 46h.1M214 513h.1M186 456h.1M334 542h.1M532 398h.1M465 328h.1M758 457h.1M263 192h.1M237 595h.1M777 96h.1M402 266h.1M240 771h.1M688 717h.1M232 206h.1M310 42h.1M835 709h.1M886 457h.1M181 509h.1M957 20h.1M663 341h.1M466 9h.1M293 42h.1M598 204h.1M509 727h.1M340 568h.1M250 642h.1M861 593h.1M346 9h.1M431 22h.1M117 49h.1M965 409h.1M903 445h.1M719 131h.1M362 304h.1M945 308h.1M681 96h.1M447 327h.1M803 553h.1M264 374h.1M724 110h.1M707 701h.1M611 111h.1M572 206h.1M52 153h.1M135 173h.1M682 310h.1M191 128h.1M427 511h.1M54 182h.1M102 147h.1M843 46h.1M232 658h.1M679 332h.1M146 156h.1M825 334h.1M345 528h.1M911 138h.1M819 228h.1M456 624h.1M929 126h.1M928 683h.1M786 398h.1M95 623h.1M221 152h.1M841 417h.1M484 145h.1M629 729h.1M442 701h.1M423 335h.1M368 531h.1M802 39h.1M455 661h.1M316 351h.1M803 127h.1M249 94h.1M40 187h.1M414 108h.1M60 324h.1M343 397h.1M253 215h.1M589 744h.1M887 249h.1M748 591h.1M259 66h.1M627 724h.1M193 443h.1M784 147h.1M362 339h.1M21 311h.1M712 579h.1M125 109h.1M763 536h.1M851 249h.1M343 469h.1M753 520h.1M225 289h.1M403 35h.1M894 136h.1M653 755h.1M58 373h.1M322 252h.1M793 177h.1M493 153h.1M215 113h.1M623 679h.1M733 233h.1M740 708h.1M104 279h.1M819 260h.1M681 5h.1M903 237h.1M162 212h.1M818 630h.1M786 286h.1M147 546h.1M394 174h.1M736 488h.1M268 108h.1M59 602h.1M657 66h.1M863 16h.1M505 771h.1M310 136h.1M324 394h.1M516 711h.1M281 9h.1M555 72h.1M97 46h.1M687 246h.1M176 162h.1M771 275h.1M792 68h.1M734 602h.1M859 631h.1M768 529h.1M537 408h.1M767 53h.1M279 5h.1M468 420h.1M201 470h.1M310 171h.1M953 308h.1M253 622h.1M195 673h.1M386 501h.1M190 81h.1M499 526h.1M809 502h.1M74 754h.1M898 284h.1M102 559h.1M38 682h.1M396 495h.1M651 419h.1M88 724h.1M171 22h.1M260 444h.1M172 565h.1M787 401h.1M890 542h.1M68 435h.1M111 41h.1M724 646h.1M660 615h.1M343 364h.1M596 597h.1M488 408h.1M668 603h.1M531 83h.1M911 98h.1M687 56h.1M141 341h.1M944 460h.1M652 698h.1M710 580h.1M890 63h.1M258 271h.1M514 205h.1M757 63h.1M675 31h.1M629 3h.1M856 472h.1M660 605h.1M610 706h.1M81 262h.1M830 86h.1M405 251h.1M483 558h.1M737 679h.1M610 369h.1M30 592h.1M347 137h.1M335 266h.1M536 108h.1M626 134h.1M46 185h.1M772 527h.1M361 29h.1M759 403h.1M658 225h.1M914 407h.1M949 78h.1M150 9h.1M428 567h.1M85 108h.1M35 105h.1M245 730h.1M469 731h.1M915 58h.1M743 380h.1M281 319h.1M745 620h.1M251 574h.1M21 104h.1M368 36h.1M296 539h.1M514 241h.1M737 348h.1M808 269h.1M339 454h.1M296 217h.1M441 80h.1M403 761h.1M434 559h.1M525 572h.1M764 680h.1M717 622h.1M38 319h.1M760 445h.1M934 387h.1M853 146h.1M566 639h.1M803 717h.1M200 339h.1M549 70h.1M916 740h.1M891 411h.1M63 116h.1M596 561h.1M592 567h.1M918 190h.1M499 119h.1M503 603h.1M749 538h.1M709 276h.1M487 129h.1M355 295h.1M434 351h.1M73 606h.1M398 573h.1M284 647h.1M503 126h.1M721 555h.1M874 82h.1M873 146h.1M211 382h.1M300 145h.1M363 632h.1M569 264h.1M0 423h.1M959 324h.1M425 609h.1M629 416h.1M244 422h.1M397 66h.1M794 40h.1M635 119h.1M961 287h.1M798 53h.1M370 649h.1M194 450h.1M600 42h.1M776 99h.1M616 1h.1M183 208h.1M406 1h.1M619 232h.1M391 462h.1M651 316h.1M202 617h.1M346 531h.1M643 207h.1M715 158h.1M657 244h.1M685 640h.1M531 126h.1M692 359h.1M715 282h.1M30 169h.1M679 493h.1M606 253h.1M398 91h.1M26 480h.1M294 59h.1M722 528h.1M773 408h.1M151 628h.1M297 5h.1M481 375h.1M926 282h.1M167 591h.1M615 358h.1M636 456h.1M292 44h.1M722 520h.1M232 308h.1M282 160h.1M559 79h.1M2 361h.1M904 578h.1M917 323h.1M710 709h.1M54 198h.1M12 189h.1M914 657h.1M387 137h.1M692 304h.1M623 58h.1M290 738h.1M843 548h.1M155 729h.1M512 605h.1M928 30h.1M63 326h.1M721 538h.1M619 282h.1M604 627h.1M480 293h.1M946 56h.1M264 250h.1M232 105h.1M527 253h.1M379 143h.1M738 400h.1M355 720h.1M685 64h.1M708 394h.1M184 301h.1M250 714h.1M255 544h.1M535 598h.1M679 240h.1M770 367h.1M416 537h.1M571 260h.1M381 120h.1M486 550h.1M697 139h.1M701 435h.1M838 8h.1M717 299h.1M626 455h.1M327 86h.1M774 473h.1M670 615h.1M857 295h.1M189 311h.1M73 561h.1M436 43h.1M873 52h.1M817 396h.1M920 131h.1M84 669h.1M823 50h.1M944 747h.1M360 635h.1M393 294h.1M665 499h.1M639 577h.1M542 406h.1M430 155h.1M552 539h.1M684 220h.1M319 254h.1M494 314h.1M313 203h.1M265 147h.1M962 6h.1M102 482h.1M152 174h.1M273 358h.1M810 67h.1M108 657h.1M213 163h.1M443 553h.1M696 733h.1M756 72h.1M330 744h.1M917 767h.1M543 597h.1M704 464h.1M113 437h.1M805 97h.1M775 686h.1M799 216h.1M560 392h.1M411 342h.1M712 230h.1M249 333h.1M735 574h.1M894 700h.1M285 55h.1M300 94h.1M205 202h.1M440 468h.1M213 501h.1M919 664h.1M520 466h.1M740 270h.1M852 539h.1M906 663h.1M509 497h.1M560 622h.1M59 756h.1M879 165h.1M179 358h.1M836 510h.1M175 465h.1M475 8h.1M117 69h.1M283 582h.1M379 536h.1M478 246h.1M207 563h.1M766 12h.1M621 17h.1M622 14h.1M750 405h.1M220 284h.1M890 638h.1M738 349h.1M938 326h.1M110 76h.1M547 7h.1M568 105h.1M656 757h.1M869 628h.1M246 17h.1M600 400h.1M115 143h.1M6 589h.1M535 668h.1M281 311h.1M473 487h.1M619 725h.1M34 236h.1M629 439h.1M6 3h.1M92 379h.1M94 115h.1M32 679h.1M296 99h.1M39 134h.1M944 443h.1M678 172h.1M560 66h.1M344 266h.1M574 25h.1M730 64h.1M147 406h.1M914 464h.1M579 101h.1M583 541h.1M256 151h.1M428 68h.1M9 377h.1M875 112h.1M687 147h.1M135 525h.1M938 679h.1M272 172h.1M869 197h.1M620 552h.1M571 591h.1M316 723h.1M506 613h.1M175 434h.1M168 446h.1M207 399h.1M431 320h.1M735 251h.1M232 175h.1M633 353h.1M374 687h.1M486 513h.1M564 735h.1M93 569h.1M492 682h.1M290 47h.1M175 111h.1M244 613h.1M453 72h.1M482 48h.1M199 97h.1M221 10h.1M501 734h.1M285 386h.1M656 619h.1M606 239h.1M706 479h.1M354 230h.1M54 461h.1M525 318h.1M949 209h.1M590 278h.1M645 582h.1M742 377h.1M153 274h.1M346 151h.1M905 361h.1M33 308h.1M487 380h.1M635 652h.1M782 293h.1M870 573h.1M500 147h.1M767 589h.1M35 705h.1M373 132h.1M259 210h.1M384 307h.1M188 751h.1M669 410h.1M18 341h.1M77 518h.1M597 291h.1M462 85h.1M482 594h.1M326 454h.1M792 37h.1M347 184h.1M296 131h.1M951 673h.1M322 178h.1M139 175h.1M660 642h.1M8 155h.1M621 519h.1M836 758h.1M565 104h.1M684 678h.1M957 290h.1M491 627h.1M711 486h.1M583 690h.1M541 398h.1M473 560h.1M401 41h.1M914 595h.1M742 80h.1M557 207h.1M366 179h.1M314 45h.1M805 175h.1M896 520h.1M951 116h.1M754 303h.1M345 451h.1M43 719h.1M957 461h.1M547 354h.1M733 170h.1M123 332h.1M347 272h.1M925 205h.1M731 580h.1M620 559h.1M736 74h.1M283 407h.1M327 311h.1M966 581h.1M79 190h.1M545 219h.1M946 743h.1M443 66h.1M934 305h.1M652 62h.1M749 348h.1M462 404h.1M22 18h.1M801 276h.1M34 93h.1M528 486h.1M902 170h.1M828 164h.1M924 319h.1M23 705h.1M364 224h.1M354 262h.1M779 62h.1M376 10h.1M136 17h.1M795 504h.1M890 584h.1M563 533h.1M456 672h.1M930 166h.1M719 245h.1M385 361h.1M57 625h.1M196 113h.1M74 19h.1M290 352h.1M284 320h.1M200 695h.1M340 754h.1M124 688h.1M211 634h.1M675 501h.1M185 194h.1M333 173h.1M653 243h.1M433 235h.1M192 466h.1M272 530h.1M679 74h.1M436 695h.1M387 513h.1M494 717h.1M571 321h.1M12 78h.1M622 12h.1M656 680h.1M674 381h.1M784 2h.1M816 677h.1M496 702h.1M105 180h.1M550 258h.1M713 293h.1M179 528h.1M660 32h.1M740 766h.1M899 673h.1M757 688h.1M282 665h.1M292 702h.1M580 20h.1M633 40h.1M81 361h.1M307 31h.1M601 584h.1M6 697h.1M804 221h.1M85 13h.1M326 49h.1M607 450h.1M396 430h.1M150 204h.1M509 485h.1M640 748h.1M429 519h.1M799 773h.1M866 149h.1M691 97h.1M225 771h.1M945 111h.1M455 551h.1M294 79h.1M873 192h.1M402 479h.1M92 79h.1M607 31h.1M322 659h.1M268 601h.1M726 445h.1M909 55h.1M312 537h.1M339 674h.1M670 80h.1M767 503h.1M561 212h.1M283 380h.1M19 36h.1M846 562h.1M403 644h.1M258 341h.1M685 249h.1M232 625h.1M960 100h.1M864 243h.1M377 251h.1M853 423h.1M87 159h.1M964 65h.1M404 7h.1M150 567h.1M222 163h.1M348 160h.1M881 687h.1M847 100h.1M110 147h.1M833 410h.1M276 161h.1M523 230h.1M376 12h.1M318 199h.1M490 347h.1M793 484h.1M834 145h.1M953 37h.1M927 9h.1M862 221h.1M920 602h.1M496 387h.1M228 594h.1M800 385h.1M835 23h.1M532 704h.1M475 410h.1M674 130h.1M500 312h.1M22 109h.1M156 68h.1M375 52h.1M664 57h.1M322 487h.1M361 294h.1M620 366h.1M28 413h.1M854 66h.1M603 605h.1M60 140h.1M294 574h.1M648 613h.1M411 61h.1M365 303h.1M740 223h.1M78 7h.1M227 32h.1M832 536h.1M394 663h.1M475 584h.1M568 319h.1M937 669h.1M48 239h.1M626 138h.1M669 658h.1M505 147h.1M81 399h.1M205 255h.1M435 492h.1M297 156h.1M390 143h.1M144 40h.1M781 89h.1M251 190h.1M387 622h.1M298 418h.1M912 742h.1M673 439h.1M142 28h.1M863 63h.1M784 107h.1M717 520h.1M731 349h.1M198 723h.1M288 42h.1M329 329h.1M651 637h.1M38 209h.1M399 442h.1M320 219h.1M262 430h.1M431 441h.1M731 578h.1M159 686h.1M919 13h.1M280 445h.1M890 692h.1M815 117h.1M532 1h.1M51 329h.1M852 340h.1M653 253h.1M299 159h.1M199 352h.1M899 246h.1M410 468h.1M814 200h.1M854 363h.1M865 83h.1M33 81h.1M713 759h.1M703 274h.1M291 366h.1M190 655h.1M450 100h.1M447 618h.1M81 447h.1M514 353h.1M491 333h.1M116 50h.1M180 555h.1M587 701h.1M921 146h.1M210 16h.1M570 363h.1M604 139h.1M222 661h.1M386 35h.1M745 78h.1M700 441h.1M873 58h.1M690 116h.1M505 591h.1M731 243h.1M378 215h.1M81 216h.1M859 527h.1M601 67h.1M451 167h.1M99 567h.1M582 370h.1M545 64h.1M58 388h.1M840 108h.1M330 265h.1M296 237h.1M512 602h.1M268 329h.1M64 252h.1M466 21h.1M390 619h.1M475 676h.1M764 382h.1M780 437h.1M23 76h.1M639 334h.1M0 21h.1M652 190h.1M824 540h.1M44 102h.1M205 297h.1M865 53h.1M794 735h.1M913 259h.1M709 673h.1M764 719h.1M448 24h.1M139 389h.1M344 363h.1M298 628h.1M693 324h.1M371 711h.1M282 540h.1M947 737h.1M84 138h.1M739 130h.1M206 148h.1M464 252h.1M794 407h.1M126 128h.1M929 715h.1M906 646h.1M55 754h.1M197 649h.1M878 554h.1M362 472h.1M101 59h.1M419 642h.1M623 743h.1M434 592h.1M504 674h.1M672 717h.1M54 637h.1M6 682h.1M563 405h.1M269 83h.1M193 152h.1M41 100h.1M316 126h.1M849 456h.1M17 704h.1M504 131h.1M396 380h.1M532 726h.1M955 425h.1M876 229h.1M949 491h.1M896 203h.1M510 506h.1M717 757h.1M360 713h.1M845 595h.1M923 155h.1M392 549h.1M495 269h.1M27 55h.1M683 595h.1M390 639h.1M703 280h.1M759 395h.1M533 626h.1M940 391h.1M337 496h.1M101 112h.1M802 526h.1M246 153h.1M581 176h.1M628 300h.1M504 271h.1M631 90h.1M575 771h.1M492 132h.1M376 40h.1M948 268h.1M357 645h.1M204 6h.1M940 447h.1M663 51h.1M578 160h.1M964 441h.1M244 220h.1M800 585h.1M612 46h.1M237 557h.1M415 89h.1M769 601h.1M390 449h.1M295 670h.1M662 721h.1M465 33h.1M897 137h.1M611 522h.1M328 265h.1M503 95h.1M462 200h.1M444 714h.1M79 70h.1M348 74h.1M598 207h.1M212 453h.1M56 348h.1M398 343h.1M69 557h.1M284 148h.1M521 467h.1M156 220h.1M444 123h.1M950 305h.1M373 48h.1M910 356h.1M484 147h.1M252 146h.1M87 749h.1M581 342h.1M480 179h.1M790 183h.1M945 420h.1M30 135h.1M775 27h.1M588 400h.1M603 254h.1M198 116h.1M27 152h.1M86 539h.1M303 662h.1M182 151h.1M286 328h.1M721 762h.1M753 186h.1M27 36h.1M577 213h.1M892 319h.1M148 580h.1M247 245h.1M840 312h.1M922 629h.1M488 259h.1M554 558h.1M626 728h.1M527 286h.1M459 346h.1M392 621h.1M207 312h.1M305 341h.1M234 163h.1M36 436h.1M63 22h.1M430 198h.1M337 29h.1M656 104h.1M376 645h.1M53 643h.1M755 149h.1M921 56h.1M622 609h.1M341 651h.1M966 696h.1M516 182h.1M223 150h.1M615 401h.1M794 368h.1M657 115h.1M648 167h.1M372 306h.1M693 109h.1M700 22h.1M694 735h.1M177 478h.1M885 385h.1M211 118h.1M511 101h.1M845 161h.1M755 17h.1M795 732h.1M902 457h.1M36 222h.1M321 734h.1M903 610h.1M377 171h.1M965 164h.1M878 518h.1M45 668h.1M441 268h.1M533 667h.1M877 667h.1M392 459h.1M172 215h.1M161 399h.1M615 17h.1M945 197h.1M28 216h.1M672 360h.1M330 384h.1M440 79h.1M849 764h.1M591 504h.1M742 174h.1M859 38h.1M603 740h.1M708 595h.1M889 74h.1M449 183h.1M594 7h.1M162 534h.1M232 612h.1M574 330h.1M650 188h.1M926 532h.1M946 599h.1M397 390h.1M417 218h.1M842 164h.1M507 403h.1M453 406h.1M611 98h.1M416 699h.1M463 507h.1M73 588h.1M438 707h.1M511 170h.1M760 167h.1M950 204h.1M76 685h.1M377 738h.1M771 394h.1M871 588h.1M508 103h.1M343 69h.1M756 5h.1M294 473h.1M147 145h.1M604 278h.1M420 553h.1M965 416h.1M200 348h.1M441 336h.1M547 14h.1M884 290h.1M500 51h.1M383 460h.1M863 758h.1M670 693h.1M247 630h.1M607 79h.1M51 127h.1M169 588h.1M183 51h.1M639 273h.1M488 439h.1M21 578h.1M584 401h.1M416 250h.1M605 195h.1M334 265h.1M947 117h.1M954 36h.1M400 255h.1M937 767h.1M922 654h.1M925 343h.1M341 238h.1M263 565h.1M462 57h.1M324 84h.1M852 451h.1M467 165h.1M143 742h.1M169 457h.1M665 166h.1M618 576h.1M158 123h.1M56 618h.1M438 666h.1M195 336h.1M758 256h.1M878 592h.1M32 379h.1M920 182h.1M128 60h.1M353 259h.1M202 562h.1M206 658h.1M313 716h.1M324 401h.1M873 505h.1M99 318h.1M198 287h.1M748 530h.1M159 289h.1M457 169h.1M16 772h.1M738 75h.1M739 567h.1M483 710h.1M352 77h.1M367 36h.1M962 764h.1M639 135h.1M935 558h.1M321 559h.1M670 595h.1M387 608h.1M401 627h.1M74 83h.1M957 705h.1M843 203h.1M706 477h.1M471 765h.1M503 539h.1M914 254h.1M448 206h.1M192 770h.1M746 145h.1M236 152h.1M732 8h.1M524 243h.1M423 514h.1M742 702h.1M439 570h.1M883 358h.1M805 226h.1M864 768h.1M654 577h.1M848 657h.1M215 363h.1M94 95h.1M529 191h.1M705 32h.1M549 653h.1M190 214h.1M389 93h.1M206 401h.1M646 172h.1M347 26h.1M958 407h.1M476 679h.1M901 183h.1M871 616h.1M743 619h.1" stroke="#ffffff" stroke-width="1.7" stroke-opacity="0.55" stroke-linecap="round"/><path d="M298 631h.1M225 453h.1M59 208h.1M240 84h.1M231 702h.1M446 411h.1M880 473h.1M725 720h.1M810 36h.1M521 772h.1M128 214h.1M195 240h.1M543 619h.1M180 674h.1M651 552h.1M503 352h.1M251 745h.1M519 181h.1M850 108h.1M201 181h.1M349 311h.1M411 290h.1M184 753h.1M739 492h.1M543 462h.1M438 710h.1M369 724h.1M955 595h.1M84 24h.1M316 7h.1M347 300h.1M226 462h.1M73 644h.1M91 500h.1M433 662h.1M285 46h.1M168 375h.1M59 765h.1M862 251h.1M113 509h.1M594 293h.1M546 262h.1M489 579h.1M884 427h.1M159 95h.1M569 732h.1M238 729h.1M647 421h.1M849 151h.1M186 221h.1M721 737h.1M837 44h.1M604 314h.1M525 506h.1M656 732h.1M896 292h.1M116 207h.1M678 479h.1M837 208h.1M415 77h.1M259 350h.1M227 349h.1M124 26h.1M698 723h.1M464 643h.1M331 563h.1M391 262h.1M791 131h.1M317 470h.1M410 476h.1M45 683h.1M637 108h.1M680 452h.1M590 271h.1M742 275h.1M864 614h.1M752 276h.1M410 11h.1M400 641h.1M408 454h.1M25 389h.1M611 84h.1M311 264h.1M479 276h.1M677 44h.1M129 560h.1M43 538h.1M842 561h.1M732 447h.1M125 115h.1M468 234h.1M360 366h.1M683 300h.1M191 641h.1M601 68h.1M322 366h.1M713 736h.1M870 524h.1M572 343h.1M638 421h.1M159 284h.1M439 38h.1M395 351h.1M691 149h.1M837 251h.1M627 28h.1M867 81h.1M601 649h.1M256 377h.1M214 136h.1M114 21h.1M238 719h.1M40 508h.1M93 650h.1M713 183h.1M566 183h.1M712 666h.1M384 567h.1M902 379h.1M179 449h.1M753 210h.1M163 43h.1M314 561h.1M337 137h.1M497 149h.1M395 739h.1M495 271h.1M752 651h.1M258 602h.1M853 527h.1M102 98h.1M629 46h.1M669 691h.1M918 592h.1M954 716h.1M663 766h.1M733 212h.1M697 641h.1M966 488h.1M614 251h.1M667 566h.1M835 118h.1M126 253h.1M236 187h.1M806 481h.1M957 693h.1M957 476h.1M437 698h.1M188 390h.1M710 594h.1M735 436h.1M941 8h.1M924 631h.1M403 173h.1M545 422h.1M696 751h.1M620 609h.1M568 335h.1M876 668h.1M252 697h.1M886 220h.1M215 582h.1M251 131h.1M527 88h.1M907 339h.1M580 636h.1M747 636h.1M585 552h.1M506 88h.1M226 85h.1M614 112h.1M827 83h.1M599 591h.1M894 321h.1M220 268h.1M374 608h.1M63 455h.1M858 596h.1M608 772h.1M837 140h.1M98 684h.1M266 752h.1M853 26h.1M687 276h.1M323 712h.1M730 696h.1M749 48h.1M635 735h.1M78 54h.1M395 703h.1M751 656h.1M955 98h.1M483 342h.1M900 39h.1M644 644h.1M687 397h.1M794 383h.1M241 184h.1M737 142h.1M125 495h.1M61 535h.1M310 734h.1M715 747h.1M247 368h.1M631 328h.1M400 282h.1M727 310h.1M355 409h.1M51 448h.1M405 554h.1M49 24h.1M87 105h.1M663 211h.1M399 335h.1M71 196h.1M815 550h.1M499 723h.1M234 545h.1M145 737h.1M925 543h.1M935 769h.1M222 119h.1M752 134h.1M404 546h.1" stroke="#ff7a48" stroke-width="2.2" stroke-opacity="0.8" stroke-linecap="round"/><path d="M658 331h.1M639 703h.1M805 125h.1M331 643h.1M715 755h.1M725 319h.1M910 558h.1M117 650h.1M618 70h.1M620 703h.1M606 237h.1M473 182h.1M817 576h.1M674 570h.1M900 142h.1M13 324h.1M717 339h.1M577 526h.1M706 65h.1M760 730h.1M175 542h.1M470 438h.1M376 325h.1M904 193h.1M33 496h.1M551 503h.1M341 666h.1M367 350h.1M182 141h.1M258 77h.1M310 512h.1M693 197h.1M411 219h.1M159 229h.1M887 673h.1M107 619h.1M164 279h.1M844 599h.1M492 491h.1M561 763h.1M235 759h.1M224 157h.1M772 587h.1M939 550h.1M68 584h.1M872 585h.1M247 664h.1M55 645h.1M368 744h.1M435 647h.1M746 32h.1M486 659h.1M800 85h.1M29 601h.1M273 150h.1M914 758h.1M441 453h.1M97 234h.1M506 86h.1M55 181h.1M911 446h.1M191 92h.1M598 81h.1M290 53h.1M730 628h.1M631 37h.1M342 329h.1M958 532h.1M893 124h.1M79 256h.1M564 559h.1M215 214h.1M232 662h.1M88 285h.1M432 314h.1M428 642h.1M841 765h.1M558 147h.1M625 644h.1M806 680h.1M752 344h.1M296 76h.1M315 218h.1M893 510h.1M362 641h.1M166 726h.1M757 687h.1M175 631h.1M430 671h.1M225 544h.1M332 710h.1M891 501h.1M242 756h.1M659 420h.1M666 84h.1M721 682h.1M269 743h.1M929 6h.1M540 344h.1M92 711h.1M169 4h.1M358 99h.1M105 602h.1M480 543h.1M799 479h.1M558 493h.1M313 15h.1M747 186h.1M966 618h.1M272 272h.1M64 576h.1M232 106h.1M455 109h.1M836 96h.1M103 194h.1M778 503h.1M828 53h.1M421 323h.1M922 147h.1M290 335h.1M422 328h.1M688 735h.1M865 638h.1M406 173h.1M631 318h.1M895 502h.1M508 24h.1M301 640h.1M964 107h.1M276 51h.1M48 376h.1M944 702h.1M291 524h.1M345 445h.1M866 461h.1M497 619h.1M96 689h.1M254 410h.1M747 525h.1M584 329h.1M696 293h.1M275 641h.1M948 237h.1M315 11h.1M234 599h.1M229 566h.1M438 158h.1M843 325h.1M566 171h.1M893 156h.1M111 584h.1M768 525h.1M656 336h.1M898 409h.1M465 20h.1M643 44h.1M210 52h.1M334 66h.1M95 453h.1M364 211h.1M582 266h.1M560 507h.1M491 752h.1M39 592h.1M884 575h.1M940 148h.1M462 236h.1M150 661h.1M321 102h.1M670 384h.1M333 61h.1M965 454h.1M870 16h.1M460 693h.1M609 716h.1M869 763h.1M241 658h.1M807 575h.1M37 329h.1M643 507h.1M935 337h.1M540 515h.1M606 527h.1M747 31h.1M690 140h.1M500 757h.1M299 264h.1M474 550h.1M710 281h.1M460 69h.1M215 364h.1M233 412h.1M35 3h.1M211 520h.1M162 743h.1M891 299h.1M838 171h.1M206 672h.1M737 538h.1M767 22h.1M294 246h.1M243 244h.1M915 238h.1M957 311h.1M740 657h.1M360 64h.1M803 195h.1M542 276h.1M378 44h.1M28 73h.1M781 746h.1M820 291h.1M505 655h.1M2 401h.1M739 277h.1M924 353h.1M102 709h.1M263 267h.1M869 453h.1M509 72h.1M296 190h.1M327 213h.1M50 395h.1M924 135h.1M501 700h.1M897 306h.1M823 731h.1M728 708h.1M515 761h.1M923 36h.1M322 250h.1M118 163h.1M568 173h.1M259 667h.1M208 639h.1M275 155h.1M269 660h.1M624 384h.1M63 355h.1M380 642h.1M88 54h.1M195 718h.1M304 106h.1M911 216h.1M714 595h.1M16 150h.1M850 351h.1M632 236h.1M451 254h.1M272 727h.1M786 264h.1M679 708h.1M947 112h.1M262 341h.1M343 483h.1M661 253h.1M339 236h.1M233 2h.1M655 220h.1M301 290h.1M390 658h.1M923 261h.1M610 444h.1M625 588h.1M954 201h.1M265 380h.1M462 318h.1M839 224h.1M572 462h.1M816 317h.1M908 304h.1M286 29h.1M160 2h.1M392 179h.1M493 675h.1M924 293h.1M238 23h.1M943 544h.1M788 243h.1M132 227h.1M198 406h.1M337 30h.1M705 220h.1M560 760h.1M359 16h.1M755 161h.1M105 7h.1M102 156h.1M268 584h.1M334 536h.1M99 567h.1M881 423h.1M928 566h.1M390 211h.1M395 3h.1M396 447h.1M56 643h.1M582 223h.1M954 354h.1M113 734h.1M43 751h.1M796 489h.1M672 326h.1M738 92h.1M585 697h.1M715 452h.1M411 245h.1M782 502h.1M559 8h.1M544 406h.1M436 195h.1M858 536h.1M620 118h.1M530 453h.1M694 190h.1M256 675h.1M562 657h.1M869 95h.1M737 263h.1M598 203h.1M310 227h.1M7 716h.1M80 452h.1M654 307h.1M196 50h.1M529 315h.1M242 740h.1M823 60h.1M364 80h.1M846 29h.1M222 191h.1M102 631h.1M858 307h.1M571 604h.1M622 103h.1M721 388h.1M894 650h.1M690 733h.1M46 149h.1M271 109h.1M406 484h.1M452 376h.1M809 216h.1M351 357h.1M521 260h.1M96 722h.1M829 194h.1M338 590h.1M32 752h.1M661 96h.1M257 712h.1M573 524h.1M786 171h.1M318 498h.1M304 410h.1M691 20h.1M905 378h.1M560 147h.1M627 541h.1M808 340h.1M228 207h.1M508 240h.1M462 631h.1M847 204h.1M838 31h.1M526 33h.1M244 181h.1M673 109h.1M169 58h.1M463 499h.1M515 664h.1M286 645h.1M72 708h.1M933 527h.1M72 651h.1M455 334h.1M672 669h.1M824 343h.1M809 553h.1M528 667h.1M59 413h.1M921 97h.1M504 384h.1M206 166h.1M568 304h.1M649 742h.1M706 701h.1M203 469h.1M355 36h.1M917 4h.1M908 51h.1M69 725h.1M184 136h.1M338 198h.1M619 55h.1M895 185h.1M681 178h.1M363 340h.1M901 664h.1M354 114h.1M809 362h.1M127 639h.1M359 713h.1M375 405h.1M70 464h.1M426 373h.1M101 762h.1M770 483h.1M693 253h.1M698 600h.1M907 427h.1M225 677h.1M296 63h.1M187 677h.1M440 455h.1M496 123h.1M808 691h.1M264 548h.1M567 294h.1M860 174h.1M940 552h.1M216 151h.1M467 220h.1M101 51h.1M111 637h.1M536 520h.1M864 308h.1M683 124h.1M4 696h.1M733 349h.1M143 609h.1M750 346h.1M66 125h.1M858 402h.1M383 89h.1M123 672h.1M497 385h.1M513 559h.1M680 557h.1M231 189h.1M238 613h.1M664 71h.1M945 633h.1M754 738h.1M415 478h.1M26 287h.1M452 76h.1M424 390h.1M107 509h.1M246 187h.1M110 471h.1M319 657h.1M763 103h.1M903 283h.1M494 426h.1M431 394h.1M48 72h.1M235 159h.1M823 5h.1M73 322h.1M802 396h.1M894 203h.1M755 287h.1M914 185h.1M911 274h.1M563 569h.1M889 483h.1M550 9h.1M283 6h.1M6 147h.1M437 48h.1M844 612h.1M365 770h.1M873 117h.1M232 575h.1M369 161h.1M90 43h.1M966 438h.1M235 433h.1M67 38h.1M952 397h.1M358 98h.1M835 150h.1M826 710h.1M233 175h.1M635 750h.1M661 383h.1M347 645h.1M891 166h.1M16 110h.1M186 609h.1M804 342h.1M728 352h.1M458 193h.1M196 352h.1M522 760h.1M157 425h.1M485 206h.1M690 196h.1M396 559h.1M899 299h.1M192 132h.1M892 230h.1M735 222h.1M67 173h.1M813 494h.1M762 133h.1M792 554h.1M955 572h.1M588 38h.1M283 501h.1M507 218h.1M164 215h.1M529 735h.1M196 697h.1M653 714h.1M63 109h.1M916 727h.1M531 283h.1M523 153h.1M131 339h.1M882 357h.1M180 64h.1M518 132h.1M661 733h.1M749 542h.1M327 570h.1M577 637h.1M330 381h.1M873 364h.1M620 97h.1M935 677h.1M737 758h.1M769 688h.1M921 34h.1M98 127h.1M297 133h.1M758 339h.1M251 135h.1M386 505h.1M465 495h.1M431 76h.1M783 128h.1M609 418h.1M374 289h.1M942 11h.1M838 97h.1M484 228h.1M748 647h.1M841 574h.1M930 254h.1M340 257h.1M310 52h.1M413 401h.1M150 528h.1M878 224h.1M896 428h.1M789 211h.1M679 25h.1M13 635h.1M102 505h.1M752 431h.1M544 375h.1M857 258h.1M845 253h.1M348 143h.1M54 433h.1M891 675h.1M924 703h.1M229 201h.1M525 504h.1M289 116h.1M405 526h.1M546 16h.1M459 363h.1M884 351h.1M262 140h.1M556 376h.1M700 757h.1M582 273h.1M880 280h.1M962 688h.1M483 286h.1M95 448h.1M964 461h.1M312 417h.1M230 733h.1M483 310h.1M390 716h.1M542 128h.1M296 213h.1M219 236h.1M426 63h.1M884 662h.1M658 242h.1M102 682h.1M467 11h.1M564 322h.1M863 397h.1M151 163h.1M414 662h.1M14 569h.1M865 36h.1M942 218h.1M192 327h.1M497 211h.1M829 720h.1M607 89h.1M336 41h.1M741 490h.1M511 159h.1M242 156h.1M653 38h.1M765 701h.1M921 381h.1M571 352h.1M10 551h.1M373 655h.1M156 163h.1M574 513h.1M866 358h.1M672 246h.1M143 201h.1M687 605h.1M779 739h.1M447 449h.1M542 742h.1M626 26h.1M88 390h.1M104 94h.1M435 400h.1M212 761h.1M132 506h.1M79 154h.1M939 234h.1M218 614h.1M669 72h.1M15 194h.1M870 93h.1M511 614h.1M904 700h.1M355 177h.1M3 565h.1M793 201h.1M744 135h.1M923 514h.1M240 709h.1M42 661h.1M120 12h.1M402 697h.1M340 277h.1M808 124h.1M47 128h.1M904 405h.1M491 746h.1M116 705h.1M946 72h.1M783 682h.1M204 445h.1M475 475h.1M20 31h.1M874 695h.1M926 127h.1M511 441h.1M199 16h.1M694 417h.1M497 691h.1M213 181h.1M146 661h.1M21 654h.1M587 254h.1M477 381h.1M759 100h.1M870 418h.1M783 158h.1M385 297h.1M234 193h.1M194 377h.1M185 479h.1M116 699h.1M280 634h.1M225 128h.1M639 194h.1M108 657h.1M430 283h.1M722 281h.1M196 416h.1M931 481h.1M180 462h.1M112 299h.1M240 171h.1M917 509h.1M861 508h.1M691 710h.1M245 282h.1M949 244h.1M644 67h.1M16 301h.1M197 408h.1M729 609h.1M772 304h.1M944 353h.1M345 33h.1M442 688h.1M333 145h.1M169 769h.1M314 271h.1M903 147h.1M369 236h.1M140 307h.1M247 182h.1M654 113h.1M248 428h.1M363 689h.1M506 490h.1M553 0h.1M477 212h.1M448 106h.1M373 247h.1M796 739h.1M311 759h.1M955 195h.1M822 351h.1M841 239h.1M628 194h.1M586 431h.1M109 654h.1M663 296h.1M498 465h.1M358 346h.1M659 229h.1M76 667h.1M346 493h.1M891 447h.1M375 132h.1M595 301h.1M922 602h.1M928 508h.1M792 727h.1M790 406h.1M688 644h.1M29 173h.1M115 767h.1M473 608h.1M792 556h.1M752 214h.1M318 563h.1M437 144h.1M379 673h.1M654 173h.1M759 189h.1M11 48h.1M837 152h.1M0 604h.1M948 270h.1M878 96h.1M364 132h.1M159 188h.1M228 220h.1M238 104h.1M316 49h.1M503 179h.1M912 428h.1M95 432h.1M565 394h.1M291 730h.1M544 182h.1M299 9h.1M964 490h.1M200 23h.1M578 732h.1M564 274h.1M64 31h.1M60 344h.1M97 190h.1M179 636h.1M22 56h.1M425 274h.1M877 176h.1M562 111h.1M403 117h.1M521 180h.1M557 139h.1M547 528h.1M273 105h.1M217 184h.1M352 152h.1M822 42h.1M895 629h.1M330 517h.1M404 39h.1M686 131h.1M169 280h.1M628 323h.1" stroke="#fff0c8" stroke-width="2.2" stroke-opacity="0.8" stroke-linecap="round"/><path d="M236 444h.1M262 100h.1M477 717h.1M884 507h.1M46 437h.1M900 661h.1M896 130h.1M699 2h.1M660 70h.1M906 699h.1M202 195h.1M566 293h.1M428 758h.1M30 641h.1M842 325h.1M880 317h.1M918 112h.1M389 141h.1M965 330h.1M846 770h.1M754 486h.1M793 634h.1M400 766h.1M750 130h.1M603 394h.1M327 635h.1M667 86h.1M668 480h.1M608 741h.1M243 462h.1M487 727h.1M79 554h.1M265 676h.1M43 42h.1M753 151h.1M365 540h.1M256 550h.1M613 477h.1M877 473h.1M374 163h.1M582 752h.1M754 238h.1M909 272h.1M232 361h.1M334 502h.1M216 682h.1M517 231h.1M531 410h.1M160 618h.1M374 237h.1M32 589h.1M709 384h.1M704 241h.1M941 496h.1M69 74h.1M320 51h.1M669 128h.1M914 296h.1M264 66h.1M482 86h.1M716 165h.1M236 73h.1M414 179h.1M759 84h.1M55 383h.1M391 571h.1M910 344h.1M442 61h.1M647 727h.1M532 94h.1M649 74h.1M383 758h.1M304 361h.1M285 309h.1M296 284h.1M741 486h.1M802 543h.1M361 208h.1M832 125h.1M356 301h.1M812 157h.1M49 636h.1M850 207h.1M791 293h.1M258 294h.1M821 591h.1M886 688h.1M966 399h.1M110 110h.1M832 365h.1M502 516h.1M842 657h.1M764 709h.1M928 648h.1M285 151h.1M821 423h.1M931 257h.1M364 45h.1M483 155h.1M51 8h.1M776 2h.1M250 129h.1M139 588h.1M453 390h.1M482 584h.1M526 211h.1M706 18h.1M148 658h.1M906 675h.1M88 354h.1M893 9h.1M678 140h.1M642 121h.1M48 237h.1M886 447h.1M352 267h.1M898 772h.1M410 25h.1M420 464h.1M442 128h.1M559 186h.1M299 632h.1M22 110h.1M209 160h.1M460 452h.1M859 223h.1M251 413h.1M430 152h.1M898 41h.1M332 18h.1M499 452h.1M393 470h.1M214 384h.1M400 234h.1M274 740h.1M419 402h.1M966 665h.1M599 74h.1M148 133h.1M544 103h.1M501 734h.1M734 361h.1M272 269h.1M253 58h.1M132 281h.1M817 89h.1M660 236h.1M901 320h.1M81 545h.1M137 741h.1M542 86h.1M699 509h.1M223 695h.1M5 736h.1M907 671h.1M183 616h.1M950 195h.1M576 272h.1M707 728h.1M892 629h.1M617 222h.1M302 273h.1M915 615h.1M293 191h.1M634 619h.1M614 70h.1M69 573h.1M567 139h.1M205 6h.1M818 452h.1M137 50h.1M336 672h.1M668 82h.1M314 131h.1M517 359h.1M918 502h.1M547 450h.1M196 92h.1M165 228h.1M144 681h.1M363 333h.1M199 426h.1M718 332h.1M377 78h.1M59 113h.1M341 510h.1M128 313h.1M220 85h.1M585 562h.1M240 449h.1M122 603h.1M126 757h.1M942 275h.1M295 366h.1M860 126h.1M260 705h.1M776 521h.1M806 719h.1M235 468h.1M794 226h.1M733 624h.1M891 340h.1" stroke="#d4e2ff" stroke-width="2.9" stroke-opacity="1.0" stroke-linecap="round"/><path d="M278 758h.1M446 130h.1M18 340h.1M940 81h.1M336 14h.1M336 42h.1M72 205h.1M910 425h.1M656 143h.1M348 591h.1M688 206h.1M851 12h.1M399 337h.1M520 167h.1M555 579h.1M245 329h.1M567 491h.1M738 78h.1M53 439h.1M556 339h.1M231 111h.1M211 442h.1M785 451h.1M837 248h.1M885 98h.1M378 429h.1M961 492h.1M479 734h.1M10 767h.1M928 435h.1M249 18h.1M619 713h.1M318 72h.1M537 508h.1M713 712h.1M853 757h.1M592 205h.1M313 211h.1M908 407h.1M48 258h.1M599 226h.1M568 446h.1M231 763h.1M889 203h.1M100 752h.1M944 422h.1M849 139h.1M50 119h.1M795 667h.1M770 176h.1M453 71h.1M37 43h.1M843 342h.1M332 721h.1M642 143h.1M494 290h.1M778 177h.1M356 394h.1M534 465h.1M755 770h.1M917 396h.1M326 99h.1M319 120h.1M435 24h.1M217 34h.1M375 595h.1M532 584h.1M337 564h.1M114 115h.1M903 297h.1M946 91h.1M359 751h.1M498 197h.1M735 312h.1M770 681h.1M572 332h.1M788 3h.1M693 565h.1M425 179h.1M175 450h.1M624 624h.1M525 724h.1M791 157h.1M224 490h.1M393 58h.1M691 254h.1M280 703h.1M435 103h.1M702 30h.1M562 462h.1M702 515h.1M202 112h.1M15 149h.1M924 407h.1M721 461h.1M319 769h.1M737 52h.1M454 661h.1M777 382h.1M114 77h.1M311 415h.1M907 538h.1M369 314h.1M725 198h.1M400 51h.1M473 343h.1M804 495h.1M571 186h.1M894 123h.1M624 85h.1M831 315h.1M68 179h.1M530 713h.1M544 284h.1M205 200h.1M523 597h.1M933 530h.1M370 309h.1M880 698h.1M615 609h.1M887 557h.1M819 501h.1M307 217h.1M187 54h.1M907 260h.1M801 108h.1M485 204h.1M818 14h.1M669 299h.1M149 50h.1M668 648h.1M306 219h.1M911 543h.1M841 253h.1M147 176h.1M95 389h.1M234 696h.1M751 602h.1M558 491h.1M244 452h.1M678 39h.1M343 260h.1M874 6h.1M497 444h.1M30 5h.1M783 613h.1M388 132h.1M318 112h.1M511 555h.1M653 251h.1M193 668h.1M434 390h.1M871 297h.1M735 39h.1M835 81h.1M779 351h.1M193 376h.1M827 46h.1M520 226h.1M947 7h.1M793 437h.1M433 64h.1M540 772h.1M951 443h.1M700 53h.1M832 338h.1M900 564h.1M795 241h.1M83 752h.1M226 736h.1M213 552h.1M676 86h.1M773 273h.1M130 380h.1M963 102h.1M167 693h.1M457 224h.1M768 211h.1M698 402h.1M35 73h.1M713 94h.1M133 56h.1M924 609h.1M271 590h.1M32 191h.1M346 485h.1M479 475h.1M681 66h.1M596 527h.1M854 572h.1M876 219h.1M438 703h.1M851 116h.1M96 282h.1M34 372h.1M587 30h.1M332 273h.1M591 210h.1M93 33h.1M276 409h.1M164 727h.1M478 63h.1M627 739h.1M299 212h.1M736 193h.1M954 488h.1M307 292h.1M753 386h.1M932 480h.1M849 310h.1M193 26h.1M614 520h.1M625 568h.1M731 753h.1M257 537h.1M258 387h.1M614 12h.1M543 66h.1M863 650h.1M164 177h.1M955 479h.1M487 23h.1M786 98h.1M731 616h.1M741 268h.1M953 682h.1M479 158h.1M540 374h.1M625 398h.1M507 43h.1M780 421h.1M760 285h.1M464 337h.1M474 11h.1M511 315h.1M232 727h.1M895 278h.1M354 694h.1M881 75h.1M168 445h.1M511 253h.1M897 248h.1M556 29h.1M896 195h.1M934 499h.1M491 287h.1M291 62h.1M557 711h.1M149 335h.1M247 364h.1M685 289h.1M500 645h.1M382 336h.1M680 562h.1M60 162h.1M498 205h.1M957 627h.1M798 9h.1M474 49h.1M164 361h.1M701 324h.1M512 630h.1M445 85h.1M738 360h.1M39 548h.1M955 263h.1M26 649h.1M682 640h.1M62 219h.1M681 414h.1M783 333h.1M291 121h.1M315 431h.1M379 130h.1M326 639h.1M716 225h.1M631 541h.1M466 443h.1M496 718h.1M220 109h.1M254 575h.1M817 35h.1M85 548h.1M517 555h.1M467 487h.1M652 378h.1M588 246h.1M404 4h.1M558 3h.1M569 611h.1M456 490h.1M737 544h.1M390 297h.1M948 86h.1M789 28h.1M38 237h.1M760 45h.1M526 404h.1M659 320h.1M676 102h.1M227 313h.1M58 356h.1M71 507h.1M689 379h.1M608 56h.1M474 422h.1M933 679h.1M735 508h.1M636 384h.1M823 141h.1M612 677h.1M744 335h.1M46 220h.1M400 622h.1M764 679h.1M333 710h.1M502 255h.1M947 297h.1M553 209h.1M956 758h.1M737 635h.1M925 183h.1M652 475h.1M773 170h.1M381 643h.1M546 737h.1M719 262h.1M748 572h.1M543 489h.1M665 223h.1M356 53h.1M880 596h.1M436 427h.1M200 87h.1M962 264h.1M273 334h.1M613 714h.1M101 576h.1M868 530h.1M123 590h.1M352 625h.1M350 746h.1M598 303h.1M762 544h.1M187 536h.1M696 78h.1M308 20h.1M811 109h.1M516 701h.1M634 543h.1M737 52h.1M593 603h.1M832 761h.1M398 347h.1M59 156h.1M870 40h.1M891 167h.1M333 315h.1M955 376h.1M655 705h.1M636 289h.1M499 21h.1M619 706h.1M314 73h.1M315 134h.1M596 415h.1M513 429h.1M211 496h.1M909 350h.1M231 83h.1M876 310h.1M649 565h.1M105 23h.1M127 74h.1M115 77h.1M710 80h.1M135 37h.1M54 637h.1M307 568h.1M152 127h.1M574 494h.1M349 496h.1M48 212h.1M887 439h.1M124 15h.1M334 372h.1M440 674h.1M379 625h.1M881 491h.1M803 171h.1M896 625h.1M620 340h.1M168 181h.1M330 83h.1M473 164h.1M574 681h.1M322 280h.1M256 493h.1M663 59h.1M64 154h.1M632 162h.1M532 123h.1M71 350h.1M715 190h.1M194 112h.1M858 537h.1M523 745h.1M803 431h.1M473 678h.1M360 484h.1M805 367h.1M33 735h.1M314 511h.1M417 394h.1M550 177h.1M197 745h.1M426 732h.1M909 651h.1M455 144h.1M209 368h.1M671 190h.1M332 78h.1M522 522h.1M194 530h.1M451 369h.1M96 58h.1M424 63h.1M236 275h.1M202 555h.1M237 771h.1M377 290h.1M665 462h.1M633 545h.1M266 694h.1M390 532h.1M306 174h.1M942 518h.1M405 670h.1M66 659h.1M558 208h.1M250 43h.1M231 10h.1M314 763h.1M592 367h.1M728 285h.1M127 671h.1M531 346h.1M942 317h.1M338 580h.1M700 444h.1M309 44h.1M707 328h.1M286 60h.1M542 306h.1M125 496h.1M106 321h.1M558 477h.1M527 538h.1M911 634h.1M222 5h.1M610 185h.1M416 727h.1M477 651h.1M345 656h.1M481 108h.1M560 297h.1M37 762h.1M626 526h.1M714 202h.1M523 694h.1M425 756h.1M143 757h.1M56 187h.1M945 337h.1M335 157h.1M58 38h.1M419 375h.1M250 572h.1M307 63h.1M804 547h.1M821 161h.1M937 198h.1M631 387h.1M744 708h.1M552 83h.1M962 84h.1M900 16h.1M284 195h.1M935 294h.1M659 385h.1M665 256h.1M208 136h.1M637 15h.1M455 358h.1M658 763h.1M99 209h.1M492 346h.1M909 486h.1M188 533h.1M628 647h.1M351 689h.1M195 84h.1M678 132h.1M270 217h.1M93 622h.1M253 714h.1M160 593h.1M668 149h.1M402 63h.1M332 86h.1M306 499h.1M950 268h.1M653 210h.1M446 126h.1M407 433h.1M518 90h.1M555 428h.1M399 591h.1M346 723h.1M789 70h.1M496 338h.1M412 61h.1M760 430h.1M147 731h.1M781 349h.1M175 463h.1M940 546h.1M640 45h.1M749 268h.1M305 753h.1M325 244h.1M6 615h.1M929 663h.1M730 245h.1M101 665h.1M867 400h.1M39 523h.1M513 582h.1M848 371h.1M207 10h.1M475 456h.1M142 349h.1M876 194h.1M467 405h.1M291 622h.1M432 274h.1M931 609h.1M216 297h.1M955 442h.1M727 622h.1M285 528h.1M508 764h.1M44 725h.1M502 52h.1M573 379h.1M913 292h.1M186 112h.1M283 235h.1M3 467h.1M726 284h.1M45 331h.1M659 435h.1M144 51h.1M363 528h.1M786 373h.1M116 77h.1M307 695h.1M233 54h.1M49 473h.1M431 305h.1M338 309h.1M790 534h.1M960 740h.1M743 310h.1M671 432h.1M725 231h.1M542 119h.1M394 616h.1M929 448h.1M316 211h.1M847 289h.1M942 396h.1M279 67h.1M486 454h.1M182 58h.1M84 161h.1M502 397h.1M376 211h.1M475 116h.1M299 670h.1M367 18h.1M543 285h.1M448 209h.1M625 287h.1M138 756h.1M604 147h.1M353 167h.1M786 369h.1M644 559h.1M240 370h.1M585 518h.1M240 680h.1M808 235h.1M435 69h.1M375 286h.1M573 214h.1M60 530h.1M803 415h.1M460 316h.1M468 11h.1M708 153h.1M656 132h.1M947 722h.1M639 185h.1M396 648h.1M952 91h.1M835 677h.1M454 513h.1M413 356h.1M281 616h.1M309 341h.1M126 772h.1" stroke="#d4e2ff" stroke-width="1.7" stroke-opacity="0.55" stroke-linecap="round"/><path d="M147 378h.1M538 252h.1M268 597h.1M250 115h.1M701 694h.1M616 63h.1M219 745h.1M184 712h.1M694 9h.1M450 160h.1M479 212h.1M17 463h.1M596 657h.1M719 587h.1M908 527h.1M546 763h.1M128 7h.1M689 228h.1M82 447h.1M663 549h.1M424 531h.1M225 568h.1M569 153h.1M603 538h.1M91 453h.1M233 200h.1M769 142h.1M583 699h.1M418 231h.1M33 359h.1M490 259h.1M346 237h.1M282 667h.1M454 101h.1M97 49h.1M120 656h.1M58 611h.1M248 200h.1M431 236h.1M97 741h.1M15 714h.1M468 679h.1M809 186h.1M18 246h.1M394 416h.1M100 107h.1M570 638h.1M484 28h.1M2 760h.1M588 5h.1M851 670h.1M587 141h.1M954 309h.1M254 572h.1M477 279h.1M69 746h.1M913 719h.1M307 59h.1M93 462h.1M721 734h.1M58 154h.1M29 624h.1M681 129h.1M608 326h.1M509 424h.1M2 222h.1M431 201h.1M380 66h.1M39 728h.1M717 143h.1M548 221h.1M479 694h.1M370 61h.1M829 561h.1M605 234h.1M6 84h.1M689 764h.1M256 4h.1M47 702h.1M405 250h.1M903 689h.1M439 546h.1M752 71h.1M743 457h.1M669 103h.1M227 123h.1M670 157h.1M252 680h.1M44 629h.1M136 9h.1M691 443h.1M818 714h.1M288 341h.1M805 422h.1M528 620h.1M430 634h.1M47 123h.1M898 165h.1M429 14h.1M687 209h.1M871 146h.1M549 197h.1M520 171h.1M159 337h.1M162 442h.1M345 302h.1M348 497h.1M219 461h.1M225 63h.1M290 138h.1M185 221h.1M734 478h.1M816 489h.1M631 72h.1M376 329h.1M85 205h.1M484 300h.1M318 659h.1M592 577h.1M802 487h.1M472 153h.1M696 249h.1M488 172h.1M594 735h.1M738 111h.1M37 526h.1M795 536h.1M928 523h.1M705 406h.1M951 514h.1M51 20h.1M587 769h.1M378 396h.1M509 651h.1M60 768h.1M344 120h.1M680 136h.1M864 118h.1M248 245h.1M933 131h.1M345 419h.1M518 462h.1M269 599h.1M30 358h.1M583 422h.1M37 53h.1M843 430h.1M813 395h.1M551 138h.1M750 384h.1M18 690h.1M812 493h.1M934 100h.1M446 221h.1M800 520h.1M597 565h.1M609 322h.1M612 660h.1M768 384h.1M233 523h.1M803 53h.1M736 716h.1M641 610h.1M966 460h.1M308 28h.1M941 213h.1M1 121h.1M578 669h.1M159 8h.1M195 0h.1M743 1h.1M518 406h.1M596 373h.1M201 744h.1M23 79h.1M870 186h.1M320 740h.1M583 133h.1M149 48h.1M134 50h.1M627 230h.1M695 180h.1M110 25h.1M79 631h.1M303 89h.1M343 45h.1M651 609h.1M112 687h.1M460 505h.1M88 670h.1M464 456h.1M559 339h.1M912 95h.1M392 157h.1M479 96h.1M274 603h.1M633 255h.1M204 215h.1M540 723h.1M275 139h.1M430 560h.1M180 612h.1M803 153h.1M617 349h.1M752 533h.1M892 669h.1M587 19h.1M115 719h.1M841 496h.1M593 451h.1M786 149h.1M34 14h.1M867 259h.1M254 385h.1M464 247h.1M528 217h.1M10 84h.1M257 253h.1M545 353h.1M518 708h.1M194 7h.1M199 403h.1M227 270h.1M843 542h.1M645 70h.1M694 431h.1M420 763h.1M604 678h.1M7 141h.1M596 650h.1M429 689h.1M634 683h.1M397 372h.1M736 289h.1M635 516h.1M791 11h.1M561 349h.1M213 105h.1M116 155h.1M839 334h.1M547 538h.1M440 298h.1M13 245h.1M250 273h.1M290 767h.1M134 110h.1M582 41h.1M876 147h.1M657 705h.1M773 168h.1M701 250h.1M266 211h.1M151 623h.1M594 656h.1M128 747h.1M47 22h.1M656 551h.1M194 192h.1M866 212h.1M716 230h.1M72 105h.1M925 608h.1M183 699h.1M840 192h.1M176 320h.1M385 314h.1M616 183h.1M838 310h.1M419 282h.1M9 23h.1M230 19h.1M501 675h.1M232 688h.1M198 361h.1M462 351h.1M870 536h.1M440 479h.1M346 735h.1M70 80h.1M216 644h.1M925 661h.1M17 617h.1M463 294h.1M125 766h.1M912 538h.1M796 355h.1M706 86h.1M393 597h.1M340 757h.1M550 527h.1M145 80h.1M850 562h.1M764 355h.1M426 268h.1M617 621h.1M453 470h.1M384 224h.1M247 300h.1M481 273h.1M64 229h.1M649 463h.1M8 175h.1M888 227h.1M937 38h.1M840 72h.1M386 156h.1M790 311h.1M905 331h.1M605 393h.1M722 363h.1M492 509h.1M132 432h.1M407 112h.1M462 128h.1M123 244h.1M865 373h.1M191 2h.1M941 594h.1M225 684h.1M420 511h.1M909 63h.1M660 384h.1M224 197h.1M159 93h.1M46 139h.1M406 709h.1M728 325h.1M82 113h.1M500 183h.1M866 244h.1M221 374h.1M407 522h.1M488 597h.1M270 49h.1M497 107h.1M120 70h.1M381 424h.1M944 120h.1M544 689h.1M625 102h.1M589 430h.1M850 627h.1M597 92h.1M127 657h.1M416 75h.1M315 169h.1M35 379h.1M112 87h.1M68 521h.1M526 518h.1M799 119h.1M124 197h.1M142 694h.1M495 711h.1M86 267h.1M191 14h.1M321 274h.1M306 639h.1M619 358h.1M843 379h.1M808 190h.1M594 569h.1M167 153h.1M635 378h.1M190 76h.1M628 756h.1M407 607h.1M678 489h.1M587 660h.1M121 763h.1M487 306h.1M932 533h.1M634 138h.1M450 563h.1M624 723h.1M639 536h.1M414 740h.1M168 185h.1M925 119h.1M699 215h.1M384 477h.1M893 307h.1M910 21h.1M275 4h.1M277 395h.1M599 291h.1M427 367h.1M296 451h.1M331 618h.1M928 205h.1M598 598h.1M305 441h.1M764 383h.1M689 490h.1M95 12h.1M161 44h.1M748 339h.1M271 508h.1M492 626h.1M889 158h.1M223 407h.1M5 152h.1M912 192h.1M597 399h.1M93 62h.1M423 288h.1M158 744h.1M173 724h.1M554 502h.1M331 133h.1M419 394h.1M54 726h.1M332 335h.1" stroke="#d4e2ff" stroke-width="2.2" stroke-opacity="0.8" stroke-linecap="round"/><path d="M554 677h.1M407 709h.1M882 343h.1M473 3h.1M676 87h.1M660 153h.1M37 648h.1M718 131h.1M762 648h.1M138 171h.1M407 121h.1M206 674h.1M261 597h.1M360 449h.1M87 629h.1M27 104h.1M351 8h.1M48 537h.1M366 551h.1M716 310h.1M791 79h.1M15 729h.1M7 58h.1M466 139h.1M507 524h.1M765 179h.1M668 4h.1M5 617h.1M603 505h.1M467 261h.1M924 286h.1M23 77h.1M257 309h.1M295 380h.1M230 295h.1M354 83h.1M114 656h.1M925 64h.1M292 564h.1M721 501h.1M890 592h.1M932 30h.1M193 664h.1M793 689h.1M113 247h.1M132 215h.1M634 68h.1M166 343h.1M323 28h.1M343 554h.1M841 601h.1M440 305h.1M729 524h.1M291 581h.1M329 99h.1M588 307h.1M498 456h.1M842 556h.1M391 688h.1M751 115h.1M393 383h.1M363 24h.1M880 582h.1M682 633h.1M827 430h.1M610 497h.1M402 118h.1M551 479h.1M301 189h.1M55 115h.1M539 20h.1M456 522h.1M717 515h.1M638 461h.1M285 129h.1M158 736h.1M855 540h.1M249 691h.1M558 206h.1M143 717h.1M366 213h.1M531 90h.1M372 634h.1M963 648h.1M492 658h.1M879 398h.1M571 14h.1M168 382h.1M578 396h.1M173 55h.1M434 460h.1M765 453h.1M866 473h.1M381 235h.1M760 448h.1M642 183h.1M930 152h.1M932 550h.1M939 687h.1M592 251h.1M318 581h.1M294 169h.1M330 137h.1M766 613h.1M743 746h.1M462 521h.1M246 576h.1M180 303h.1M554 237h.1M742 417h.1M619 86h.1M759 684h.1M348 502h.1M335 443h.1M689 701h.1M939 159h.1M185 39h.1M667 603h.1M97 692h.1M661 181h.1M93 386h.1M315 314h.1M734 244h.1M497 381h.1M408 683h.1M54 336h.1M365 460h.1M485 492h.1M496 472h.1M454 404h.1M431 600h.1M186 47h.1M518 15h.1M784 248h.1M287 297h.1M140 108h.1M325 363h.1M327 186h.1M521 257h.1M879 447h.1M268 718h.1M49 402h.1M639 432h.1M547 83h.1M540 536h.1M931 738h.1M831 292h.1M334 403h.1M67 215h.1M282 149h.1M112 594h.1M511 588h.1M459 118h.1M396 370h.1M347 363h.1M769 494h.1M376 37h.1M569 252h.1M91 742h.1M591 226h.1M62 174h.1M781 48h.1M945 624h.1M674 602h.1M742 97h.1M284 537h.1M837 107h.1M149 198h.1M499 419h.1M114 677h.1M722 118h.1M313 4h.1M611 385h.1M859 392h.1M635 593h.1M504 751h.1M376 598h.1M250 662h.1M280 407h.1M191 124h.1M963 106h.1M211 381h.1M485 100h.1M446 476h.1M105 669h.1M681 683h.1M511 304h.1M123 635h.1M600 60h.1M915 560h.1M168 373h.1M194 556h.1M287 757h.1M916 143h.1M641 607h.1M419 324h.1M545 155h.1M511 45h.1M422 40h.1M440 555h.1M101 638h.1M948 173h.1M36 154h.1M428 383h.1M460 642h.1M580 27h.1M413 46h.1M548 466h.1M852 611h.1M221 224h.1M509 630h.1M754 141h.1M566 314h.1M700 429h.1M447 95h.1M356 714h.1M739 243h.1M493 662h.1M644 342h.1M264 293h.1M597 149h.1M174 189h.1M637 10h.1M732 348h.1M801 65h.1M74 342h.1M388 115h.1M531 525h.1M268 97h.1M468 680h.1M63 437h.1M497 673h.1M755 655h.1M863 311h.1M214 94h.1M401 454h.1M432 757h.1M495 722h.1M719 132h.1M471 554h.1M843 526h.1M412 244h.1M690 616h.1M216 473h.1M914 353h.1M638 339h.1M790 109h.1M448 669h.1M829 440h.1M834 735h.1M814 52h.1M673 690h.1M84 375h.1M113 577h.1M569 719h.1M432 314h.1M21 16h.1M763 136h.1M877 239h.1M690 622h.1M635 562h.1M777 104h.1M210 754h.1M867 28h.1M830 765h.1M208 532h.1M570 738h.1M490 343h.1M532 705h.1M488 581h.1M283 148h.1M288 136h.1M291 411h.1M792 85h.1M370 211h.1M453 362h.1M54 494h.1M507 179h.1M843 661h.1M69 179h.1M148 20h.1M520 597h.1M486 58h.1M408 474h.1M11 93h.1M225 629h.1M58 596h.1M370 58h.1M240 51h.1M443 480h.1M159 17h.1M590 196h.1M31 14h.1M615 628h.1M681 702h.1M825 64h.1M218 201h.1M360 15h.1M73 117h.1M377 709h.1M193 259h.1M872 421h.1M70 404h.1M37 93h.1M702 546h.1M902 689h.1M752 275h.1M84 342h.1M887 120h.1M40 98h.1M362 126h.1M475 688h.1M537 703h.1M720 141h.1M642 561h.1M431 333h.1M961 756h.1M492 65h.1M480 124h.1M71 345h.1M805 594h.1M773 650h.1M166 120h.1M329 434h.1M838 353h.1M547 656h.1M549 167h.1M896 724h.1M523 195h.1M791 182h.1M949 12h.1M870 655h.1M837 26h.1M45 502h.1M604 109h.1M266 540h.1M950 64h.1M269 636h.1M892 271h.1M233 630h.1M53 411h.1M867 119h.1M442 108h.1M632 6h.1M360 201h.1M757 335h.1M170 413h.1M15 149h.1M567 530h.1M199 693h.1M113 566h.1M873 433h.1M870 406h.1M675 50h.1M290 701h.1M349 552h.1M427 161h.1M458 10h.1M60 429h.1M758 168h.1M3 725h.1M939 563h.1M597 109h.1M85 358h.1M659 539h.1M429 684h.1M552 711h.1M725 63h.1M703 305h.1M913 201h.1M517 369h.1M142 157h.1M943 162h.1M499 61h.1M249 326h.1M164 184h.1M869 149h.1M299 130h.1M898 292h.1M297 108h.1M227 696h.1M398 440h.1M748 33h.1M920 389h.1M421 104h.1M71 127h.1M4 39h.1M347 478h.1M12 498h.1M383 284h.1M407 393h.1M629 468h.1M797 107h.1M648 373h.1M51 677h.1M603 360h.1M836 185h.1M903 209h.1M565 497h.1M304 50h.1M589 708h.1M735 152h.1M357 642h.1M263 175h.1M769 258h.1M372 641h.1M816 407h.1M135 647h.1M16 240h.1M54 538h.1M271 423h.1M148 58h.1M319 90h.1M146 121h.1M916 325h.1M426 751h.1M503 247h.1M905 150h.1M527 504h.1M299 512h.1M616 356h.1M774 26h.1M661 663h.1M314 270h.1M630 507h.1M48 204h.1M111 737h.1M75 761h.1M255 686h.1M919 197h.1M742 637h.1M714 161h.1M114 276h.1M728 616h.1M626 739h.1M432 239h.1" stroke="#ffb070" stroke-width="2.2" stroke-opacity="0.8" stroke-linecap="round"/><path d="M561 353h.1M251 324h.1M792 334h.1M445 741h.1M183 752h.1M6 697h.1M914 577h.1M584 313h.1M522 667h.1M59 753h.1M581 239h.1M395 558h.1M15 704h.1M672 304h.1M737 34h.1M134 21h.1M840 52h.1M841 207h.1M776 458h.1M641 127h.1M393 67h.1M510 0h.1M718 264h.1M266 52h.1M720 19h.1M693 24h.1M185 579h.1M497 117h.1M454 766h.1M541 111h.1M704 274h.1M173 643h.1M740 172h.1M360 666h.1M801 403h.1M81 191h.1M465 296h.1M666 294h.1M498 209h.1M416 694h.1M114 197h.1M338 462h.1M400 575h.1M113 688h.1M168 761h.1M878 505h.1M118 673h.1M480 87h.1M703 347h.1M494 135h.1M23 648h.1M508 499h.1M955 302h.1M555 642h.1M634 384h.1M448 126h.1M527 317h.1M171 419h.1M397 89h.1M836 283h.1M30 715h.1M422 73h.1M262 191h.1M85 172h.1M927 744h.1M511 14h.1M266 478h.1M866 112h.1M835 57h.1M687 697h.1M262 268h.1M662 750h.1M675 642h.1M19 540h.1M597 498h.1M646 231h.1M8 565h.1M148 255h.1M371 403h.1M523 151h.1M674 633h.1M674 684h.1M776 24h.1M172 318h.1M686 164h.1M431 145h.1M4 745h.1M733 168h.1M359 394h.1M414 505h.1M146 44h.1M617 81h.1M458 712h.1M849 508h.1M537 676h.1M547 692h.1M714 8h.1M389 232h.1M743 244h.1M597 750h.1M784 525h.1M944 93h.1M523 140h.1M868 223h.1M336 656h.1M247 75h.1M809 77h.1M544 219h.1M518 678h.1M132 539h.1M799 455h.1M365 230h.1M306 210h.1M303 284h.1M349 68h.1M502 97h.1M672 68h.1M563 42h.1M552 246h.1M365 721h.1M326 457h.1M871 110h.1M183 607h.1M16 17h.1M886 619h.1M534 741h.1M888 18h.1M769 395h.1M259 550h.1M8 239h.1M281 440h.1M898 593h.1M741 37h.1M515 422h.1M151 692h.1M585 88h.1M915 751h.1M898 376h.1M178 25h.1M284 30h.1M520 503h.1M261 252h.1M133 104h.1M84 65h.1M461 384h.1M716 367h.1M595 302h.1M342 382h.1M180 492h.1M463 625h.1M782 90h.1M511 662h.1M76 577h.1M180 647h.1M452 388h.1M268 439h.1M18 398h.1M288 174h.1M721 190h.1M5 524h.1M159 176h.1M310 205h.1M397 551h.1M754 699h.1M959 622h.1M166 171h.1M532 627h.1M445 546h.1M294 367h.1M879 3h.1M688 261h.1M846 196h.1M2 175h.1M617 28h.1M47 552h.1M78 758h.1M284 504h.1M733 766h.1M65 575h.1M711 9h.1M312 692h.1M483 35h.1M540 653h.1M371 334h.1M502 535h.1M457 245h.1M376 677h.1M21 314h.1M410 613h.1M428 3h.1M352 693h.1M570 664h.1M390 700h.1M813 736h.1M921 101h.1M676 14h.1M785 372h.1M820 702h.1M424 105h.1M710 510h.1M896 47h.1M758 4h.1M565 269h.1M15 694h.1M149 81h.1M204 191h.1M606 718h.1M764 63h.1M440 760h.1M762 33h.1M323 459h.1M366 509h.1M722 345h.1M698 694h.1M83 290h.1M723 385h.1M596 218h.1M193 209h.1M563 593h.1M496 295h.1M429 590h.1M719 699h.1M364 175h.1M944 689h.1M878 396h.1M832 560h.1M147 728h.1M597 227h.1M879 53h.1M930 743h.1M604 307h.1M797 409h.1M126 70h.1M617 555h.1M515 713h.1M259 174h.1M484 722h.1M284 7h.1M748 735h.1M374 145h.1M772 339h.1M321 57h.1M417 15h.1M831 146h.1M921 310h.1M457 312h.1M771 732h.1M692 197h.1M586 37h.1M937 392h.1M687 205h.1M780 466h.1M724 441h.1M100 580h.1M640 237h.1M455 533h.1M505 285h.1M193 283h.1M157 729h.1M567 305h.1M954 240h.1M788 244h.1M20 411h.1M474 78h.1M824 232h.1M788 755h.1M861 423h.1M23 735h.1M222 112h.1M804 364h.1M627 202h.1M206 359h.1M234 704h.1M622 389h.1M418 512h.1M911 299h.1M63 601h.1M819 481h.1M166 551h.1M38 410h.1M613 15h.1M42 71h.1M734 395h.1M650 139h.1M576 388h.1M99 108h.1M883 109h.1M941 589h.1M800 268h.1M457 291h.1M280 639h.1M705 622h.1M529 187h.1M403 206h.1M25 530h.1M217 657h.1M38 73h.1M233 135h.1M949 333h.1M770 718h.1M514 750h.1M655 414h.1M535 244h.1M683 85h.1M547 369h.1M19 79h.1M913 124h.1M477 408h.1M840 422h.1M347 234h.1M214 337h.1M572 179h.1M872 449h.1M866 459h.1M571 665h.1M522 326h.1M497 336h.1M759 219h.1M248 120h.1M128 720h.1M550 383h.1M576 16h.1M79 31h.1M117 398h.1M952 642h.1M799 549h.1M918 40h.1M846 411h.1M880 625h.1M353 617h.1M919 344h.1M540 616h.1M717 636h.1M553 286h.1M147 466h.1M25 189h.1M967 452h.1M121 38h.1M686 417h.1M186 215h.1M325 597h.1M445 660h.1M158 16h.1M658 144h.1M168 316h.1M70 324h.1M891 408h.1M78 202h.1M801 292h.1M701 562h.1M873 181h.1M330 250h.1M73 404h.1M37 641h.1M797 66h.1M833 58h.1M804 3h.1M237 773h.1M947 442h.1M242 212h.1M543 340h.1M342 283h.1M53 648h.1M677 475h.1M292 421h.1" stroke="#fff0c8" stroke-width="2.9" stroke-opacity="1.0" stroke-linecap="round"/><path d="M642 47h.1M181 173h.1M491 179h.1M838 347h.1M488 113h.1M925 708h.1M47 634h.1M165 1h.1M953 43h.1M933 376h.1M200 78h.1M687 48h.1M206 173h.1M303 485h.1M4 178h.1M416 120h.1M31 744h.1M736 477h.1M462 490h.1M777 135h.1M255 433h.1M18 334h.1M260 115h.1M473 330h.1M376 103h.1M719 700h.1M21 127h.1M748 409h.1M795 247h.1M768 249h.1M413 342h.1M813 578h.1M886 135h.1M445 682h.1M921 438h.1M549 432h.1M234 184h.1M938 187h.1M552 268h.1M640 230h.1M868 280h.1M376 58h.1M838 501h.1M716 440h.1M956 206h.1M614 344h.1M432 674h.1M310 738h.1M481 656h.1M64 699h.1M404 704h.1M836 534h.1M466 735h.1M895 680h.1M105 552h.1M479 27h.1M381 748h.1M170 687h.1M958 732h.1M590 637h.1M736 294h.1M551 410h.1M830 252h.1M891 420h.1M790 468h.1M518 447h.1M279 364h.1M207 525h.1M631 188h.1M891 79h.1M685 359h.1M888 368h.1M76 544h.1M957 444h.1M359 553h.1M428 70h.1M723 716h.1M854 185h.1M519 371h.1M633 97h.1M854 429h.1M662 361h.1M527 348h.1M523 262h.1M149 419h.1M826 163h.1M393 180h.1M952 176h.1M765 375h.1M712 485h.1M930 512h.1M112 695h.1M511 474h.1M796 262h.1M8 89h.1M576 165h.1M694 51h.1M551 39h.1M238 229h.1M357 47h.1M925 16h.1M753 726h.1M936 759h.1M226 516h.1M651 206h.1M72 28h.1M807 301h.1M781 245h.1M521 323h.1M323 202h.1M683 210h.1M798 431h.1M154 721h.1M559 770h.1M764 99h.1M451 687h.1M406 505h.1M472 291h.1M394 632h.1M946 208h.1M611 137h.1M678 384h.1M384 610h.1M491 563h.1M945 533h.1M214 458h.1M488 450h.1M189 589h.1M867 515h.1M747 566h.1M612 113h.1M305 223h.1M618 581h.1M893 281h.1M219 204h.1M260 359h.1M536 728h.1M820 288h.1M102 691h.1M769 14h.1M948 77h.1M115 15h.1M516 537h.1M227 371h.1M694 470h.1M112 730h.1M851 276h.1M414 626h.1M855 321h.1M330 470h.1M136 76h.1M727 543h.1M67 423h.1M287 4h.1M24 425h.1M207 198h.1M641 677h.1M253 533h.1M683 22h.1M700 71h.1M267 82h.1M755 449h.1M658 306h.1M899 247h.1M31 68h.1M896 297h.1M689 605h.1M944 164h.1M666 48h.1M615 445h.1M723 482h.1M26 2h.1M718 418h.1M755 609h.1M223 170h.1M151 731h.1M769 454h.1M429 382h.1M508 224h.1M496 191h.1M787 534h.1M805 117h.1M203 563h.1M464 458h.1M837 214h.1M156 154h.1M538 199h.1M243 137h.1M616 382h.1M314 173h.1M313 204h.1M800 89h.1M77 23h.1M132 641h.1M119 727h.1M344 530h.1M401 95h.1M563 171h.1M353 600h.1M701 227h.1M787 345h.1M328 32h.1M145 105h.1M648 648h.1M487 472h.1M553 45h.1M38 573h.1M268 179h.1M421 489h.1M269 304h.1M7 316h.1M857 332h.1M920 171h.1M311 383h.1M789 752h.1M234 106h.1M576 397h.1M271 521h.1M76 673h.1M858 291h.1M346 46h.1M736 649h.1M928 253h.1M688 764h.1M455 627h.1M737 597h.1M574 150h.1M270 735h.1M877 465h.1M313 568h.1M708 411h.1M796 10h.1M896 237h.1M531 493h.1M865 570h.1M195 706h.1M949 538h.1M710 551h.1M316 755h.1M726 263h.1M107 128h.1M358 143h.1M95 670h.1M512 8h.1M611 194h.1M815 422h.1M237 314h.1M697 437h.1M568 597h.1M205 196h.1M818 499h.1M661 405h.1M735 264h.1M473 280h.1M332 213h.1" stroke="#ffd0a0" stroke-width="2.2" stroke-opacity="0.8" stroke-linecap="round"/><path d="M795 220h.1M813 371h.1M896 207h.1M295 587h.1M518 510h.1M246 575h.1M793 393h.1M318 143h.1M317 247h.1M964 281h.1M600 637h.1M657 692h.1M47 687h.1M932 389h.1M4 379h.1M620 351h.1M406 605h.1M474 753h.1M203 529h.1M789 362h.1M758 109h.1M929 58h.1M460 319h.1M147 12h.1M335 66h.1M445 68h.1M655 231h.1M478 397h.1M790 23h.1M513 54h.1M497 207h.1M214 396h.1M275 763h.1M180 751h.1M340 319h.1M765 162h.1M528 749h.1M323 630h.1M817 304h.1M318 167h.1M351 765h.1M663 114h.1M655 249h.1M849 45h.1M576 357h.1M726 689h.1M887 409h.1M320 439h.1M566 309h.1M448 33h.1M456 110h.1M486 479h.1M240 199h.1M938 531h.1M170 372h.1M374 374h.1M468 322h.1M724 183h.1M914 364h.1M713 46h.1M892 64h.1M627 75h.1M115 579h.1M884 623h.1M10 428h.1M820 501h.1M616 120h.1M873 340h.1M736 257h.1M191 134h.1M528 477h.1M708 509h.1M888 365h.1M615 373h.1M183 78h.1M37 593h.1M668 119h.1M446 287h.1M885 234h.1M894 84h.1M566 231h.1M964 344h.1M400 657h.1M561 94h.1M691 606h.1M372 226h.1M398 152h.1M319 104h.1M895 686h.1M307 529h.1M444 112h.1M753 118h.1M600 419h.1M836 700h.1M226 295h.1M825 582h.1M26 73h.1M500 88h.1M907 192h.1M43 96h.1M330 111h.1M597 677h.1M445 213h.1M872 750h.1M133 684h.1M813 293h.1M32 568h.1M363 367h.1M34 589h.1M85 655h.1M673 314h.1M71 394h.1M294 51h.1M923 171h.1M96 559h.1M270 164h.1M619 703h.1M839 60h.1M118 188h.1M753 684h.1M536 404h.1M730 302h.1M261 221h.1M340 657h.1M700 103h.1M440 359h.1M633 18h.1M51 63h.1M549 34h.1M790 336h.1M671 637h.1M46 249h.1M632 8h.1M916 339h.1M681 51h.1M236 238h.1M629 422h.1M588 323h.1M605 684h.1M356 2h.1M356 420h.1M418 198h.1M455 674h.1M105 531h.1M812 255h.1M931 335h.1M401 110h.1M934 284h.1M128 696h.1M563 258h.1M126 156h.1M739 163h.1M616 22h.1M753 648h.1M517 220h.1M445 27h.1M614 37h.1M173 61h.1M937 502h.1M585 682h.1M580 170h.1M305 690h.1M195 383h.1M771 186h.1M744 118h.1M826 184h.1M485 392h.1M304 262h.1M277 112h.1M562 768h.1M940 156h.1M100 292h.1M957 683h.1M510 564h.1M869 232h.1M438 546h.1M416 395h.1M171 285h.1M308 620h.1M599 665h.1M339 246h.1M784 638h.1M948 398h.1M562 147h.1M228 3h.1M83 118h.1M199 147h.1M455 674h.1M73 600h.1M111 345h.1M719 43h.1M964 203h.1M1 722h.1M126 233h.1M23 427h.1M310 247h.1M238 277h.1M855 406h.1M583 206h.1M815 176h.1M550 248h.1M382 3h.1M386 660h.1M569 17h.1M237 583h.1M663 270h.1M278 90h.1M325 600h.1M913 356h.1M154 268h.1M49 340h.1M792 685h.1M627 227h.1M822 152h.1M368 718h.1M382 229h.1M258 312h.1M839 763h.1M569 277h.1M948 450h.1M779 477h.1M468 127h.1M400 285h.1M779 702h.1M275 419h.1M499 290h.1M134 603h.1M901 289h.1M693 414h.1M69 34h.1M373 564h.1M341 543h.1M20 79h.1M925 748h.1M799 23h.1M907 201h.1M353 366h.1M411 675h.1M700 723h.1M383 679h.1M442 531h.1M612 182h.1M477 529h.1M835 196h.1M428 592h.1M444 132h.1M672 419h.1M203 88h.1M194 366h.1M744 364h.1M928 436h.1M320 752h.1M890 396h.1M892 449h.1M132 313h.1M49 565h.1M474 609h.1M616 703h.1M43 728h.1M459 708h.1M543 497h.1M260 725h.1M667 609h.1M846 197h.1M75 704h.1M407 678h.1M764 156h.1M273 118h.1M832 629h.1M955 133h.1M661 178h.1M246 161h.1M578 71h.1M592 486h.1M926 148h.1M450 168h.1M270 751h.1M820 385h.1M174 77h.1M184 319h.1M848 181h.1M875 429h.1M454 461h.1M768 550h.1M500 95h.1M269 397h.1M556 683h.1M705 219h.1M962 334h.1M921 481h.1M209 412h.1M940 100h.1M741 765h.1M488 338h.1M44 710h.1M70 394h.1M886 259h.1M840 298h.1M340 730h.1M960 452h.1M177 148h.1M458 414h.1M445 619h.1M298 350h.1M625 540h.1M400 669h.1M683 263h.1M194 560h.1M588 371h.1M573 523h.1M590 366h.1M274 618h.1M190 92h.1M218 168h.1M600 612h.1M687 746h.1M805 651h.1M140 618h.1M26 559h.1M217 597h.1M716 275h.1M487 392h.1M567 228h.1M165 60h.1M718 235h.1M522 271h.1M661 4h.1M442 351h.1M598 45h.1M965 418h.1M418 307h.1M52 84h.1M858 565h.1M65 381h.1M735 132h.1M170 663h.1M951 202h.1M164 24h.1M896 140h.1M303 614h.1M588 117h.1M742 10h.1M663 543h.1M921 375h.1M290 191h.1M659 198h.1M214 652h.1M108 107h.1M687 707h.1M25 348h.1M919 596h.1M384 737h.1M238 477h.1M86 184h.1M358 137h.1M598 88h.1M745 737h.1M117 184h.1M370 460h.1M292 342h.1M733 251h.1M801 158h.1M387 524h.1M2 8h.1M316 129h.1M407 584h.1M220 3h.1M524 527h.1M671 665h.1M292 132h.1M76 510h.1M755 613h.1M850 330h.1M458 78h.1M785 197h.1M956 566h.1M809 226h.1M556 144h.1M321 8h.1M808 574h.1M83 577h.1M549 140h.1M178 717h.1M631 206h.1M126 709h.1M482 734h.1M196 312h.1M713 116h.1M437 417h.1M15 25h.1M739 509h.1M692 288h.1M203 738h.1M27 106h.1M852 182h.1M804 219h.1M171 469h.1M425 208h.1M815 209h.1M558 585h.1M444 83h.1M778 338h.1M211 119h.1M882 317h.1M537 63h.1M416 295h.1M134 656h.1M938 464h.1M24 642h.1M329 280h.1M501 360h.1M134 59h.1M24 37h.1M893 677h.1M399 94h.1M630 156h.1M755 278h.1M928 157h.1M942 736h.1M915 565h.1M822 160h.1M803 742h.1M834 329h.1M101 438h.1M193 163h.1M192 52h.1M370 633h.1M102 261h.1M661 454h.1M672 377h.1M139 141h.1M721 393h.1M838 594h.1M623 194h.1M29 54h.1M76 234h.1M920 583h.1M576 147h.1M766 355h.1M828 523h.1M51 151h.1M176 46h.1M546 185h.1M396 514h.1M272 640h.1M220 476h.1M845 301h.1M102 159h.1M349 315h.1M166 612h.1M749 299h.1M597 293h.1M576 169h.1M512 601h.1M68 151h.1M246 219h.1M339 671h.1M48 157h.1M387 659h.1M717 81h.1M184 710h.1M884 9h.1M854 670h.1M926 403h.1M554 46h.1M741 143h.1M499 497h.1M854 508h.1M565 584h.1M419 99h.1M18 130h.1M443 359h.1M693 495h.1M713 96h.1M337 385h.1M820 158h.1M664 435h.1M89 582h.1M924 742h.1M967 193h.1M819 141h.1M965 436h.1M568 220h.1M925 254h.1M850 566h.1M426 350h.1M620 422h.1M1 375h.1M403 208h.1M69 561h.1M373 91h.1M664 357h.1M746 467h.1M850 459h.1M508 443h.1M165 267h.1M63 393h.1M201 155h.1M217 544h.1M890 511h.1M890 254h.1M891 234h.1M950 151h.1M699 26h.1M530 647h.1M910 309h.1M268 544h.1M841 661h.1M425 275h.1M273 412h.1M903 279h.1M29 64h.1M696 499h.1M81 7h.1M778 326h.1M423 176h.1M201 439h.1M423 632h.1M722 83h.1M142 353h.1M574 145h.1M310 646h.1M617 656h.1M597 250h.1M762 383h.1M935 55h.1M693 373h.1M653 121h.1M653 616h.1M584 743h.1M447 661h.1M320 24h.1M136 295h.1M442 532h.1M801 114h.1M931 491h.1M739 75h.1M83 543h.1M61 490h.1M806 441h.1M832 1h.1M170 698h.1M734 663h.1M820 105h.1M700 125h.1M302 6h.1M88 551h.1M262 531h.1M209 211h.1M8 599h.1M527 107h.1M812 418h.1M591 20h.1M962 567h.1M536 242h.1M429 216h.1M744 5h.1M429 283h.1M601 595h.1M456 411h.1M75 612h.1M568 225h.1M799 753h.1M390 416h.1M944 372h.1M579 737h.1M904 125h.1M934 131h.1M842 226h.1M708 67h.1M734 51h.1M319 288h.1M242 716h.1M870 50h.1M855 217h.1M710 321h.1M676 688h.1M675 728h.1M106 516h.1M351 641h.1M485 4h.1M849 48h.1M730 147h.1M788 150h.1M102 183h.1M654 731h.1M511 344h.1M662 262h.1M193 193h.1M667 235h.1M366 596h.1M839 63h.1M456 232h.1M793 67h.1M766 82h.1M765 124h.1M609 725h.1M86 192h.1M199 765h.1M156 171h.1M662 249h.1M751 382h.1M882 471h.1M696 207h.1M464 702h.1M518 318h.1M337 680h.1M28 8h.1M80 133h.1M61 763h.1M851 579h.1M144 85h.1M3 155h.1M355 545h.1M935 145h.1M69 339h.1M908 433h.1M405 663h.1M547 742h.1M461 73h.1M167 740h.1M20 615h.1M710 158h.1M880 430h.1M355 759h.1M414 151h.1M844 73h.1M122 524h.1M927 639h.1M825 609h.1M26 367h.1M513 177h.1M374 222h.1M726 177h.1M137 44h.1M600 279h.1M374 33h.1M841 204h.1M597 633h.1M499 669h.1M868 227h.1M753 470h.1M138 181h.1M517 444h.1M872 92h.1M316 139h.1M221 548h.1M730 754h.1M679 102h.1M532 351h.1M597 288h.1M518 18h.1M468 597h.1M470 505h.1M816 99h.1M173 673h.1M780 702h.1M845 544h.1M87 87h.1M9 563h.1M330 485h.1M79 131h.1M773 769h.1M34 374h.1M98 517h.1M205 187h.1M208 134h.1M674 696h.1M277 203h.1M507 332h.1M852 750h.1M640 447h.1M507 456h.1M508 5h.1M653 289h.1M520 615h.1M130 625h.1M949 384h.1M357 750h.1M832 174h.1M23 737h.1M555 374h.1M770 347h.1M446 759h.1M43 375h.1M653 219h.1M502 503h.1M222 248h.1M533 56h.1M799 10h.1M226 75h.1M420 376h.1M66 669h.1M621 169h.1M418 726h.1M502 613h.1M323 505h.1M841 748h.1M701 356h.1M710 360h.1M918 425h.1M816 610h.1M964 162h.1M650 238h.1M639 538h.1M529 758h.1M471 305h.1M137 280h.1M745 611h.1M707 310h.1M514 202h.1M843 75h.1M769 90h.1M866 209h.1M600 384h.1M231 421h.1M812 28h.1M245 633h.1M167 553h.1M946 730h.1M778 263h.1M109 235h.1M133 130h.1M643 705h.1M319 312h.1M519 176h.1M316 580h.1M952 182h.1M718 493h.1M494 510h.1M583 549h.1M826 272h.1M867 279h.1M485 702h.1M909 551h.1M237 718h.1M57 351h.1M270 20h.1M506 59h.1M617 61h.1M229 430h.1M688 361h.1M541 492h.1M189 682h.1M454 139h.1M81 149h.1M580 731h.1M537 501h.1M154 103h.1M696 674h.1M373 263h.1M53 727h.1M859 680h.1M466 11h.1M860 95h.1M403 475h.1M324 176h.1M948 617h.1M14 102h.1M953 128h.1M949 430h.1M295 483h.1M230 397h.1M352 120h.1M345 622h.1M941 175h.1M679 355h.1M88 659h.1M833 295h.1M484 452h.1M560 605h.1M641 109h.1M759 378h.1M377 358h.1M847 212h.1M906 722h.1M92 694h.1M195 655h.1M758 443h.1M230 241h.1M454 421h.1M861 354h.1M821 463h.1M827 487h.1M692 362h.1M819 273h.1M955 88h.1M900 277h.1M535 480h.1M184 757h.1M414 201h.1M244 706h.1M98 754h.1M924 261h.1M839 33h.1M321 544h.1M287 114h.1M642 161h.1M546 104h.1M327 367h.1M495 32h.1M429 738h.1M799 117h.1M876 457h.1M851 8h.1M333 125h.1M119 235h.1M60 622h.1M701 772h.1M762 672h.1M134 306h.1M869 612h.1M732 22h.1M166 640h.1M113 614h.1M703 386h.1M429 102h.1M223 367h.1M521 317h.1M881 27h.1M479 289h.1M782 96h.1M151 319h.1M284 604h.1M946 9h.1M402 525h.1M930 266h.1M6 644h.1M122 307h.1M241 415h.1M641 746h.1M290 460h.1M376 364h.1M632 548h.1M209 154h.1M241 241h.1M736 594h.1M269 270h.1M27 668h.1M7 160h.1M686 402h.1M876 132h.1M617 165h.1M549 734h.1M730 534h.1M585 567h.1M432 562h.1M213 124h.1M514 389h.1M811 539h.1M657 600h.1M229 314h.1M635 298h.1M9 364h.1M544 226h.1M661 56h.1M366 605h.1M190 251h.1M805 428h.1M932 6h.1M521 180h.1M513 577h.1M144 714h.1M643 160h.1" stroke="#ffffff" stroke-width="2.2" stroke-opacity="0.8" stroke-linecap="round"/><path d="M405 285h.1M780 113h.1M356 336h.1M255 538h.1M899 239h.1M273 527h.1M11 623h.1M502 772h.1M882 188h.1M440 694h.1M753 544h.1M677 73h.1M510 314h.1M28 26h.1M501 483h.1M403 535h.1M769 722h.1M761 650h.1M383 530h.1M966 593h.1M155 449h.1M706 499h.1M872 298h.1M944 608h.1M491 180h.1M131 746h.1M287 79h.1M826 285h.1M394 122h.1M898 370h.1M142 210h.1" stroke="#ff7a48" stroke-width="3.7" stroke-opacity="1.0" stroke-linecap="round"/><path d="M498 477h.1M701 131h.1M907 490h.1M533 31h.1M418 38h.1M302 438h.1M467 41h.1M429 724h.1M607 275h.1M320 759h.1M805 407h.1M297 534h.1M301 301h.1M78 315h.1M709 51h.1M961 167h.1M101 15h.1M865 671h.1M694 212h.1M447 649h.1M285 163h.1M150 44h.1M704 332h.1M480 719h.1M30 304h.1M934 520h.1M191 354h.1M442 259h.1M373 745h.1M776 278h.1M296 34h.1M469 494h.1M860 614h.1M936 69h.1M704 73h.1M649 215h.1M372 282h.1M647 18h.1M260 728h.1M190 592h.1M812 103h.1M455 695h.1M147 668h.1M723 664h.1M425 611h.1M899 366h.1M409 183h.1M236 120h.1M423 1h.1M803 368h.1M487 556h.1M99 120h.1M12 337h.1M788 123h.1M276 360h.1M820 91h.1M703 691h.1M670 287h.1M522 317h.1M708 376h.1M600 292h.1M234 114h.1M95 448h.1M625 699h.1M352 214h.1M539 325h.1M60 322h.1M199 179h.1M199 361h.1M821 711h.1M898 15h.1M874 286h.1M695 582h.1M622 770h.1M406 283h.1M369 386h.1M8 749h.1M407 752h.1M92 52h.1M113 497h.1M635 759h.1M580 42h.1M2 310h.1M627 530h.1M427 23h.1M551 233h.1M186 441h.1M330 502h.1M360 490h.1M401 184h.1M915 33h.1M772 351h.1M929 444h.1M294 306h.1M81 139h.1M10 49h.1M940 720h.1M831 747h.1M421 6h.1M52 130h.1M207 550h.1M796 456h.1M439 108h.1M525 462h.1M361 627h.1M384 4h.1M373 56h.1M822 229h.1M661 590h.1M912 235h.1M661 542h.1M429 467h.1M144 371h.1M178 615h.1M297 94h.1M735 193h.1M298 332h.1M865 576h.1M514 42h.1M536 382h.1M26 140h.1M469 293h.1M403 108h.1M762 385h.1M899 149h.1M339 299h.1M378 167h.1M301 44h.1M617 638h.1M441 141h.1M698 13h.1M482 222h.1M130 399h.1M339 757h.1M658 150h.1M266 278h.1M683 317h.1M358 549h.1M799 3h.1M47 404h.1M112 85h.1M899 602h.1M132 134h.1M380 334h.1M683 256h.1M605 438h.1M225 719h.1M531 104h.1M907 415h.1M248 94h.1M760 728h.1M790 773h.1M57 654h.1M311 305h.1M607 723h.1M473 89h.1M803 470h.1M719 262h.1M18 587h.1M490 317h.1M758 48h.1M126 149h.1M666 1h.1M414 653h.1M386 768h.1M832 128h.1M115 715h.1M609 769h.1M396 330h.1M788 471h.1M739 496h.1M576 367h.1M678 98h.1M162 79h.1M914 178h.1M362 320h.1M732 514h.1M355 736h.1M543 632h.1M771 338h.1M881 586h.1M490 7h.1M173 196h.1M78 80h.1M535 535h.1M374 450h.1M266 61h.1M91 3h.1M892 395h.1M109 398h.1M940 539h.1M572 525h.1M440 392h.1M677 462h.1M776 337h.1M411 142h.1M775 471h.1M908 213h.1M125 70h.1M339 696h.1M184 22h.1M566 512h.1M763 242h.1M314 321h.1M565 592h.1M222 54h.1M492 341h.1M204 288h.1M240 684h.1M504 673h.1M705 462h.1M342 105h.1M390 593h.1M754 732h.1M921 63h.1M71 746h.1M147 175h.1M368 542h.1M698 270h.1M356 229h.1M584 246h.1M686 39h.1M68 514h.1M638 352h.1M621 325h.1M469 501h.1M593 221h.1M79 624h.1M614 318h.1M393 616h.1M667 77h.1M609 326h.1M504 176h.1M492 474h.1M56 747h.1M763 728h.1M188 483h.1M159 590h.1M554 280h.1M509 28h.1M348 9h.1M647 667h.1M161 506h.1M948 166h.1M852 617h.1M305 767h.1M722 581h.1M192 87h.1M863 305h.1M875 686h.1M484 699h.1M428 56h.1M642 187h.1M150 771h.1M856 135h.1M810 239h.1M611 124h.1M95 249h.1M634 694h.1M555 157h.1M402 335h.1M657 170h.1M327 199h.1M504 405h.1M866 756h.1M781 271h.1M179 560h.1M550 239h.1M331 630h.1M257 184h.1M692 568h.1M27 307h.1M361 427h.1M675 497h.1M597 436h.1M637 476h.1M559 717h.1M724 302h.1M842 177h.1M274 656h.1M751 442h.1M767 368h.1M469 378h.1M417 468h.1M389 168h.1M100 48h.1M941 649h.1M906 84h.1M852 231h.1M506 700h.1M131 264h.1M730 72h.1M386 180h.1M818 151h.1M839 409h.1M385 238h.1M336 405h.1M760 136h.1M822 231h.1M448 249h.1M380 761h.1M566 236h.1M129 663h.1M706 5h.1M130 196h.1M426 416h.1M779 58h.1M5 466h.1M197 710h.1M196 62h.1M574 760h.1M613 427h.1M275 127h.1M538 403h.1M518 36h.1M645 524h.1M924 705h.1M449 197h.1M599 533h.1M436 548h.1M691 608h.1M724 661h.1M503 418h.1M868 263h.1M434 337h.1M570 15h.1M874 697h.1M572 730h.1M663 315h.1M526 161h.1M658 48h.1M318 618h.1M309 419h.1M30 79h.1M529 613h.1M163 154h.1M896 158h.1M543 652h.1M947 482h.1M940 206h.1M289 477h.1M653 376h.1M929 227h.1M839 469h.1M876 513h.1M665 76h.1M229 177h.1M12 395h.1M492 269h.1M59 24h.1M40 126h.1M608 598h.1M413 622h.1M964 275h.1M501 37h.1M85 232h.1M91 368h.1M391 5h.1M950 527h.1M259 527h.1M572 556h.1M553 310h.1M401 623h.1M383 221h.1M489 539h.1M807 430h.1M58 384h.1M734 18h.1M873 594h.1M681 586h.1M258 545h.1M41 666h.1M46 661h.1M38 88h.1M847 192h.1M430 141h.1M691 585h.1M617 208h.1M104 665h.1M437 360h.1M75 478h.1M151 711h.1M831 564h.1M133 17h.1M374 356h.1M330 366h.1M709 760h.1M295 735h.1M896 118h.1M483 753h.1M770 249h.1M170 692h.1M936 323h.1M529 760h.1M551 574h.1M939 420h.1M866 180h.1M162 493h.1M247 350h.1M834 746h.1M889 713h.1M531 624h.1M280 727h.1M886 649h.1M477 110h.1M114 76h.1M125 35h.1M381 630h.1M433 546h.1M78 757h.1M688 173h.1M858 681h.1M304 73h.1M892 641h.1M100 514h.1M731 66h.1M710 561h.1M550 279h.1M659 772h.1M616 284h.1M690 362h.1M892 333h.1M72 395h.1M628 770h.1M341 106h.1M184 614h.1M925 483h.1M263 73h.1M81 679h.1M272 711h.1M655 122h.1M374 624h.1M463 240h.1M389 214h.1M428 317h.1M632 653h.1M590 176h.1M834 346h.1M328 36h.1M79 331h.1M713 744h.1M850 346h.1M893 274h.1M597 174h.1M891 250h.1M917 733h.1M705 235h.1M83 564h.1M848 259h.1M502 283h.1M258 318h.1M824 69h.1M326 584h.1M429 115h.1M919 659h.1M137 410h.1M667 552h.1M589 337h.1M484 686h.1M437 636h.1M262 735h.1M693 54h.1M198 68h.1M33 135h.1M878 588h.1M369 65h.1M364 271h.1M311 59h.1M719 489h.1M302 556h.1M887 289h.1M963 217h.1M747 228h.1M135 53h.1M817 113h.1M118 216h.1M449 544h.1M47 42h.1M599 558h.1M613 150h.1M526 550h.1M770 391h.1M157 320h.1M765 23h.1M279 335h.1M546 79h.1M362 742h.1M440 360h.1M624 350h.1M290 594h.1M619 2h.1M348 42h.1M864 530h.1M554 636h.1M449 592h.1M100 245h.1M349 439h.1M238 188h.1M413 197h.1M237 569h.1M329 666h.1M958 268h.1M548 401h.1M630 731h.1M640 305h.1M754 268h.1M644 688h.1M282 47h.1M679 682h.1M503 488h.1M7 583h.1M224 88h.1M49 502h.1M354 510h.1M923 655h.1M717 572h.1M737 420h.1M295 372h.1M50 326h.1M332 584h.1M206 118h.1M128 121h.1M376 695h.1M385 618h.1M286 691h.1M569 299h.1M159 272h.1M902 177h.1M8 648h.1M413 473h.1M30 101h.1M858 268h.1M708 182h.1M60 270h.1M890 115h.1M736 214h.1M455 526h.1M648 531h.1M704 767h.1M818 229h.1M923 296h.1M84 503h.1M768 346h.1M893 244h.1M689 755h.1M808 686h.1M813 384h.1M759 355h.1M98 64h.1M592 632h.1M542 199h.1M439 133h.1M881 586h.1M906 61h.1M817 171h.1M953 46h.1M374 69h.1M620 140h.1M219 175h.1M1 168h.1M98 682h.1M402 511h.1" stroke="#f4e8d8" stroke-width="1.7" stroke-opacity="0.55" stroke-linecap="round"/><path d="M98 281h.1M488 645h.1M129 279h.1M513 492h.1M256 173h.1M874 612h.1M41 644h.1M432 75h.1M235 68h.1M553 323h.1M435 298h.1M301 493h.1M383 88h.1M412 687h.1M664 294h.1M354 620h.1M931 149h.1M330 380h.1M554 82h.1M571 524h.1M958 729h.1M197 771h.1M391 79h.1M445 501h.1M67 201h.1M662 348h.1M838 86h.1M30 495h.1M484 28h.1M816 132h.1M893 721h.1M595 143h.1M576 599h.1M865 77h.1M935 398h.1M949 540h.1M290 374h.1M618 397h.1M436 1h.1M217 37h.1M212 330h.1M615 420h.1M697 364h.1M537 441h.1M217 199h.1M125 231h.1M194 679h.1M17 357h.1M261 297h.1M880 680h.1M412 384h.1M303 162h.1M630 3h.1M501 578h.1M357 75h.1M573 766h.1M861 66h.1M251 493h.1M368 270h.1M228 30h.1M299 57h.1M376 94h.1M166 247h.1M24 512h.1M493 731h.1M858 151h.1M774 59h.1M667 122h.1M392 614h.1M871 269h.1M572 550h.1M227 213h.1M930 264h.1M508 524h.1M2 394h.1M128 223h.1M745 320h.1M792 252h.1M572 421h.1M151 237h.1M728 470h.1M272 754h.1M474 690h.1M837 361h.1M568 558h.1M55 608h.1M209 549h.1M554 676h.1M669 360h.1M397 177h.1M160 770h.1M777 113h.1M113 77h.1M432 268h.1M773 11h.1M903 521h.1M243 296h.1M630 711h.1M152 164h.1M375 267h.1M804 491h.1M243 652h.1M673 44h.1M760 18h.1M623 515h.1M367 508h.1M875 26h.1M366 715h.1M81 365h.1M630 723h.1M951 99h.1M111 191h.1M61 638h.1M279 661h.1M842 515h.1M594 726h.1M599 308h.1M479 517h.1M618 606h.1M110 651h.1M751 379h.1M935 145h.1M787 147h.1M122 684h.1M328 600h.1M97 668h.1M481 169h.1M427 663h.1M810 756h.1M382 736h.1M525 597h.1M774 270h.1M151 676h.1M701 147h.1M493 105h.1M88 466h.1M662 556h.1M543 536h.1M617 116h.1M182 727h.1M510 120h.1M287 160h.1M210 362h.1M375 220h.1M34 179h.1M429 391h.1M101 109h.1M634 171h.1M207 456h.1M791 742h.1M893 190h.1M846 766h.1M377 643h.1M509 302h.1M8 378h.1M7 604h.1M341 195h.1M568 690h.1M115 55h.1M350 412h.1M916 301h.1M760 529h.1M470 592h.1M211 489h.1M265 649h.1M480 60h.1M423 356h.1M469 248h.1M634 182h.1M318 124h.1M849 178h.1M555 156h.1M644 183h.1M565 325h.1M613 312h.1M623 649h.1M316 711h.1M448 644h.1M428 685h.1M500 548h.1M846 54h.1M835 359h.1M289 123h.1M52 384h.1M894 302h.1M926 545h.1M543 388h.1M863 361h.1M8 159h.1M63 383h.1M946 268h.1M231 343h.1M482 45h.1M270 376h.1M126 26h.1M493 275h.1M20 593h.1M598 48h.1M347 697h.1M152 621h.1M629 15h.1M839 22h.1M951 766h.1M695 45h.1M156 299h.1M59 461h.1M803 78h.1M563 407h.1M68 464h.1M81 632h.1M644 41h.1M924 282h.1M710 149h.1M489 289h.1M664 477h.1M557 726h.1M247 732h.1M414 78h.1M166 743h.1M342 213h.1M729 205h.1M409 147h.1M789 717h.1M756 614h.1M653 225h.1M693 133h.1M517 524h.1M927 690h.1M574 305h.1M632 10h.1M302 208h.1M289 211h.1M608 652h.1" stroke="#ffb070" stroke-width="2.9" stroke-opacity="1.0" stroke-linecap="round"/><path d="M670 739h.1M173 610h.1M905 14h.1M876 384h.1M935 153h.1M58 436h.1M399 16h.1M395 687h.1M745 287h.1M192 357h.1M633 215h.1M809 517h.1M741 598h.1M782 515h.1M287 78h.1M562 763h.1M811 124h.1M600 283h.1M396 363h.1M744 640h.1M622 468h.1M407 314h.1M856 550h.1M464 2h.1M631 149h.1M469 35h.1M235 186h.1M956 698h.1M895 324h.1M931 760h.1M688 249h.1M110 503h.1M74 218h.1M291 608h.1M966 71h.1M941 153h.1M864 309h.1M29 8h.1M635 642h.1M199 79h.1M878 421h.1M222 655h.1M820 622h.1M465 232h.1M682 284h.1M606 67h.1M276 448h.1M928 346h.1M576 243h.1M697 613h.1M703 663h.1M885 407h.1M597 752h.1M477 525h.1M791 238h.1M8 349h.1M271 722h.1M466 213h.1M644 216h.1M209 113h.1M701 485h.1M478 482h.1M897 148h.1M26 618h.1M665 773h.1M425 120h.1M72 237h.1M660 305h.1M584 197h.1M425 488h.1M501 153h.1M448 760h.1M532 388h.1M437 390h.1M304 690h.1M331 285h.1M372 314h.1M572 513h.1M349 725h.1M643 88h.1M453 683h.1M673 296h.1M58 636h.1M174 70h.1M436 515h.1M546 286h.1M453 735h.1M865 303h.1M912 355h.1M611 676h.1M84 578h.1M764 103h.1M622 324h.1M241 79h.1M825 292h.1M326 313h.1M36 468h.1M737 345h.1M954 568h.1M396 504h.1M847 273h.1M560 510h.1M181 626h.1M728 118h.1M717 265h.1M628 200h.1M346 558h.1M517 23h.1M928 527h.1M17 134h.1M674 641h.1M867 141h.1M66 484h.1M948 110h.1M123 740h.1M874 461h.1M545 394h.1M72 17h.1M92 732h.1M298 345h.1M774 254h.1M539 377h.1M96 101h.1M9 103h.1M166 54h.1M936 564h.1M798 703h.1M544 542h.1M922 419h.1M927 149h.1M779 46h.1M400 705h.1M110 112h.1M377 470h.1M262 555h.1" stroke="#ffd0a0" stroke-width="2.9" stroke-opacity="1.0" stroke-linecap="round"/><path d="M339 424h.1M670 350h.1M212 736h.1M692 680h.1M458 454h.1M741 31h.1M855 447h.1M495 42h.1M309 28h.1M478 268h.1M98 744h.1M62 462h.1M189 28h.1M425 568h.1M377 277h.1M230 187h.1M189 66h.1M532 552h.1M578 199h.1M505 368h.1M834 56h.1M788 264h.1M40 636h.1M644 59h.1M654 701h.1M613 535h.1M639 140h.1M836 164h.1M199 512h.1M688 106h.1M101 14h.1M656 548h.1M692 567h.1M570 125h.1M648 383h.1M680 604h.1M839 340h.1M403 281h.1M631 82h.1M672 306h.1M401 95h.1M812 36h.1M123 105h.1M242 244h.1M725 538h.1M122 168h.1M915 3h.1M303 96h.1M795 453h.1M120 267h.1M879 255h.1M951 724h.1M517 740h.1M956 47h.1M591 73h.1M534 17h.1M315 664h.1M57 48h.1M490 617h.1M698 31h.1M635 341h.1M913 648h.1M560 268h.1M711 208h.1M554 515h.1M256 82h.1M303 274h.1M530 40h.1M168 711h.1M720 604h.1M344 0h.1M420 81h.1M626 183h.1M273 230h.1M722 286h.1M370 392h.1M438 764h.1M85 671h.1M561 84h.1M919 73h.1M176 592h.1M731 52h.1M514 145h.1M579 724h.1M651 162h.1M162 383h.1M684 443h.1M300 83h.1M36 107h.1M145 158h.1M748 562h.1M581 51h.1M163 320h.1M29 688h.1M30 194h.1M89 516h.1M281 417h.1M688 25h.1M739 766h.1M929 172h.1M793 442h.1M797 14h.1M569 92h.1M750 15h.1M459 400h.1M345 577h.1M857 352h.1M579 131h.1M805 174h.1M721 336h.1M384 527h.1M704 456h.1M762 333h.1M663 281h.1M795 235h.1M704 716h.1M325 347h.1M489 567h.1M842 522h.1M331 571h.1M292 94h.1M236 165h.1M133 142h.1M796 552h.1M278 171h.1M502 478h.1M363 433h.1M562 551h.1M828 451h.1M241 635h.1M488 91h.1M477 250h.1M280 241h.1M790 663h.1M801 361h.1M306 730h.1M108 573h.1M568 184h.1M359 102h.1M521 616h.1M136 368h.1M887 604h.1M594 131h.1M367 66h.1M478 736h.1M843 434h.1M688 712h.1M399 194h.1M721 90h.1M646 724h.1M948 637h.1M687 107h.1M580 155h.1M599 447h.1M803 367h.1M331 564h.1M889 315h.1M960 561h.1M374 730h.1M529 461h.1M629 408h.1M722 262h.1M624 346h.1M69 161h.1M543 303h.1M922 356h.1M824 159h.1M665 564h.1M628 197h.1M248 766h.1M702 673h.1M28 148h.1M785 87h.1M567 347h.1M407 289h.1M374 550h.1M487 233h.1M86 9h.1M128 7h.1M899 569h.1M364 75h.1M692 373h.1M438 85h.1M229 193h.1M340 345h.1M258 187h.1M294 134h.1M705 312h.1M859 541h.1M620 349h.1M554 241h.1M411 585h.1M33 548h.1M476 162h.1M497 161h.1M235 398h.1M312 412h.1M355 714h.1M313 624h.1M380 59h.1M894 357h.1M823 634h.1M927 51h.1M195 683h.1M800 402h.1M428 243h.1M802 362h.1M500 322h.1M621 538h.1M494 448h.1M755 254h.1M910 645h.1M176 446h.1M345 607h.1M144 235h.1M312 738h.1M731 350h.1M52 175h.1M214 71h.1M56 451h.1M157 35h.1M475 327h.1M918 351h.1M57 627h.1M460 735h.1M240 324h.1M400 243h.1M720 709h.1M39 194h.1M218 21h.1M886 106h.1M765 164h.1M461 553h.1M393 260h.1M616 151h.1M361 235h.1M887 356h.1M967 713h.1M889 336h.1M165 353h.1M866 390h.1M846 306h.1M267 474h.1M684 149h.1M198 306h.1M152 708h.1M758 328h.1M763 330h.1M577 639h.1M195 447h.1M248 489h.1M161 616h.1M154 529h.1M87 571h.1M225 507h.1M141 493h.1M155 208h.1M799 207h.1M842 393h.1M472 746h.1M363 205h.1M689 62h.1M634 632h.1M911 104h.1M849 116h.1M425 473h.1M271 203h.1M312 449h.1M678 180h.1M654 743h.1M633 30h.1M1 651h.1M848 360h.1M823 487h.1M759 400h.1M959 275h.1M967 68h.1M959 63h.1M423 248h.1M578 626h.1M189 79h.1M545 747h.1M882 347h.1M945 746h.1M5 482h.1M724 344h.1M79 619h.1M962 660h.1M603 765h.1M167 104h.1M221 458h.1M219 396h.1M500 606h.1M440 769h.1M148 607h.1M710 678h.1M396 86h.1M417 352h.1M361 37h.1M50 543h.1M267 405h.1M191 200h.1M153 231h.1M484 15h.1M937 171h.1M470 233h.1M851 84h.1M611 17h.1M816 254h.1M833 242h.1M86 2h.1M479 44h.1M761 608h.1M214 47h.1M101 176h.1M103 159h.1M182 28h.1M65 140h.1M157 770h.1M591 170h.1M60 616h.1M322 232h.1M769 193h.1M759 447h.1M683 207h.1M733 415h.1M533 665h.1M318 532h.1M96 218h.1M957 739h.1M263 263h.1M200 251h.1M357 193h.1M401 356h.1M628 50h.1M46 221h.1M326 92h.1M458 261h.1M335 589h.1M832 320h.1M508 153h.1M868 579h.1M359 698h.1M737 364h.1M661 409h.1M822 607h.1M953 172h.1M511 320h.1M49 57h.1M510 81h.1M907 4h.1M131 152h.1M171 235h.1M577 415h.1M281 263h.1M58 423h.1M947 214h.1M316 678h.1M553 614h.1M327 120h.1M757 397h.1M725 710h.1M515 760h.1M82 719h.1M496 431h.1M183 536h.1M337 570h.1M498 106h.1M633 576h.1M647 719h.1M221 564h.1M58 598h.1M272 89h.1M414 106h.1M779 644h.1M18 22h.1M911 224h.1M868 255h.1M603 689h.1M459 571h.1M167 660h.1M935 42h.1M916 478h.1M380 528h.1M861 482h.1M57 99h.1M837 227h.1M118 64h.1M660 712h.1M808 271h.1M755 371h.1M111 733h.1M50 22h.1M119 462h.1M40 399h.1M244 372h.1M88 757h.1M458 254h.1M252 131h.1M620 760h.1M537 66h.1M270 737h.1M426 16h.1M562 132h.1M525 659h.1M479 72h.1M182 215h.1M660 346h.1M292 361h.1M814 563h.1M581 511h.1M120 563h.1M500 537h.1M496 504h.1M228 169h.1M37 324h.1M629 579h.1M255 305h.1M541 764h.1M316 569h.1M582 57h.1M563 189h.1M927 251h.1M567 261h.1M409 44h.1M190 139h.1M610 310h.1M5 205h.1M721 284h.1M326 698h.1M773 413h.1M310 469h.1M869 83h.1M408 18h.1M649 610h.1M381 591h.1M728 483h.1M838 294h.1M156 101h.1" stroke="#ffd0a0" stroke-width="1.7" stroke-opacity="0.55" stroke-linecap="round"/><path d="M233 57h.1M88 185h.1M844 17h.1M947 363h.1M230 148h.1M523 554h.1M265 658h.1M645 463h.1M548 486h.1M211 309h.1M330 106h.1M203 683h.1M305 751h.1M167 635h.1M123 185h.1M765 371h.1M727 492h.1M571 337h.1M350 173h.1M767 268h.1M555 212h.1M157 396h.1M886 2h.1M144 106h.1M252 122h.1M260 699h.1M423 3h.1M368 176h.1M946 10h.1M933 107h.1M454 300h.1M542 132h.1M822 115h.1M648 652h.1M915 306h.1M48 127h.1M891 559h.1M932 449h.1M20 392h.1M765 732h.1M361 494h.1M594 251h.1M176 766h.1M560 356h.1M870 280h.1M67 507h.1M407 497h.1M467 689h.1M867 656h.1M626 621h.1M24 534h.1M737 215h.1M377 250h.1M242 470h.1M479 364h.1M364 108h.1M726 244h.1M874 103h.1M614 31h.1M682 471h.1M478 16h.1M593 674h.1M954 284h.1M884 362h.1M200 177h.1M707 290h.1M221 66h.1M917 313h.1M301 272h.1M371 747h.1M564 571h.1M693 34h.1M236 601h.1M540 667h.1M19 681h.1M914 6h.1M115 63h.1M959 112h.1M721 120h.1M532 499h.1M254 651h.1M788 313h.1M71 760h.1M236 475h.1M178 55h.1M863 760h.1M592 546h.1M738 710h.1M482 140h.1M212 391h.1M397 709h.1M929 723h.1M599 635h.1M898 419h.1M75 273h.1M917 442h.1M182 435h.1M757 12h.1M310 108h.1M875 109h.1M830 734h.1M584 59h.1M455 76h.1M684 246h.1M955 15h.1M473 540h.1M137 309h.1M343 258h.1M15 433h.1M130 694h.1M153 441h.1M214 727h.1M594 637h.1M228 426h.1M473 85h.1M359 20h.1M542 179h.1M77 767h.1M633 104h.1M947 745h.1M938 487h.1M792 377h.1M23 58h.1M101 225h.1M652 480h.1M328 650h.1M812 20h.1M0 75h.1M764 536h.1M515 527h.1M941 122h.1M742 571h.1M594 148h.1M399 119h.1M241 599h.1M498 755h.1M83 377h.1M331 203h.1M254 405h.1M676 621h.1M440 424h.1M937 754h.1M343 741h.1M924 671h.1M108 731h.1M827 771h.1M882 190h.1M878 566h.1M593 10h.1M49 252h.1M17 436h.1M389 353h.1M116 152h.1M409 31h.1M652 18h.1M876 257h.1M454 145h.1M398 672h.1M640 402h.1M794 209h.1M935 652h.1M358 706h.1M569 643h.1M251 520h.1M900 676h.1M73 197h.1M468 492h.1M580 146h.1M308 241h.1M573 700h.1M882 319h.1M16 772h.1M344 95h.1M814 33h.1M798 724h.1M924 7h.1M854 452h.1M684 20h.1M181 721h.1M423 26h.1M83 20h.1M611 163h.1M668 10h.1M872 572h.1M910 680h.1M610 285h.1M505 484h.1M305 6h.1M930 758h.1M763 633h.1M475 772h.1M886 375h.1M102 240h.1M30 38h.1M6 465h.1M731 448h.1M549 532h.1M201 176h.1M114 228h.1M797 329h.1M877 635h.1M898 483h.1M876 85h.1M418 597h.1M290 20h.1M26 41h.1M180 434h.1M200 16h.1M149 262h.1M194 24h.1M277 382h.1M825 750h.1M155 765h.1M97 527h.1M815 165h.1M713 505h.1M31 307h.1M404 428h.1M769 16h.1M843 80h.1M362 315h.1M110 450h.1M49 11h.1M158 291h.1M793 348h.1M375 498h.1M458 3h.1M893 281h.1M543 419h.1M339 621h.1M693 571h.1M116 91h.1M29 437h.1M568 119h.1M282 412h.1M638 419h.1M458 334h.1M651 431h.1M954 338h.1M932 432h.1M201 13h.1M768 349h.1M646 38h.1M893 521h.1M175 334h.1M614 154h.1M191 716h.1M723 47h.1M771 654h.1M45 29h.1M535 67h.1M523 409h.1M336 505h.1M306 561h.1M826 281h.1M615 732h.1M663 189h.1M564 88h.1M837 292h.1M646 374h.1M499 640h.1M457 656h.1M805 125h.1M569 303h.1M444 304h.1M374 321h.1M295 642h.1M647 60h.1M58 474h.1M496 47h.1M4 53h.1M691 138h.1M258 595h.1M147 181h.1M327 737h.1M591 621h.1M759 409h.1M953 225h.1M613 302h.1M354 392h.1M882 344h.1M181 466h.1M799 227h.1M854 118h.1M650 680h.1M272 518h.1M359 612h.1M143 316h.1M165 622h.1M368 293h.1M613 229h.1M193 132h.1M570 719h.1M538 306h.1M614 235h.1M796 392h.1M822 31h.1M324 42h.1M684 709h.1M937 403h.1M803 26h.1M804 476h.1M924 544h.1M896 568h.1M606 166h.1M691 570h.1M218 279h.1M552 375h.1M748 360h.1M475 452h.1M706 481h.1M95 730h.1M459 556h.1M567 348h.1M230 192h.1M443 331h.1M275 657h.1M189 206h.1M873 591h.1M557 638h.1M578 669h.1M351 194h.1M878 520h.1M373 205h.1M460 153h.1M281 66h.1M386 385h.1M309 234h.1" stroke="#f4e8d8" stroke-width="2.2" stroke-opacity="0.8" stroke-linecap="round"/><path d="M603 396h.1M156 254h.1M737 114h.1M236 711h.1M214 701h.1M586 252h.1M830 88h.1M515 213h.1M347 58h.1M140 457h.1M174 58h.1M178 517h.1M407 344h.1M12 537h.1M746 444h.1M313 770h.1M324 278h.1M463 619h.1M72 49h.1M663 27h.1M539 748h.1M759 561h.1M272 660h.1M89 348h.1M0 591h.1M451 316h.1M27 489h.1M379 441h.1M409 102h.1M673 163h.1M360 345h.1M184 363h.1M52 15h.1M822 627h.1M688 266h.1M745 76h.1M309 86h.1M716 574h.1M379 638h.1M912 696h.1M106 640h.1M142 420h.1M84 380h.1M869 751h.1M106 234h.1M131 709h.1M3 742h.1M44 579h.1M707 550h.1M176 676h.1M501 70h.1M902 250h.1M635 189h.1M443 580h.1M341 366h.1M763 48h.1M217 228h.1M750 326h.1M307 695h.1M60 501h.1M636 417h.1M327 430h.1" stroke="#d4e2ff" stroke-width="3.7" stroke-opacity="1.0" stroke-linecap="round"/><path d="M247 126h.1M50 46h.1M932 160h.1M616 510h.1M539 673h.1M85 711h.1M390 703h.1M327 339h.1M834 397h.1M678 752h.1M886 566h.1M113 201h.1M581 260h.1M177 122h.1M774 68h.1M451 476h.1M128 197h.1M117 10h.1M335 155h.1M411 470h.1M855 235h.1M491 167h.1M939 584h.1M523 109h.1M634 1h.1M544 640h.1M197 6h.1M466 700h.1M669 340h.1M284 323h.1M425 90h.1M325 92h.1M651 362h.1M733 689h.1M276 164h.1M840 256h.1M709 561h.1M930 452h.1M3 23h.1M26 492h.1M721 278h.1M394 267h.1M220 581h.1M530 15h.1M562 118h.1M640 269h.1M719 212h.1M855 93h.1M178 135h.1M827 702h.1M87 502h.1M625 559h.1M666 771h.1M259 346h.1M496 761h.1M567 333h.1M752 52h.1M308 708h.1M398 462h.1M547 179h.1M218 254h.1M379 93h.1M903 82h.1M852 47h.1M225 634h.1M553 141h.1M942 266h.1M416 482h.1M585 550h.1M776 204h.1M316 677h.1M727 489h.1M454 352h.1M547 637h.1M167 222h.1M477 199h.1M6 150h.1M326 17h.1M638 673h.1M219 614h.1M952 397h.1M468 83h.1M539 449h.1M334 488h.1M658 76h.1M359 81h.1M690 300h.1M936 219h.1M412 230h.1M566 451h.1M694 251h.1M778 520h.1M409 760h.1M347 26h.1M448 566h.1M799 330h.1M885 552h.1M510 722h.1M299 681h.1M929 113h.1M195 492h.1M307 268h.1M833 540h.1M558 686h.1M828 133h.1M80 548h.1M766 469h.1M75 721h.1M277 234h.1M392 165h.1M893 676h.1M496 681h.1M274 41h.1M632 658h.1M815 202h.1M234 60h.1M459 233h.1M788 728h.1M573 159h.1M665 111h.1M205 77h.1M342 735h.1M756 36h.1M324 303h.1M715 380h.1M692 14h.1M692 233h.1M805 204h.1M357 694h.1M511 355h.1M181 635h.1M143 58h.1M161 275h.1M531 10h.1M636 223h.1M882 418h.1M678 11h.1M306 595h.1M147 644h.1M558 575h.1M544 459h.1M399 317h.1M210 210h.1M729 358h.1M288 211h.1M213 372h.1M202 52h.1" stroke="#f4e8d8" stroke-width="2.9" stroke-opacity="1.0" stroke-linecap="round"/><path d="M152 345h.1M249 156h.1M378 196h.1M831 524h.1M773 355h.1M450 697h.1M20 677h.1M13 380h.1M418 281h.1M811 253h.1M555 217h.1M661 700h.1M563 127h.1M322 50h.1M723 601h.1M874 287h.1M23 330h.1M77 323h.1M796 379h.1M42 706h.1M805 695h.1M99 59h.1M808 414h.1M348 482h.1M725 168h.1M665 624h.1M800 247h.1M668 475h.1M916 349h.1M787 301h.1M703 260h.1M552 286h.1M87 104h.1M689 616h.1M711 193h.1M550 200h.1M507 489h.1M447 562h.1M821 253h.1M880 267h.1M382 455h.1M50 420h.1" stroke="#ffd0a0" stroke-width="3.7" stroke-opacity="1.0" stroke-linecap="round"/><path d="M944 382h.1M624 235h.1M681 238h.1M89 342h.1M496 692h.1M11 499h.1M410 352h.1M419 735h.1M714 119h.1M930 479h.1M183 525h.1M444 762h.1M427 511h.1M69 369h.1M632 396h.1M263 54h.1M134 149h.1M30 560h.1M771 524h.1M956 418h.1M722 209h.1M494 130h.1M257 518h.1M627 287h.1M216 6h.1M93 511h.1M157 57h.1M520 412h.1M211 365h.1M518 645h.1M263 104h.1M265 44h.1M962 430h.1M828 525h.1M321 115h.1M466 514h.1M109 113h.1M558 214h.1M610 87h.1M604 413h.1M331 469h.1M444 22h.1M501 580h.1M711 259h.1M909 133h.1M748 89h.1M817 233h.1M884 43h.1M725 422h.1M822 105h.1M877 361h.1M369 360h.1M451 283h.1M383 306h.1M123 187h.1M282 619h.1M252 614h.1M202 174h.1M552 614h.1M690 424h.1M408 504h.1M128 94h.1M181 410h.1M566 466h.1M180 471h.1M627 674h.1M534 462h.1M780 122h.1M333 671h.1M762 137h.1M797 423h.1M174 403h.1M691 66h.1M485 230h.1M674 143h.1M926 570h.1M850 435h.1M465 595h.1M915 259h.1M539 411h.1M805 739h.1M453 504h.1M397 43h.1M542 247h.1M934 495h.1M782 564h.1M625 84h.1M210 170h.1M864 674h.1M268 276h.1M36 158h.1M902 746h.1M640 21h.1M755 57h.1M826 709h.1M654 435h.1M832 527h.1M638 174h.1M949 19h.1M236 87h.1M209 273h.1M8 126h.1M894 652h.1M131 374h.1M187 379h.1M84 246h.1M307 593h.1M780 272h.1M723 134h.1M47 154h.1M123 760h.1M634 741h.1M761 420h.1M20 681h.1M504 690h.1M574 162h.1M477 62h.1M658 724h.1M573 742h.1M787 477h.1M866 406h.1M157 279h.1M399 186h.1M332 435h.1M212 213h.1M167 18h.1M819 551h.1M947 171h.1M456 362h.1M384 452h.1M536 570h.1M592 536h.1M263 250h.1M80 202h.1M797 57h.1M482 44h.1M880 457h.1M532 406h.1M850 635h.1M465 475h.1M840 232h.1M215 65h.1M634 723h.1M768 332h.1M499 626h.1M812 118h.1M247 738h.1M165 727h.1M80 445h.1M665 385h.1M361 121h.1M921 363h.1M27 23h.1M64 110h.1M439 364h.1M641 8h.1M933 276h.1M455 567h.1M787 223h.1M247 271h.1M539 86h.1M439 163h.1M213 681h.1M23 426h.1M95 272h.1M698 107h.1M22 680h.1M180 620h.1M669 288h.1M332 593h.1M215 184h.1M348 91h.1M113 182h.1M353 577h.1M177 654h.1M763 313h.1M466 156h.1M876 112h.1M919 283h.1M129 242h.1M265 336h.1M306 723h.1M117 138h.1M890 665h.1M519 64h.1M955 124h.1M227 81h.1M828 574h.1M854 140h.1M925 662h.1M407 91h.1M606 699h.1M338 536h.1M190 35h.1M688 561h.1M583 327h.1M494 101h.1M960 330h.1M663 624h.1M950 33h.1M720 758h.1M590 755h.1M922 647h.1M726 359h.1M764 153h.1M146 700h.1M719 746h.1M24 212h.1M111 135h.1M367 5h.1M403 308h.1M335 538h.1M589 285h.1M275 606h.1M489 470h.1M879 588h.1M461 233h.1M170 752h.1M753 73h.1M921 148h.1M241 725h.1M36 196h.1M426 726h.1M658 175h.1M743 252h.1M703 693h.1M662 530h.1M956 737h.1M268 654h.1M590 247h.1M149 114h.1M590 679h.1M605 111h.1M183 130h.1M388 766h.1M659 75h.1M835 328h.1M554 625h.1M809 226h.1M47 152h.1M724 289h.1M310 322h.1M811 477h.1M248 170h.1M944 461h.1M651 638h.1M358 164h.1M440 170h.1M377 245h.1M335 646h.1M214 104h.1M595 444h.1M886 240h.1M810 629h.1M379 692h.1M603 164h.1M357 645h.1M525 54h.1M175 522h.1M643 418h.1M40 568h.1M463 7h.1M568 310h.1M518 82h.1M771 674h.1M720 577h.1M911 291h.1M714 696h.1M706 661h.1M39 714h.1M794 230h.1M576 292h.1M464 325h.1M434 710h.1M773 729h.1M784 682h.1M693 563h.1M792 519h.1M357 545h.1M537 105h.1M696 63h.1M388 307h.1M688 760h.1M20 184h.1M836 176h.1M133 194h.1M880 648h.1M197 106h.1M612 64h.1M103 664h.1M41 457h.1M868 480h.1M323 9h.1M950 759h.1M488 736h.1M743 403h.1M589 599h.1M145 621h.1M620 131h.1M757 735h.1M411 335h.1M54 203h.1M110 39h.1M643 373h.1M42 81h.1M647 234h.1M340 271h.1M684 432h.1M460 743h.1M947 68h.1M615 639h.1M472 743h.1M8 684h.1M744 379h.1M771 279h.1M373 630h.1M684 657h.1M489 56h.1M392 407h.1M23 155h.1M574 175h.1M250 322h.1M355 99h.1M250 401h.1M675 10h.1M949 105h.1M402 401h.1M931 448h.1M766 433h.1M547 405h.1M671 606h.1M196 203h.1M476 772h.1M461 508h.1M359 253h.1M490 148h.1M557 597h.1M386 93h.1M601 92h.1M638 124h.1M73 178h.1M238 130h.1M406 720h.1M664 445h.1M650 603h.1M785 509h.1M455 155h.1M293 147h.1M195 601h.1M619 71h.1M504 545h.1M619 436h.1M507 131h.1M215 82h.1M588 128h.1M766 588h.1M433 86h.1M511 358h.1M834 373h.1M635 763h.1M216 366h.1M624 119h.1M896 356h.1M92 709h.1M863 204h.1M564 362h.1M537 46h.1M780 20h.1M50 29h.1M945 325h.1M609 312h.1M692 702h.1M465 346h.1" stroke="#ff7a48" stroke-width="1.7" stroke-opacity="0.55" stroke-linecap="round"/><path d="M562 110h.1M327 48h.1M142 304h.1M3 216h.1M506 205h.1M915 593h.1M308 698h.1M288 19h.1M13 201h.1M760 180h.1M19 88h.1M83 304h.1M290 749h.1M674 52h.1M663 539h.1M260 600h.1M548 706h.1M728 264h.1M760 144h.1M355 736h.1M665 138h.1M375 608h.1M483 518h.1M664 717h.1M279 352h.1M920 414h.1M108 108h.1M184 174h.1M845 527h.1M699 363h.1M314 509h.1M581 308h.1M815 588h.1M318 133h.1M538 67h.1M219 213h.1M37 456h.1M374 113h.1M913 654h.1M692 593h.1M434 684h.1M444 534h.1M733 634h.1M922 21h.1M942 316h.1M956 142h.1M651 324h.1M403 539h.1M590 266h.1M790 153h.1M678 474h.1M11 45h.1M767 19h.1M228 263h.1M682 406h.1M695 726h.1M177 105h.1M374 129h.1M922 223h.1M871 113h.1M82 254h.1M657 336h.1M653 450h.1M865 264h.1M28 635h.1M506 409h.1M587 515h.1M796 95h.1M481 705h.1M33 553h.1M195 507h.1M153 662h.1M268 653h.1M447 501h.1M926 362h.1M642 378h.1M818 431h.1M532 28h.1M442 633h.1M828 457h.1M534 27h.1M109 40h.1M813 137h.1M451 263h.1M618 402h.1M564 277h.1M673 298h.1M770 643h.1M953 2h.1M943 257h.1M649 639h.1M609 676h.1M172 225h.1M832 107h.1M353 166h.1M186 112h.1M592 218h.1M856 126h.1M634 688h.1M516 168h.1M292 414h.1M368 201h.1M75 207h.1M254 336h.1M334 176h.1M830 750h.1M369 657h.1M309 447h.1M817 138h.1M630 329h.1M571 334h.1M322 380h.1M489 447h.1M573 562h.1M666 559h.1M789 443h.1M652 317h.1M578 25h.1M502 193h.1M26 167h.1M145 167h.1M23 658h.1M421 530h.1M48 116h.1M853 453h.1M186 8h.1M406 698h.1M844 425h.1" stroke="#ffffff" stroke-width="3.7" stroke-opacity="1.0" stroke-linecap="round"/><path d="M280 288h.1M646 111h.1M323 64h.1M580 354h.1M213 413h.1M572 615h.1M328 735h.1M163 223h.1M873 420h.1M500 237h.1M897 359h.1" stroke="#ffb070" stroke-width="4.8" stroke-opacity="1.0" stroke-linecap="round"/><path d="M494 147h.1M240 309h.1M502 16h.1M720 435h.1M409 647h.1M714 122h.1M19 129h.1M711 278h.1M419 483h.1M455 158h.1M955 2h.1M708 578h.1M939 713h.1M189 53h.1M464 375h.1M42 114h.1M738 592h.1M618 718h.1M817 75h.1M348 389h.1M425 658h.1M431 171h.1M473 52h.1M214 669h.1M942 389h.1M779 632h.1M776 62h.1M279 705h.1M4 182h.1M895 658h.1M397 171h.1M580 573h.1M685 763h.1M643 689h.1M712 135h.1M241 423h.1M716 103h.1M12 110h.1M569 27h.1M781 720h.1M700 413h.1M88 25h.1M880 306h.1M801 391h.1M367 668h.1M136 145h.1" stroke="#f4e8d8" stroke-width="3.7" stroke-opacity="1.0" stroke-linecap="round"/><path d="M214 588h.1M708 630h.1M589 230h.1M58 261h.1M750 239h.1M14 659h.1M178 371h.1M164 57h.1M650 749h.1M441 668h.1M949 108h.1M851 399h.1M192 68h.1M370 337h.1M665 33h.1M736 443h.1M196 662h.1M638 404h.1M640 381h.1M374 754h.1M340 405h.1M219 349h.1M419 526h.1M443 202h.1M687 739h.1M854 740h.1M573 709h.1M92 672h.1M790 157h.1M326 615h.1M358 567h.1M751 748h.1M718 145h.1M647 763h.1M481 486h.1M50 575h.1M477 30h.1M126 241h.1M875 79h.1M76 59h.1M441 26h.1M751 413h.1M380 201h.1M269 412h.1M111 731h.1M433 573h.1M822 603h.1M810 315h.1M841 157h.1M966 400h.1M424 546h.1M549 691h.1M944 368h.1M398 435h.1M589 632h.1M877 53h.1M830 282h.1M217 578h.1M113 216h.1M194 106h.1M656 595h.1M626 248h.1M802 96h.1M830 115h.1M266 704h.1M955 515h.1M221 117h.1M747 714h.1M854 465h.1M373 119h.1M365 522h.1M676 75h.1M54 606h.1M794 661h.1M571 605h.1M617 737h.1M84 92h.1M584 690h.1M157 300h.1M739 33h.1M844 98h.1M777 646h.1M269 359h.1M325 245h.1M323 294h.1M893 396h.1M448 12h.1M414 482h.1M125 651h.1M326 284h.1M442 556h.1M646 651h.1M699 140h.1M406 518h.1M550 169h.1M19 392h.1M385 48h.1M871 388h.1M660 241h.1M766 221h.1M586 769h.1M649 536h.1M575 88h.1M128 626h.1M475 35h.1M634 627h.1M851 116h.1M149 104h.1M65 235h.1M427 696h.1M861 474h.1M213 565h.1M520 276h.1M884 159h.1M664 540h.1M535 132h.1M954 336h.1M652 338h.1M795 242h.1M319 153h.1M688 218h.1M361 5h.1M198 381h.1M421 581h.1" stroke="#fff0c8" stroke-width="3.7" stroke-opacity="1.0" stroke-linecap="round"/><path d="M600 521h.1M337 253h.1M851 598h.1M135 750h.1M799 396h.1M87 732h.1M184 420h.1M425 380h.1M401 509h.1M579 748h.1M407 756h.1M900 170h.1M521 725h.1M358 744h.1M917 530h.1M954 586h.1M765 610h.1M397 280h.1M68 647h.1M408 244h.1M224 368h.1M856 108h.1M770 19h.1M845 293h.1M318 517h.1M631 636h.1M305 520h.1M16 149h.1M25 534h.1M262 737h.1M448 553h.1M175 189h.1M958 559h.1M771 487h.1M337 380h.1M172 1h.1M751 253h.1M378 22h.1M266 42h.1M750 195h.1M586 133h.1M143 99h.1M69 244h.1M722 253h.1M653 178h.1M86 271h.1M728 268h.1M695 303h.1M516 211h.1M259 399h.1M671 534h.1M0 553h.1M22 640h.1M829 279h.1M637 377h.1M640 19h.1M783 282h.1M939 434h.1M951 246h.1M858 619h.1M916 640h.1M198 702h.1M760 88h.1M757 160h.1M248 17h.1M510 193h.1M529 601h.1M428 539h.1M542 515h.1M470 302h.1M4 670h.1M173 707h.1M395 62h.1M492 647h.1M329 137h.1M770 700h.1M669 189h.1M177 616h.1M759 192h.1M818 542h.1M331 255h.1M285 305h.1M584 16h.1M62 122h.1M577 53h.1M523 249h.1M664 148h.1M657 426h.1M743 555h.1M796 751h.1M158 134h.1M326 211h.1M289 630h.1M695 287h.1M800 568h.1M305 727h.1M450 748h.1M905 65h.1M880 618h.1M950 706h.1M199 244h.1M164 765h.1M695 339h.1M924 280h.1M453 642h.1M862 555h.1M961 648h.1M388 174h.1M512 533h.1M559 694h.1M788 274h.1M422 491h.1M605 81h.1M25 446h.1M596 267h.1M529 1h.1M405 211h.1" stroke="#ff7a48" stroke-width="2.9" stroke-opacity="1.0" stroke-linecap="round"/><path d="M561 682h.1M381 617h.1M627 152h.1M495 733h.1M445 427h.1M768 244h.1M373 442h.1M352 378h.1M274 645h.1M257 698h.1M472 587h.1M170 188h.1M374 568h.1M577 715h.1M729 125h.1M570 30h.1M501 513h.1M154 659h.1M55 30h.1M19 750h.1M669 123h.1M555 208h.1M430 258h.1M364 423h.1M264 211h.1M636 428h.1M694 515h.1M783 623h.1M861 500h.1M196 626h.1M899 542h.1M271 366h.1M512 460h.1M390 296h.1M700 465h.1M469 434h.1M500 147h.1M836 595h.1M716 767h.1M288 305h.1M396 177h.1M522 310h.1M244 136h.1M475 590h.1M96 250h.1M344 651h.1M913 235h.1M326 557h.1M328 602h.1M72 248h.1M70 230h.1M957 748h.1M400 91h.1M506 324h.1M438 752h.1M603 82h.1M143 64h.1M154 69h.1M615 31h.1M766 638h.1M624 91h.1M663 188h.1M785 236h.1M963 691h.1M948 57h.1M166 393h.1M565 465h.1M423 286h.1" stroke="#ffb070" stroke-width="3.7" stroke-opacity="1.0" stroke-linecap="round"/><path d="M500 115h.1M209 645h.1M714 192h.1M870 42h.1M333 715h.1M476 513h.1M714 318h.1M799 712h.1M855 202h.1M486 43h.1M727 537h.1M257 187h.1M598 37h.1M18 763h.1M676 160h.1M200 462h.1M478 563h.1" stroke="#fff0c8" stroke-width="4.8" stroke-opacity="1.0" stroke-linecap="round"/><path d="M89 370h.1M17 355h.1M163 344h.1M329 361h.1M39 41h.1M682 730h.1M171 189h.1M304 743h.1" stroke="#ffffff" stroke-width="4.8" stroke-opacity="1.0" stroke-linecap="round"/><path d="M62 689h.1M51 615h.1M874 311h.1M273 763h.1" stroke="#d4e2ff" stroke-width="4.8" stroke-opacity="1.0" stroke-linecap="round"/><path d="M658 406h.1M274 531h.1M434 406h.1" stroke="#ffd0a0" stroke-width="4.8" stroke-opacity="1.0" stroke-linecap="round"/><path d="M875 643h.1M611 185h.1M483 513h.1" stroke="#f4e8d8" stroke-width="4.8" stroke-opacity="1.0" stroke-linecap="round"/><path d="M338 216h.1" stroke="#ff7a48" stroke-width="4.8" stroke-opacity="1.0" stroke-linecap="round"/></g><g filter="url(#blur)" opacity=".6"><path d="M0 244L35 275L70 300L105 320L116 341L113 365" stroke="#060404" stroke-width="18" stroke-opacity="0.77" fill="none" stroke-linecap="round" stroke-linejoin="round"/><path d="M109 290L123 265L136 258" stroke="#060404" stroke-width="14" stroke-opacity="0.59" fill="none" stroke-linecap="round" stroke-linejoin="round"/><path d="M91 418L141 453L158 474L151 513L134 531L127 559L134 573" stroke="#060404" stroke-width="17" stroke-opacity="0.77" fill="none" stroke-linecap="round" stroke-linejoin="round"/><path d="M125 525L135 560" stroke="#060404" stroke-width="26" stroke-opacity="0.68" fill="none" stroke-linecap="round" stroke-linejoin="round"/><path d="M140 400L170 460" stroke="#060404" stroke-width="47" stroke-opacity="0.30" fill="none" stroke-linecap="round" stroke-linejoin="round"/><path d="M183 474L246 502L299 506" stroke="#060404" stroke-width="14" stroke-opacity="0.51" fill="none" stroke-linecap="round" stroke-linejoin="round"/><path d="M311 388L350 405L390 420L428 437" stroke="#060404" stroke-width="17" stroke-opacity="0.47" fill="none" stroke-linecap="round" stroke-linejoin="round"/><path d="M380 425L420 440" stroke="#060404" stroke-width="23" stroke-opacity="0.51" fill="none" stroke-linecap="round" stroke-linejoin="round"/><path d="M500 405L523 424" stroke="#060404" stroke-width="12" stroke-opacity="0.42" fill="none" stroke-linecap="round" stroke-linejoin="round"/><path d="M523 424L588 449L623 484L658 509L698 534" stroke="#060404" stroke-width="17" stroke-opacity="0.81" fill="none" stroke-linecap="round" stroke-linejoin="round"/><path d="M698 534L768 559" stroke="#060404" stroke-width="12" stroke-opacity="0.30" fill="none" stroke-linecap="round" stroke-linejoin="round"/><path d="M768 559L798 604L808 644L828 684L858 714L883 744L893 760" stroke="#060404" stroke-width="17" stroke-opacity="0.81" fill="none" stroke-linecap="round" stroke-linejoin="round"/><path d="M560 440L600 460" stroke="#060404" stroke-width="21" stroke-opacity="0.51" fill="none" stroke-linecap="round" stroke-linejoin="round"/><path d="M845 480L865 495" stroke="#060404" stroke-width="13" stroke-opacity="0.59" fill="none" stroke-linecap="round" stroke-linejoin="round"/></g>
<circle cx="228" cy="65" r="21.0" fill="url(#glow)" opacity=".85"/><circle cx="228" cy="65" r="3.9" fill="#e4eeff" filter="url(#sb)"/><circle cx="586" cy="56" r="18.0" fill="url(#glow)" opacity=".85"/><circle cx="586" cy="56" r="3.3" fill="#ffe0b8" filter="url(#sb)"/><circle cx="705" cy="12" r="12.0" fill="url(#glow)" opacity=".85"/><circle cx="705" cy="12" r="2.2" fill="#fff" filter="url(#sb)"/><circle cx="830" cy="207" r="12.0" fill="url(#glow)" opacity=".85"/><circle cx="830" cy="207" r="2.2" fill="#f0f4ff" filter="url(#sb)"/><circle cx="42" cy="214" r="12.0" fill="url(#glow)" opacity=".85"/><circle cx="42" cy="214" r="2.2" fill="#ffc070" filter="url(#sb)"/><circle cx="284" cy="207" r="12.0" fill="url(#glow)" opacity=".85"/><circle cx="284" cy="207" r="2.2" fill="#e8f0ff" filter="url(#sb)"/><circle cx="321" cy="125" r="9.0" fill="url(#glow)" opacity=".85"/><circle cx="321" cy="125" r="1.7" fill="#f8f0c0" filter="url(#sb)"/><circle cx="96" cy="105" r="9.0" fill="url(#glow)" opacity=".85"/><circle cx="96" cy="105" r="1.7" fill="#f8f0c0" filter="url(#sb)"/><circle cx="372" cy="67" r="9.0" fill="url(#glow)" opacity=".85"/><circle cx="372" cy="67" r="1.7" fill="#ffd890" filter="url(#sb)"/><circle cx="507" cy="325" r="9.0" fill="url(#glow)" opacity=".85"/><circle cx="507" cy="325" r="1.7" fill="#ffb070" filter="url(#sb)"/><circle cx="325" cy="361" r="18.0" fill="url(#glow)" opacity=".85"/><circle cx="325" cy="361" r="3.3" fill="#f0f4ff" filter="url(#sb)"/><circle cx="339" cy="355" r="15.0" fill="url(#glow)" opacity=".85"/><circle cx="339" cy="355" r="2.8" fill="#f0f4ff" filter="url(#sb)"/><circle cx="303" cy="368" r="9.0" fill="url(#glow)" opacity=".85"/><circle cx="303" cy="368" r="1.7" fill="#fff" filter="url(#sb)"/><circle cx="548" cy="327" r="12.0" fill="url(#glow)" opacity=".85"/><circle cx="548" cy="327" r="2.2" fill="#f0f4ff" filter="url(#sb)"/><circle cx="665" cy="397" r="12.0" fill="url(#glow)" opacity=".85"/><circle cx="665" cy="397" r="2.2" fill="#f0f4ff" filter="url(#sb)"/><circle cx="691" cy="451" r="15.0" fill="url(#glow)" opacity=".85"/><circle cx="691" cy="451" r="2.8" fill="#e8f0ff" filter="url(#sb)"/><circle cx="948" cy="377" r="12.0" fill="url(#glow)" opacity=".85"/><circle cx="948" cy="377" r="2.2" fill="#e8f0ff" filter="url(#sb)"/><circle cx="744" cy="528" r="12.0" fill="url(#glow)" opacity=".85"/><circle cx="744" cy="528" r="2.2" fill="#fff" filter="url(#sb)"/><circle cx="436" cy="600" r="15.0" fill="url(#glow)" opacity=".85"/><circle cx="436" cy="600" r="2.8" fill="#e8f0ff" filter="url(#sb)"/><circle cx="357" cy="617" r="9.0" fill="url(#glow)" opacity=".85"/><circle cx="357" cy="617" r="1.7" fill="#fff" filter="url(#sb)"/><circle cx="895" cy="584" r="21.0" fill="url(#glow)" opacity=".85"/><circle cx="895" cy="584" r="3.9" fill="#ffd8a0" filter="url(#sb)"/><circle cx="906" cy="620" r="12.0" fill="url(#glow)" opacity=".85"/><circle cx="906" cy="620" r="2.2" fill="#c8dcff" filter="url(#sb)"/><circle cx="73" cy="734" r="12.0" fill="url(#glow)" opacity=".85"/><circle cx="73" cy="734" r="2.2" fill="#e8f0ff" filter="url(#sb)"/><circle cx="81" cy="730" r="9.0" fill="url(#glow)" opacity=".85"/><circle cx="81" cy="730" r="1.7" fill="#e8f0ff" filter="url(#sb)"/><circle cx="120" cy="471" r="9.0" fill="url(#glow)" opacity=".85"/><circle cx="120" cy="471" r="1.7" fill="#fff" filter="url(#sb)"/><circle cx="181" cy="547" r="9.0" fill="url(#glow)" opacity=".85"/><circle cx="181" cy="547" r="1.7" fill="#fff" filter="url(#sb)"/><circle cx="192" cy="551" r="9.0" fill="url(#glow)" opacity=".85"/><circle cx="192" cy="551" r="1.7" fill="#fff" filter="url(#sb)"/><circle cx="927" cy="655" r="9.0" fill="url(#glow)" opacity=".85"/><circle cx="927" cy="655" r="1.7" fill="#fff" filter="url(#sb)"/><circle cx="737" cy="88" r="9.0" fill="url(#glow)" opacity=".85"/><circle cx="737" cy="88" r="1.7" fill="#fff" filter="url(#sb)"/><circle cx="811" cy="182" r="9.0" fill="url(#glow)" opacity=".85"/><circle cx="811" cy="182" r="1.7" fill="#ffc890" filter="url(#sb)"/><circle cx="836" cy="184" r="9.0" fill="url(#glow)" opacity=".85"/><circle cx="836" cy="184" r="1.7" fill="#fff" filter="url(#sb)"/>
</svg><div class="a" style="left:0;top:0;width:64px;height:19px;background:#2c2827"></div><div class="t" style="left:3px;top:4px;font-size:12.7px;color:#f0f0f0">Preview01</div><div class="a" style="left:300px;top:318px;width:132px;height:98px;border:1.5px solid #22ee22"></div><div class="a" style="left:301px;top:319px;width:64px;height:19px;background:#2c2827"></div><div class="t" style="left:304px;top:322px;font-size:12.7px;color:#f0f0f0">Preview04</div><div class="a" style="left:849px;top:555px;width:70px;height:51px;border:1.5px solid #e8e8e8"></div><div class="a" style="left:850px;top:556px;width:64px;height:20px;background:#2c2827"></div><div class="t" style="left:853px;top:560px;font-size:12.7px;color:#f0f0f0">Preview03</div></div><div class="a" style="left:1894px;top:120px;width:26px;height:926px;background:#6e6e6e"></div><div class="a" style="left:1894px;top:120px;width:26px;height:127px;background:#4f4f4f;border:1px solid #3a3a3a"></div><div class="vt" style="left:1901px;top:219px;font-size:12.4px;color:#e6e6e6">Process Explorer</div><svg class="a" style="left:1898px;top:225px" width="18" height="18"><g transform="translate(9,9)" fill="none" stroke="#f0f0f0"><circle r="5" stroke-width="2"/><circle r="7" stroke-width="2.4" stroke-dasharray="2.2 1.5"/></g></svg><div class="a" style="left:1894px;top:816px;width:26px;height:125px;background:#4f4f4f;border:1px solid #3a3a3a"></div><div class="vt" style="left:1901px;top:913px;font-size:12.4px;color:#e6e6e6">Process Console</div><svg class="a" style="left:1898px;top:919px" width="16" height="14"><path d="M1 1L15 6L1 13L4 6Z" fill="#f05030" stroke="#333"/></svg><div class="a" style="left:1894px;top:943px;width:26px;height:103px;background:#4f4f4f;border:1px solid #3a3a3a"></div><div class="vt" style="left:1901px;top:1018px;font-size:12.4px;color:#e6e6e6">File Explorer</div><svg class="a" style="left:1898px;top:1024px" width="16" height="17"><path d="M1 3V14A7 3 0 0 0 15 14V3Z" fill="#d8c8a0" stroke="#333"/><ellipse cx="8" cy="3" rx="7" ry="2.5" fill="#e8dcc0" stroke="#333"/></svg><div class="a" style="left:1693px;top:120px;width:3px;height:926px;background:#3b3e44"></div><div class="a" style="left:1694px;top:120px;width:1px;height:926px;background:#dca66a"></div><svg width="0" height="0" style="position:absolute"><defs>
<linearGradient id="yel" x1="0" y1="1" x2="1" y2="0"><stop offset="0" stop-color="#f0f000"/><stop offset=".6" stop-color="#e8e800"/><stop offset="1" stop-color="#909000"/></linearGradient>
<linearGradient id="bluefade" x1="0" y1="0" x2="1" y2="1"><stop offset="0" stop-color="#e0f0e8"/><stop offset="1" stop-color="#1010ff"/></linearGradient>
<linearGradient id="bluefade2" x1="0" y1="0" x2="1" y2="1"><stop offset="0" stop-color="#1010ff"/><stop offset="1" stop-color="#c0e0e0"/></linearGradient>
<linearGradient id="purgreen" x1="0" y1="0" x2="1" y2="1"><stop offset="0" stop-color="#8010c0"/><stop offset="1" stop-color="#10e010"/></linearGradient>
<linearGradient id="bluegreen" x1="0" y1="0" x2="1" y2="0"><stop offset="0" stop-color="#1020e0"/><stop offset="1" stop-color="#10e040"/></linearGradient>
<pattern id="chkbk" width="4" height="4" patternUnits="userSpaceOnUse"><rect width="4" height="4" fill="#fff"/><rect width="2" height="2" fill="#111"/><rect x="2" y="2" width="2" height="2" fill="#111"/></pattern>
</defs></svg><svg class="a" style="left:1421px;top:120px" width="169" height="26"><path d="M0.5 25.5V0.5H160L168.5 9V25.5Z" fill="#b4b4b4" stroke="#8f8f8f"/><path d="M1.5 24.5V1.5H159.5" stroke="#c8c8c8" fill="none"/><g transform="translate(1,1)"><path d="M11 0L21 5.5V18L11 24L1 18V5.5Z" fill="#1a72d0"/><path d="M1 5.5L11 11V24L1 18Z" fill="#6cbcff"/><path d="M11 0L21 5.5L11 11L1 5.5Z" fill="#3a9af4"/></g><rect x="14" y="1" width="11" height="24" fill="#3a3a3a"/><text transform="translate(23.5,23) rotate(-90)" font-family="Liberation Sans" font-weight="bold" font-size="10.5" fill="#fff">XISF</text><text x="161" y="21" font-family="Liberation Sans" font-weight="bold" font-size="6.5" fill="#111">N</text></svg><div class="pt" style="left:1450px;top:127px">BarnardLumDrizzle_r</div><svg class="a" style="left:1215px;top:151px" width="205" height="26"><path d="M0.5 25.5V0.5H196L204.5 9V25.5Z" fill="#b4b4b4" stroke="#8f8f8f"/><path d="M1.5 24.5V1.5H195.5" stroke="#c8c8c8" fill="none"/><g transform="translate(1,1)"><path d="M11 0L21 5.5V18L11 24L1 18V5.5Z" fill="#1a72d0"/><path d="M1 5.5L11 11V24L1 18Z" fill="#6cbcff"/><path d="M11 0L21 5.5L11 11L1 5.5Z" fill="#3a9af4"/></g><text x="197" y="21" font-family="Liberation Sans" font-weight="bold" font-size="6.5" fill="#111">N</text></svg><div class="pt" style="left:1244px;top:158px">BarnardLumDrizzle_r_clone</div><svg class="a" style="left:1348px;top:182px" width="70" height="26"><path d="M0.5 25.5V0.5H61L69.5 9V25.5Z" fill="#b4b4b4" stroke="#8f8f8f"/><path d="M1.5 24.5V1.5H60.5" stroke="#c8c8c8" fill="none"/><g transform="translate(1,1)"><path d="M11 0L21 5.5V18L11 24L1 18V5.5Z" fill="#1a72d0"/><path d="M1 5.5L11 11V24L1 18Z" fill="#6cbcff"/><path d="M11 0L21 5.5L11 11L1 5.5Z" fill="#3a9af4"/></g><text x="62" y="21" font-family="Liberation Sans" font-weight="bold" font-size="6.5" fill="#111">N</text></svg><div class="pt" style="left:1377px;top:189px">PSF</div><svg class="a" style="left:1329px;top:209px" width="114" height="26"><path d="M0.5 25.5V0.5H105L113.5 9V25.5Z" fill="#b4b4b4" stroke="#8f8f8f"/><path d="M1.5 24.5V1.5H104.5" stroke="#c8c8c8" fill="none"/><g transform="translate(1,1)"><path d="M11 0L21 5.5V18L11 24L1 18V5.5Z" fill="#1a72d0"/><path d="M1 5.5L11 11V24L1 18Z" fill="#6cbcff"/><path d="M11 0L21 5.5L11 11L1 5.5Z" fill="#3a9af4"/></g><text x="106" y="21" font-family="Liberation Sans" font-weight="bold" font-size="6.5" fill="#111">N</text></svg><div class="pt" style="left:1358px;top:216px">star_mask2</div><svg class="a" style="left:1701px;top:122px" width="191" height="26"><path d="M0.5 25.5V0.5H182L190.5 9V25.5Z" fill="#b4b4b4" stroke="#8f8f8f"/><path d="M1.5 24.5V1.5H181.5" stroke="#c8c8c8" fill="none"/><g transform="translate(1,1)"><path d="M11 0L21 5.5V18L11 24L1 18V5.5Z" fill="#1a72d0"/><path d="M1 5.5L11 11V24L1 18Z" fill="#6cbcff"/><path d="M11 0L21 5.5L11 11L1 5.5Z" fill="#3a9af4"/></g><rect x="14" y="1" width="11" height="24" fill="#3a3a3a"/><text transform="translate(23.5,23) rotate(-90)" font-family="Liberation Sans" font-weight="bold" font-size="10.5" fill="#fff">XISF</text><text x="183" y="21" font-family="Liberation Sans" font-weight="bold" font-size="6.5" fill="#111">N</text></svg><div class="pt" style="left:1730px;top:129px">Barnard150BlueDrizzle_r</div><svg class="a" style="left:1701px;top:152px" width="180" height="26"><path d="M0.5 25.5V0.5H171L179.5 9V25.5Z" fill="#b4b4b4" stroke="#8f8f8f"/><path d="M1.5 24.5V1.5H170.5" stroke="#c8c8c8" fill="none"/><g transform="translate(1,1)"><path d="M11 0L21 5.5V18L11 24L1 18V5.5Z" fill="#1a72d0"/><path d="M1 5.5L11 11V24L1 18Z" fill="#6cbcff"/><path d="M11 0L21 5.5L11 11L1 5.5Z" fill="#3a9af4"/></g><rect x="14" y="1" width="11" height="24" fill="#3a3a3a"/><text transform="translate(23.5,23) rotate(-90)" font-family="Liberation Sans" font-weight="bold" font-size="10.5" fill="#fff">XISF</text><text x="172" y="21" font-family="Liberation Sans" font-weight="bold" font-size="6.5" fill="#111">N</text></svg><div class="pt" style="left:1730px;top:159px">BarnardGreenDrizzle_r</div><svg class="a" style="left:1701px;top:182px" width="167" height="26"><path d="M0.5 25.5V0.5H158L166.5 9V25.5Z" fill="#b4b4b4" stroke="#8f8f8f"/><path d="M1.5 24.5V1.5H157.5" stroke="#c8c8c8" fill="none"/><g transform="translate(1,1)"><path d="M11 0L21 5.5V18L11 24L1 18V5.5Z" fill="#1a72d0"/><path d="M1 5.5L11 11V24L1 18Z" fill="#6cbcff"/><path d="M11 0L21 5.5L11 11L1 5.5Z" fill="#3a9af4"/></g><rect x="14" y="1" width="11" height="24" fill="#3a3a3a"/><text transform="translate(23.5,23) rotate(-90)" font-family="Liberation Sans" font-weight="bold" font-size="10.5" fill="#fff">XISF</text><text x="159" y="21" font-family="Liberation Sans" font-weight="bold" font-size="6.5" fill="#111">N</text></svg><div class="pt" style="left:1730px;top:189px">BarnardRedDrizzle_r</div><svg class="a" style="left:1599px;top:210px" width="99" height="26"><path d="M0.5 25.5V0.5H90L98.5 9V25.5Z" fill="#b4b4b4" stroke="#8f8f8f"/><path d="M1.5 24.5V1.5H89.5" stroke="#c8c8c8" fill="none"/><g transform="translate(1,1)"><path d="M11 0L21 5.5V18L11 24L1 18V5.5Z" fill="#1a72d0"/><path d="M1 5.5L11 11V24L1 18Z" fill="#6cbcff"/><path d="M11 0L21 5.5L11 11L1 5.5Z" fill="#3a9af4"/></g><text x="91" y="21" font-family="Liberation Sans" font-weight="bold" font-size="6.5" fill="#111">N</text></svg><div class="pt" style="left:1628px;top:217px">Image05</div><svg class="a" style="left:1422px;top:149px" width="102" height="26"><rect x="0.5" y="0.5" width="101" height="25" fill="#b4b4b4" stroke="#8f8f8f"/><path d="M1.5 24.5V1.5H100.5" stroke="#c8c8c8" fill="none"/><g transform="translate(2,2)"><rect x="0.5" y="0.5" width="19" height="19" fill="url(#yel)" stroke="#2020e0"/><path d="M3 1 L6 2 L7 8 L12 12 L17 18 L13 17 L10 14 L5 13 L2 9 L4 6Z" fill="#111"/><path d="M5 9l3 2 1 2z" fill="#fff"/></g><text x="93" y="10" font-family="Liberation Sans" font-weight="bold" font-size="6.5" fill="#111">N</text><text x="93" y="22" font-family="Liberation Sans" font-weight="bold" font-size="6.5" fill="#111">D</text></svg><div class="pt" style="left:1451px;top:156px">Process06</div><svg class="a" style="left:1422px;top:179px" width="102" height="26"><rect x="0.5" y="0.5" width="101" height="25" fill="#b4b4b4" stroke="#8f8f8f"/><path d="M1.5 24.5V1.5H100.5" stroke="#c8c8c8" fill="none"/><g transform="translate(2,2)"><rect x="0" y="0" width="20" height="20" fill="url(#bluefade)"/><path d="M0 20 C6 20 7 3 10 3 C13 3 14 20 20 20Z" fill="url(#bluefade2)"/></g><text x="93" y="10" font-family="Liberation Sans" font-weight="bold" font-size="6.5" fill="#111">N</text><text x="93" y="22" font-family="Liberation Sans" font-weight="bold" font-size="6.5" fill="#111">D</text></svg><div class="pt" style="left:1451px;top:186px">Process48</div><svg class="a" style="left:1447px;top:210px" width="102" height="26"><rect x="0.5" y="0.5" width="101" height="25" fill="#b4b4b4" stroke="#8f8f8f"/><path d="M1.5 24.5V1.5H100.5" stroke="#c8c8c8" fill="none"/><g transform="translate(2,2)"><rect x="0" y="0" width="20" height="20" fill="url(#purgreen)"/><circle cx="5" cy="5" r="2.6" fill="#c0d0ff"/><circle cx="15" cy="5" r="2.6" fill="#c0d0ff"/><circle cx="5" cy="15" r="2.6" fill="#c0d0ff"/><circle cx="15" cy="15" r="2.6" fill="#c0d0ff"/></g><text x="93" y="10" font-family="Liberation Sans" font-weight="bold" font-size="6.5" fill="#111">N</text><text x="93" y="22" font-family="Liberation Sans" font-weight="bold" font-size="6.5" fill="#111">D</text></svg><div class="pt" style="left:1476px;top:217px">Process52</div><svg class="a" style="left:1418px;top:242px" width="102" height="26"><rect x="0.5" y="0.5" width="101" height="25" fill="#b4b4b4" stroke="#8f8f8f"/><path d="M1.5 24.5V1.5H100.5" stroke="#c8c8c8" fill="none"/><g transform="translate(2,2)"><rect x="0" y="0" width="20" height="20" fill="url(#bluegreen)"/><path d="M0 20 C8 18 9 10 9 2 H11 C11 10 12 18 20 20Z" fill="#f07010"/><path d="M2 7h4l-2-2M18 7h-4l2-2" stroke="#30e0e0" stroke-width="1.5" fill="none"/></g><text x="93" y="10" font-family="Liberation Sans" font-weight="bold" font-size="6.5" fill="#111">N</text><text x="93" y="22" font-family="Liberation Sans" font-weight="bold" font-size="6.5" fill="#111">D</text></svg><div class="pt" style="left:1447px;top:249px">Process49</div><svg class="a" style="left:1418px;top:272px" width="102" height="26"><rect x="0.5" y="0.5" width="101" height="25" fill="#b4b4b4" stroke="#8f8f8f"/><path d="M1.5 24.5V1.5H100.5" stroke="#c8c8c8" fill="none"/><g transform="translate(2,2)"><rect x="0.5" y="0.5" width="19" height="19" fill="#fff" stroke="#2020e0"/><rect x="10" y="1" width="9" height="18" fill="url(#chkbk)"/><path d="M1 1v18h18" stroke="#8080ff" fill="none"/><path d="M2 19 C4 8 9 3 18 2" stroke="#f07010" stroke-width="1.8" fill="none"/></g><text x="93" y="10" font-family="Liberation Sans" font-weight="bold" font-size="6.5" fill="#111">N</text><text x="93" y="22" font-family="Liberation Sans" font-weight="bold" font-size="6.5" fill="#111">D</text></svg><div class="pt" style="left:1447px;top:279px">Process51</div><svg class="a" style="left:1702px;top:210px" width="102" height="26"><rect x="0.5" y="0.5" width="101" height="25" fill="#b4b4b4" stroke="#8f8f8f"/><path d="M1.5 24.5V1.5H100.5" stroke="#c8c8c8" fill="none"/><g transform="translate(2,2)"><rect x="0.5" y="0.5" width="19" height="19" fill="#fff" stroke="#111"/><path d="M1 1L10 10L1 19Z" fill="#e02020"/><path d="M1 1H19L10 10Z" fill="#2020e0"/><path d="M19 1V19L10 10Z" fill="#20c020"/><path d="M1 19H19L10 10Z" fill="#909090"/><path d="M10 10H19V19Z" fill="#e02020"/><path d="M1 10V19H10Z" fill="#a0e0a0"/></g><text x="93" y="10" font-family="Liberation Sans" font-weight="bold" font-size="6.5" fill="#111">N</text><text x="93" y="22" font-family="Liberation Sans" font-weight="bold" font-size="6.5" fill="#111">D</text></svg><div class="pt" style="left:1731px;top:217px">Process01</div><svg class="a" style="left:1702px;top:240px" width="102" height="26"><rect x="0.5" y="0.5" width="101" height="25" fill="#b4b4b4" stroke="#8f8f8f"/><path d="M1.5 24.5V1.5H100.5" stroke="#c8c8c8" fill="none"/><g transform="translate(2,2)"><rect x="0.5" y="0.5" width="19" height="19" fill="url(#yel)" stroke="#2020e0"/><path d="M3 1 L6 2 L7 8 L12 12 L17 18 L13 17 L10 14 L5 13 L2 9 L4 6Z" fill="#111"/><path d="M5 9l3 2 1 2z" fill="#fff"/></g><text x="93" y="10" font-family="Liberation Sans" font-weight="bold" font-size="6.5" fill="#111">N</text><text x="93" y="22" font-family="Liberation Sans" font-weight="bold" font-size="6.5" fill="#111">D</text></svg><div class="pt" style="left:1731px;top:247px">Process05</div><svg class="a" style="left:1702px;top:269px" width="102" height="26"><rect x="0.5" y="0.5" width="101" height="25" fill="#b4b4b4" stroke="#8f8f8f"/><path d="M1.5 24.5V1.5H100.5" stroke="#c8c8c8" fill="none"/><g transform="translate(2,2)"><rect x="0.5" y="0.5" width="19" height="19" fill="#fff" stroke="#111"/><path d="M1 1h18L10 9ZM1 19h18L10 11Z" fill="#222"/><path d="M2 9h16M2 10.5h16M2 12h16" stroke-width="1.2"/><path d="M2 8.6h16" stroke="#2020e0" stroke-width="1.2"/><path d="M2 10.2h16" stroke="#20c020" stroke-width="1.2"/><path d="M2 11.8h16" stroke="#e02020" stroke-width="1.2"/></g><text x="93" y="10" font-family="Liberation Sans" font-weight="bold" font-size="6.5" fill="#111">N</text><text x="93" y="22" font-family="Liberation Sans" font-weight="bold" font-size="6.5" fill="#111">D</text></svg><div class="pt" style="left:1731px;top:276px">Process02</div><svg class="a" style="left:1702px;top:298px" width="102" height="26"><rect x="0.5" y="0.5" width="101" height="25" fill="#b4b4b4" stroke="#8f8f8f"/><path d="M1.5 24.5V1.5H100.5" stroke="#c8c8c8" fill="none"/><g transform="translate(2,2)"><rect x="0.5" y="0.5" width="19" height="19" fill="#fff" stroke="#111"/><circle cx="10" cy="6" r="4" fill="#e81010"/><circle cx="5.5" cy="13.5" r="4" fill="#10d010"/><circle cx="14.5" cy="13.5" r="4" fill="#1010e8"/></g><text x="93" y="10" font-family="Liberation Sans" font-weight="bold" font-size="6.5" fill="#111">N</text><text x="93" y="22" font-family="Liberation Sans" font-weight="bold" font-size="6.5" fill="#111">D</text></svg><div class="pt" style="left:1731px;top:305px">Process10</div><svg class="a" style="left:1701px;top:327px" width="102" height="26"><rect x="0.5" y="0.5" width="101" height="25" fill="#b4b4b4" stroke="#8f8f8f"/><path d="M1.5 24.5V1.5H100.5" stroke="#c8c8c8" fill="none"/><g transform="translate(2,2)"><rect x="0.5" y="0.5" width="19" height="19" fill="#fff" stroke="#2020e0"/><rect x="10" y="1" width="9" height="18" fill="url(#chkbk)"/><path d="M1 1v18h18" stroke="#8080ff" fill="none"/><path d="M2 19 C4 8 9 3 18 2" stroke="#f07010" stroke-width="1.8" fill="none"/></g><text x="93" y="10" font-family="Liberation Sans" font-weight="bold" font-size="6.5" fill="#111">N</text><text x="93" y="22" font-family="Liberation Sans" font-weight="bold" font-size="6.5" fill="#111">D</text></svg><div class="pt" style="left:1730px;top:334px">Process09</div><svg class="a" style="left:1631px;top:357px" width="102" height="26"><rect x="0.5" y="0.5" width="101" height="25" fill="#b4b4b4" stroke="#8f8f8f"/><path d="M1.5 24.5V1.5H100.5" stroke="#c8c8c8" fill="none"/><g transform="translate(2,2)"><rect x="0" y="0" width="20" height="20" fill="url(#bluefade)"/><rect x="6" y="7" width="11" height="11" fill="none" stroke="#1010e0" stroke-width="1.6"/><rect x="4.5" y="5.5" width="11" height="11" fill="none" stroke="#20e020" stroke-width="1.6"/><rect x="2.5" y="3.5" width="11" height="11" fill="#c03020" stroke="#e02020" stroke-width="1.6" fill-opacity=".5"/><rect x="1.5" y="1.5" width="10" height="10" fill="#a09090" opacity=".8"/></g><text x="93" y="10" font-family="Liberation Sans" font-weight="bold" font-size="6.5" fill="#111">N</text><text x="93" y="22" font-family="Liberation Sans" font-weight="bold" font-size="6.5" fill="#111">D</text></svg><div class="pt" style="left:1660px;top:364px">Process47</div><div class="a" style="left:1063px;top:552px;width:416px;height:363px;background:linear-gradient(#707070,#646464 25px,#6a6a6a 26px);border:1px solid #4a4a4a"></div><svg class="a" style="left:1068px;top:557px" width="18" height="18"><rect x="0" y="0" width="17" height="17" fill="url(#bluefade)"/><rect x="6" y="7" width="11" height="11" fill="none" stroke="#1010e0" stroke-width="1.6"/><rect x="4.5" y="5.5" width="11" height="11" fill="none" stroke="#20e020" stroke-width="1.6"/><rect x="2.5" y="3.5" width="11" height="11" fill="#c03020" stroke="#e02020" stroke-width="1.6" fill-opacity=".5"/><rect x="1.5" y="1.5" width="10" height="10" fill="#a09090" opacity=".8"/></svg><div class="t" style="left:1199px;top:557px;font:bold 14px 'Liberation Sans',sans-serif;color:#cdcdcd">LRGBCombination</div><svg class="a" style="left:1438px;top:558px" width="40" height="16" fill="#e0e0e0"><rect x="3" y="2" width="10" height="2"/><path d="M8 4.5L13 10H3Z"/><path d="M25 3l8 8M33 3l-8 8" stroke="#e8e8e8" stroke-width="2.2"/></svg><div class="a" style="left:1065px;top:577px;width:412px;height:336px;background:#bfbfc1"></div><div class="sh" style="top:585px"><div class="sht">Channels / Source Images</div></div><svg class="a" style="left:1451px;top:589px" width="12" height="11" fill="#1558a8"><path d="M6 0L11.5 5H0.5Z M6 5L11.5 10H0.5Z"/></svg><div class="cb" style="left:1079px;top:619px;border:1.5px solid #6c96e6;background:#dedede"></div><svg class="a" style="left:1080px;top:620px" width="12" height="12"><path d="M1.5 6L4.5 9.5L10.5 2" stroke="#111" stroke-width="2.2" fill="none"/></svg><div class="ed" style="left:1124px;top:616px;width:315px;height:20px;background:#dcdcdc"></div><div class="t" style="left:1131px;top:620px;font-size:12.5px;color:#111">BarnardLumDrizzle_r_clone</div><svg class="a" style="left:1448px;top:621px" width="11" height="11"><rect x="0.5" y="0.5" width="10" height="10" fill="#c8c8c8" stroke="#3a3a3a"/><rect x="0" y="0" width="11" height="2.5" fill="#3a3a3a"/></svg><div class="t" style="left:1098px;top:620px;font-size:12.5px;color:#111">L</div><div class="cb" style="left:1079px;top:643px"></div><div class="ed" style="left:1124px;top:640px;width:315px;height:20px;background:#b9b9b9"></div><div class="t" style="left:1131px;top:644px;font-size:12.5px;color:#7c7c7c">&lt;Auto&gt;</div><svg class="a" style="left:1448px;top:645px" width="11" height="11"><rect x="0.5" y="0.5" width="10" height="10" fill="#c8c8c8" stroke="#7a7a7a"/><rect x="0" y="0" width="11" height="2.5" fill="#7a7a7a"/></svg><div class="t" style="left:1098px;top:644px;font-size:12.5px;color:#111">R</div><div class="cb" style="left:1079px;top:667px"></div><div class="ed" style="left:1124px;top:664px;width:315px;height:20px;background:#b9b9b9"></div><div class="t" style="left:1131px;top:668px;font-size:12.5px;color:#7c7c7c">&lt;Auto&gt;</div><svg class="a" style="left:1448px;top:669px" width="11" height="11"><rect x="0.5" y="0.5" width="10" height="10" fill="#c8c8c8" stroke="#7a7a7a"/><rect x="0" y="0" width="11" height="2.5" fill="#7a7a7a"/></svg><div class="t" style="left:1098px;top:668px;font-size:12.5px;color:#111">G</div><div class="cb" style="left:1079px;top:691px"></div><div class="ed" style="left:1124px;top:688px;width:315px;height:20px;background:#b9b9b9"></div><div class="t" style="left:1131px;top:692px;font-size:12.5px;color:#7c7c7c">&lt;Auto&gt;</div><svg class="a" style="left:1448px;top:693px" width="11" height="11"><rect x="0.5" y="0.5" width="10" height="10" fill="#c8c8c8" stroke="#7a7a7a"/><rect x="0" y="0" width="11" height="2.5" fill="#7a7a7a"/></svg><div class="t" style="left:1098px;top:692px;font-size:12.5px;color:#111">B</div><div class="t" style="left:1079px;top:716px;font-size:12.5px;color:#111">Target:</div><div class="a" style="left:1124px;top:712px;width:339px;height:22px;background:linear-gradient(#e8e8e8,#c4c4c4);border:1px solid #7a7a7a"></div><div class="a" style="left:1444px;top:714px;width:1px;height:18px;background:#8a8a8a"></div><svg class="a" style="left:1447px;top:718px" width="14" height="10"><path d="M2 2h10L7 7.5z" fill="#111"/></svg><div class="t" style="left:1131px;top:716px;font-size:12.5px;color:#111">&lt;No View Selected&gt;</div><div class="sh" style="top:746px"><div class="sht">Channel Weights</div></div><svg class="a" style="left:1451px;top:750px" width="12" height="11" fill="#1558a8"><path d="M6 5L11.5 0H0.5Z M6 10L11.5 5H0.5Z"/></svg><div class="sh" style="top:771px"><div class="sht">Transfer Functions</div></div><svg class="a" style="left:1451px;top:775px" width="12" height="11" fill="#1558a8"><path d="M6 0L11.5 5H0.5Z M6 5L11.5 10H0.5Z"/></svg><div class="t" style="left:1088px;top:807px;font-size:12.7px;color:#111">Lightness:</div><div class="t" style="left:1083px;top:833px;font-size:12.7px;color:#111">Saturation:</div><div class="ed" style="left:1149px;top:803px;width:54px;height:20px"></div><div class="t" style="left:1156px;top:807px;font-size:12.7px;color:#111">0.600</div><div class="ed" style="left:1149px;top:829px;width:54px;height:20px"></div><div class="t" style="left:1156px;top:833px;font-size:12.7px;color:#111">0.200</div><div class="a" style="left:1207px;top:810px;width:255px;height:6px;background:#dedede;border:1px solid #8a8a8a"></div><div class="a" style="left:1208px;top:811px;width:151px;height:4px;background:#8e8e8e"></div><svg class="a" style="left:1352px;top:805px" width="15" height="15"><defs><radialGradient id="kn810" cx=".4" cy=".35" r=".7"><stop offset="0" stop-color="#e8e8e8"/><stop offset="1" stop-color="#a8a8a8"/></radialGradient></defs><circle cx="7.5" cy="7.5" r="6" fill="url(#kn810)" stroke="#777"/></svg><div class="a" style="left:1207px;top:836px;width:255px;height:6px;background:#dedede;border:1px solid #8a8a8a"></div><div class="a" style="left:1208px;top:837px;width:53px;height:4px;background:#8e8e8e"></div><svg class="a" style="left:1254px;top:831px" width="15" height="15"><defs><radialGradient id="kn836" cx=".4" cy=".35" r=".7"><stop offset="0" stop-color="#e8e8e8"/><stop offset="1" stop-color="#a8a8a8"/></radialGradient></defs><circle cx="7.5" cy="7.5" r="6" fill="url(#kn836)" stroke="#777"/></svg><div class="sh" style="top:863px"><div class="cb" style="left:4px;top:3px;width:13px;height:13px"></div><div class="sht" style="left:25px">Chrominance Noise Reduction</div></div><svg class="a" style="left:1451px;top:867px" width="12" height="11" fill="#1558a8"><path d="M6 5L11.5 0H0.5Z M6 10L11.5 5H0.5Z"/></svg><div class="a" style="left:1065px;top:890px;width:412px;height:23px;background:#a9a6a0"></div><svg class="a" style="left:1070px;top:892px" width="400" height="20" fill="#1558a8"><path d="M4 4L15 15H4Z"/><rect x="29" y="4" width="11" height="11"/><circle cx="59.5" cy="9.5" r="5.5"/><rect x="338" y="4.5" width="10" height="10" fill="none" stroke="#1558a8" stroke-width="2"/><path d="M363 4.5h6l4 4v6h-10z" fill="none" stroke="#1558a8" stroke-width="2"/><path d="M387 4l4.5 4.5M397 4l-4.5 4.5M387 15l4.5-4.5M397 15l-4.5-4.5" stroke="#1558a8" stroke-width="2"/><path d="M392 9h-4l4-4zM392 9h4l-4-4z M392 10h-4l4 4z M392 10h4l-4 4z"/></svg><div class="a" style="left:0;top:1046px;width:1920px;height:34px;background:#efefef;border-top:1px solid #2e2e2e"></div><svg class="a" style="left:0;top:0" width="1920" height="1080"><defs>
<pattern id="chk" x="0.5" y="0.5" width="4" height="4" patternUnits="userSpaceOnUse"><rect width="4" height="4" fill="#efefef"/><rect width="1.3" height="1.3" fill="#444"/><rect x="2" y="2" width="1.3" height="1.3" fill="#444"/></pattern>
<pattern id="chk2" width="2" height="2" patternUnits="userSpaceOnUse"><rect width="2" height="2" fill="#fff"/><rect width="1" height="1" fill="#333"/><rect x="1" y="1" width="1" height="1" fill="#333"/></pattern>
<pattern id="chk3" width="2" height="2" patternUnits="userSpaceOnUse"><rect width="2" height="2" fill="#e6e6e6"/><rect width="1" height="1" fill="#8a8a8a"/><rect x="1" y="1" width="1" height="1" fill="#8a8a8a"/></pattern>
<linearGradient id="rgbg" x1="0" y1="0" x2="0" y2="1"><stop offset="0" stop-color="#e02010"/><stop offset=".45" stop-color="#10e010"/><stop offset="1" stop-color="#1010d0"/></linearGradient>
<linearGradient id="grayg" x1="0" y1="0" x2="1" y2="0"><stop offset="0" stop-color="#222"/><stop offset="1" stop-color="#eee"/></linearGradient>
<linearGradient id="grayg2" x1="0" y1="0" x2="1" y2="0"><stop offset="0" stop-color="#fff"/><stop offset="1" stop-color="#444"/></linearGradient>
<linearGradient id="hueg" x1="0" y1="0" x2="1" y2="0"><stop offset="0" stop-color="#000"/><stop offset=".3" stop-color="#e02020"/><stop offset=".6" stop-color="#20e020"/><stop offset="1" stop-color="#fff"/></linearGradient>
<linearGradient id="btng" x1="0" y1="0" x2="0" y2="1"><stop offset="0" stop-color="#f6f6f6"/><stop offset="1" stop-color="#d6d6d6"/></linearGradient>
<linearGradient id="sqg" x1="0" y1="0" x2="0" y2="1"><stop offset="0" stop-color="#8a8a8a"/><stop offset="1" stop-color="#2a2a2a"/></linearGradient><linearGradient id="sqb" x1="0" y1="0" x2="0" y2="1"><stop offset="0" stop-color="#7ab0ff"/><stop offset="1" stop-color="#1448c0"/></linearGradient></defs><rect x="6" y="1052" width="6" height="22" fill="url(#chk)"/><rect x="347" y="1052" width="6" height="22" fill="url(#chk)"/><rect x="458" y="1052" width="6" height="22" fill="url(#chk)"/><rect x="665" y="1052" width="6" height="22" fill="url(#chk)"/><rect x="1125" y="1052" width="6" height="22" fill="url(#chk)"/><rect x="20.5" y="1053.5" width="292" height="19" fill="url(#btng)" stroke="#8a8a8a"/><rect x="295" y="1056" width="1" height="14" fill="#a8a8a8"/><path d="M299.5 1061.0h9l-4.5 4.5z" fill="#222"/><rect x="28.5" y="1057.5" width="11" height="11" fill="none" stroke="#444" stroke-width="1.6"/><rect x="28" y="1057" width="12" height="3" fill="#444"/><rect x="317.5" y="1053.5" width="19" height="19" fill="#fff" stroke="#888"/><path d="M322.5 1058.5h10v10h-10z" fill="none" stroke="#333" stroke-width="1.8"/><path d="M322 1058l3-2h8" stroke="#333" fill="none"/><rect x="363" y="1054" width="19" height="19" fill="url(#sqg)"/><rect x="386" y="1054" width="19" height="19" fill="url(#sqb)"/><rect x="409" y="1054" width="19" height="19" fill="url(#sqg)"/><rect x="432" y="1054" width="19" height="19" fill="url(#sqg)"/><path d="M1095 1058v10l9-5z" fill="#222"/></svg><div class="t" style="left:48px;top:1057px;font:12px 'Liberation Mono',monospace;color:#111">Image05_clone</div><div class="t" style="left:1149px;top:1057px;font:11.75px 'Liberation Mono',monospace;color:#111">w:6776 · h:5424 · n:3 · f32 · RGB · 420.605 MiB</div></body></html>
